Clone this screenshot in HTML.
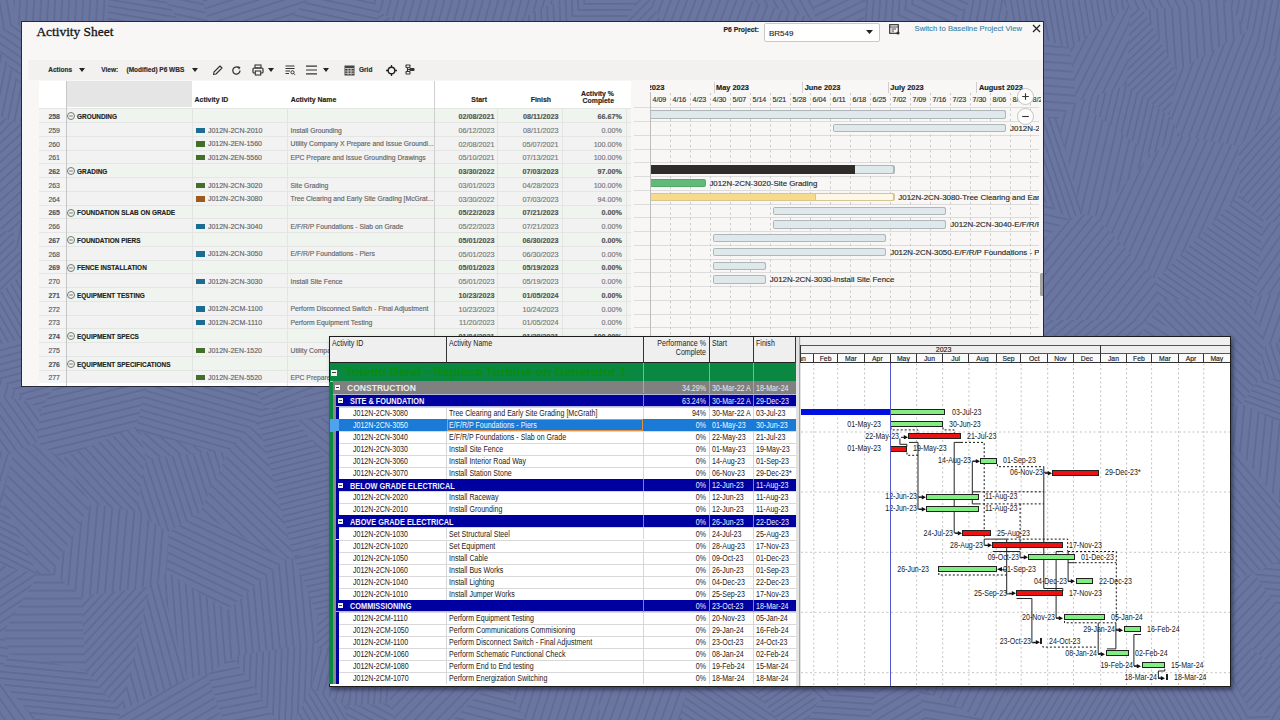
<!DOCTYPE html><html><head><meta charset="utf-8"><style>
html,body{margin:0;padding:0;}
body{width:1280px;height:720px;position:relative;overflow:hidden;background:#65719a;font-family:'Liberation Sans', sans-serif;}
body div, body svg{position:absolute;}
</style></head><body>
<svg style="left:0;top:0;width:1280px;height:720px" viewBox="0 0 1280 720"><rect width="1280" height="720" fill="#6a75a0"/><defs><pattern id="h0" patternUnits="userSpaceOnUse" width="7.93" height="7.93" patternTransform="rotate(117.5)"><rect width="7.93" height="1.6" fill="#5f6a94"/></pattern><pattern id="h1" patternUnits="userSpaceOnUse" width="6.50" height="6.50" patternTransform="rotate(121.5)"><rect width="6.50" height="1.6" fill="#5f6a94"/></pattern><pattern id="h2" patternUnits="userSpaceOnUse" width="7.70" height="7.70" patternTransform="rotate(116.8)"><rect width="7.70" height="1.6" fill="#5f6a94"/></pattern><pattern id="h3" patternUnits="userSpaceOnUse" width="6.23" height="6.23" patternTransform="rotate(60.2)"><rect width="6.23" height="1.6" fill="#5f6a94"/></pattern><pattern id="h4" patternUnits="userSpaceOnUse" width="6.90" height="6.90" patternTransform="rotate(49.4)"><rect width="6.90" height="1.6" fill="#5f6a94"/></pattern><pattern id="h5" patternUnits="userSpaceOnUse" width="7.45" height="7.45" patternTransform="rotate(86.2)"><rect width="7.45" height="1.6" fill="#5f6a94"/></pattern><pattern id="h6" patternUnits="userSpaceOnUse" width="7.15" height="7.15" patternTransform="rotate(148.1)"><rect width="7.15" height="1.6" fill="#5f6a94"/></pattern><pattern id="h7" patternUnits="userSpaceOnUse" width="6.21" height="6.21" patternTransform="rotate(-4.9)"><rect width="6.21" height="1.6" fill="#5f6a94"/></pattern><pattern id="h8" patternUnits="userSpaceOnUse" width="6.77" height="6.77" patternTransform="rotate(134.4)"><rect width="6.77" height="1.6" fill="#5f6a94"/></pattern><pattern id="h9" patternUnits="userSpaceOnUse" width="6.63" height="6.63" patternTransform="rotate(104.8)"><rect width="6.63" height="1.6" fill="#5f6a94"/></pattern><pattern id="h10" patternUnits="userSpaceOnUse" width="7.47" height="7.47" patternTransform="rotate(114.4)"><rect width="7.47" height="1.6" fill="#5f6a94"/></pattern><pattern id="h11" patternUnits="userSpaceOnUse" width="7.93" height="7.93" patternTransform="rotate(4.2)"><rect width="7.93" height="1.6" fill="#5f6a94"/></pattern><pattern id="h12" patternUnits="userSpaceOnUse" width="6.42" height="6.42" patternTransform="rotate(92.2)"><rect width="6.42" height="1.6" fill="#5f6a94"/></pattern><pattern id="h13" patternUnits="userSpaceOnUse" width="7.86" height="7.86" patternTransform="rotate(10.0)"><rect width="7.86" height="1.6" fill="#5f6a94"/></pattern><pattern id="h14" patternUnits="userSpaceOnUse" width="6.24" height="6.24" patternTransform="rotate(108.8)"><rect width="6.24" height="1.6" fill="#5f6a94"/></pattern><pattern id="h15" patternUnits="userSpaceOnUse" width="7.71" height="7.71" patternTransform="rotate(133.5)"><rect width="7.71" height="1.6" fill="#5f6a94"/></pattern><pattern id="h16" patternUnits="userSpaceOnUse" width="7.24" height="7.24" patternTransform="rotate(58.0)"><rect width="7.24" height="1.6" fill="#5f6a94"/></pattern><pattern id="h17" patternUnits="userSpaceOnUse" width="6.74" height="6.74" patternTransform="rotate(78.6)"><rect width="6.74" height="1.6" fill="#5f6a94"/></pattern><pattern id="h18" patternUnits="userSpaceOnUse" width="7.31" height="7.31" patternTransform="rotate(169.0)"><rect width="7.31" height="1.6" fill="#5f6a94"/></pattern><pattern id="h19" patternUnits="userSpaceOnUse" width="7.74" height="7.74" patternTransform="rotate(149.2)"><rect width="7.74" height="1.6" fill="#5f6a94"/></pattern><pattern id="h20" patternUnits="userSpaceOnUse" width="8.04" height="8.04" patternTransform="rotate(114.4)"><rect width="8.04" height="1.6" fill="#5f6a94"/></pattern><pattern id="h21" patternUnits="userSpaceOnUse" width="6.78" height="6.78" patternTransform="rotate(47.9)"><rect width="6.78" height="1.6" fill="#5f6a94"/></pattern><pattern id="h22" patternUnits="userSpaceOnUse" width="6.34" height="6.34" patternTransform="rotate(9.4)"><rect width="6.34" height="1.6" fill="#5f6a94"/></pattern><pattern id="h23" patternUnits="userSpaceOnUse" width="7.82" height="7.82" patternTransform="rotate(39.5)"><rect width="7.82" height="1.6" fill="#5f6a94"/></pattern><pattern id="h24" patternUnits="userSpaceOnUse" width="6.68" height="6.68" patternTransform="rotate(106.9)"><rect width="6.68" height="1.6" fill="#5f6a94"/></pattern><pattern id="h25" patternUnits="userSpaceOnUse" width="7.82" height="7.82" patternTransform="rotate(89.6)"><rect width="7.82" height="1.6" fill="#5f6a94"/></pattern><pattern id="h26" patternUnits="userSpaceOnUse" width="6.63" height="6.63" patternTransform="rotate(140.1)"><rect width="6.63" height="1.6" fill="#5f6a94"/></pattern><pattern id="h27" patternUnits="userSpaceOnUse" width="6.27" height="6.27" patternTransform="rotate(100.2)"><rect width="6.27" height="1.6" fill="#5f6a94"/></pattern><pattern id="h28" patternUnits="userSpaceOnUse" width="7.78" height="7.78" patternTransform="rotate(24.9)"><rect width="7.78" height="1.6" fill="#5f6a94"/></pattern><pattern id="h29" patternUnits="userSpaceOnUse" width="6.48" height="6.48" patternTransform="rotate(100.8)"><rect width="6.48" height="1.6" fill="#5f6a94"/></pattern><pattern id="h30" patternUnits="userSpaceOnUse" width="7.53" height="7.53" patternTransform="rotate(63.8)"><rect width="7.53" height="1.6" fill="#5f6a94"/></pattern><pattern id="h31" patternUnits="userSpaceOnUse" width="6.96" height="6.96" patternTransform="rotate(146.8)"><rect width="6.96" height="1.6" fill="#5f6a94"/></pattern><pattern id="h32" patternUnits="userSpaceOnUse" width="7.53" height="7.53" patternTransform="rotate(-1.9)"><rect width="7.53" height="1.6" fill="#5f6a94"/></pattern><pattern id="h33" patternUnits="userSpaceOnUse" width="7.39" height="7.39" patternTransform="rotate(80.3)"><rect width="7.39" height="1.6" fill="#5f6a94"/></pattern><pattern id="h34" patternUnits="userSpaceOnUse" width="7.73" height="7.73" patternTransform="rotate(149.5)"><rect width="7.73" height="1.6" fill="#5f6a94"/></pattern><pattern id="h35" patternUnits="userSpaceOnUse" width="7.35" height="7.35" patternTransform="rotate(25.4)"><rect width="7.35" height="1.6" fill="#5f6a94"/></pattern><pattern id="h36" patternUnits="userSpaceOnUse" width="6.45" height="6.45" patternTransform="rotate(59.4)"><rect width="6.45" height="1.6" fill="#5f6a94"/></pattern><pattern id="h37" patternUnits="userSpaceOnUse" width="7.45" height="7.45" patternTransform="rotate(24.4)"><rect width="7.45" height="1.6" fill="#5f6a94"/></pattern><pattern id="h38" patternUnits="userSpaceOnUse" width="6.11" height="6.11" patternTransform="rotate(131.8)"><rect width="6.11" height="1.6" fill="#5f6a94"/></pattern><pattern id="h39" patternUnits="userSpaceOnUse" width="7.43" height="7.43" patternTransform="rotate(94.9)"><rect width="7.43" height="1.6" fill="#5f6a94"/></pattern><pattern id="h40" patternUnits="userSpaceOnUse" width="6.93" height="6.93" patternTransform="rotate(147.7)"><rect width="6.93" height="1.6" fill="#5f6a94"/></pattern><pattern id="h41" patternUnits="userSpaceOnUse" width="8.04" height="8.04" patternTransform="rotate(54.8)"><rect width="8.04" height="1.6" fill="#5f6a94"/></pattern><pattern id="h42" patternUnits="userSpaceOnUse" width="6.46" height="6.46" patternTransform="rotate(101.0)"><rect width="6.46" height="1.6" fill="#5f6a94"/></pattern><pattern id="h43" patternUnits="userSpaceOnUse" width="6.04" height="6.04" patternTransform="rotate(146.5)"><rect width="6.04" height="1.6" fill="#5f6a94"/></pattern><pattern id="h44" patternUnits="userSpaceOnUse" width="8.00" height="8.00" patternTransform="rotate(134.2)"><rect width="8.00" height="1.6" fill="#5f6a94"/></pattern><pattern id="h45" patternUnits="userSpaceOnUse" width="6.90" height="6.90" patternTransform="rotate(-0.5)"><rect width="6.90" height="1.6" fill="#5f6a94"/></pattern><pattern id="h46" patternUnits="userSpaceOnUse" width="6.04" height="6.04" patternTransform="rotate(148.9)"><rect width="6.04" height="1.6" fill="#5f6a94"/></pattern><pattern id="h47" patternUnits="userSpaceOnUse" width="7.71" height="7.71" patternTransform="rotate(124.0)"><rect width="7.71" height="1.6" fill="#5f6a94"/></pattern><pattern id="h48" patternUnits="userSpaceOnUse" width="6.15" height="6.15" patternTransform="rotate(133.2)"><rect width="6.15" height="1.6" fill="#5f6a94"/></pattern><pattern id="h49" patternUnits="userSpaceOnUse" width="7.64" height="7.64" patternTransform="rotate(11.8)"><rect width="7.64" height="1.6" fill="#5f6a94"/></pattern><pattern id="h50" patternUnits="userSpaceOnUse" width="6.06" height="6.06" patternTransform="rotate(20.2)"><rect width="6.06" height="1.6" fill="#5f6a94"/></pattern><pattern id="h51" patternUnits="userSpaceOnUse" width="6.99" height="6.99" patternTransform="rotate(46.7)"><rect width="6.99" height="1.6" fill="#5f6a94"/></pattern><pattern id="h52" patternUnits="userSpaceOnUse" width="7.70" height="7.70" patternTransform="rotate(-5.4)"><rect width="7.70" height="1.6" fill="#5f6a94"/></pattern><pattern id="h53" patternUnits="userSpaceOnUse" width="6.06" height="6.06" patternTransform="rotate(102.7)"><rect width="6.06" height="1.6" fill="#5f6a94"/></pattern><pattern id="h54" patternUnits="userSpaceOnUse" width="6.36" height="6.36" patternTransform="rotate(5.4)"><rect width="6.36" height="1.6" fill="#5f6a94"/></pattern><pattern id="h55" patternUnits="userSpaceOnUse" width="6.79" height="6.79" patternTransform="rotate(165.1)"><rect width="6.79" height="1.6" fill="#5f6a94"/></pattern><pattern id="h56" patternUnits="userSpaceOnUse" width="7.90" height="7.90" patternTransform="rotate(116.8)"><rect width="7.90" height="1.6" fill="#5f6a94"/></pattern><pattern id="h57" patternUnits="userSpaceOnUse" width="8.02" height="8.02" patternTransform="rotate(10.0)"><rect width="8.02" height="1.6" fill="#5f6a94"/></pattern><pattern id="h58" patternUnits="userSpaceOnUse" width="7.75" height="7.75" patternTransform="rotate(31.2)"><rect width="7.75" height="1.6" fill="#5f6a94"/></pattern><pattern id="h59" patternUnits="userSpaceOnUse" width="6.88" height="6.88" patternTransform="rotate(46.5)"><rect width="6.88" height="1.6" fill="#5f6a94"/></pattern><pattern id="h60" patternUnits="userSpaceOnUse" width="7.15" height="7.15" patternTransform="rotate(74.8)"><rect width="7.15" height="1.6" fill="#5f6a94"/></pattern><pattern id="h61" patternUnits="userSpaceOnUse" width="6.23" height="6.23" patternTransform="rotate(90.3)"><rect width="6.23" height="1.6" fill="#5f6a94"/></pattern><pattern id="h62" patternUnits="userSpaceOnUse" width="6.60" height="6.60" patternTransform="rotate(5.0)"><rect width="6.60" height="1.6" fill="#5f6a94"/></pattern><pattern id="h63" patternUnits="userSpaceOnUse" width="8.05" height="8.05" patternTransform="rotate(109.7)"><rect width="8.05" height="1.6" fill="#5f6a94"/></pattern><pattern id="h64" patternUnits="userSpaceOnUse" width="6.60" height="6.60" patternTransform="rotate(115.4)"><rect width="6.60" height="1.6" fill="#5f6a94"/></pattern><pattern id="h65" patternUnits="userSpaceOnUse" width="6.50" height="6.50" patternTransform="rotate(18.4)"><rect width="6.50" height="1.6" fill="#5f6a94"/></pattern><pattern id="h66" patternUnits="userSpaceOnUse" width="6.22" height="6.22" patternTransform="rotate(87.8)"><rect width="6.22" height="1.6" fill="#5f6a94"/></pattern><pattern id="h67" patternUnits="userSpaceOnUse" width="7.41" height="7.41" patternTransform="rotate(14.7)"><rect width="7.41" height="1.6" fill="#5f6a94"/></pattern><pattern id="h68" patternUnits="userSpaceOnUse" width="7.35" height="7.35" patternTransform="rotate(95.6)"><rect width="7.35" height="1.6" fill="#5f6a94"/></pattern><pattern id="h69" patternUnits="userSpaceOnUse" width="7.42" height="7.42" patternTransform="rotate(54.7)"><rect width="7.42" height="1.6" fill="#5f6a94"/></pattern><pattern id="h70" patternUnits="userSpaceOnUse" width="7.62" height="7.62" patternTransform="rotate(2.4)"><rect width="7.62" height="1.6" fill="#5f6a94"/></pattern><pattern id="h71" patternUnits="userSpaceOnUse" width="6.10" height="6.10" patternTransform="rotate(79.6)"><rect width="6.10" height="1.6" fill="#5f6a94"/></pattern><pattern id="h72" patternUnits="userSpaceOnUse" width="7.57" height="7.57" patternTransform="rotate(73.6)"><rect width="7.57" height="1.6" fill="#5f6a94"/></pattern><pattern id="h73" patternUnits="userSpaceOnUse" width="7.32" height="7.32" patternTransform="rotate(4.8)"><rect width="7.32" height="1.6" fill="#5f6a94"/></pattern><pattern id="h74" patternUnits="userSpaceOnUse" width="6.88" height="6.88" patternTransform="rotate(30.9)"><rect width="6.88" height="1.6" fill="#5f6a94"/></pattern><pattern id="h75" patternUnits="userSpaceOnUse" width="7.96" height="7.96" patternTransform="rotate(166.9)"><rect width="7.96" height="1.6" fill="#5f6a94"/></pattern><pattern id="h76" patternUnits="userSpaceOnUse" width="6.85" height="6.85" patternTransform="rotate(159.6)"><rect width="6.85" height="1.6" fill="#5f6a94"/></pattern><pattern id="h77" patternUnits="userSpaceOnUse" width="6.75" height="6.75" patternTransform="rotate(18.7)"><rect width="6.75" height="1.6" fill="#5f6a94"/></pattern><pattern id="h78" patternUnits="userSpaceOnUse" width="6.59" height="6.59" patternTransform="rotate(27.9)"><rect width="6.59" height="1.6" fill="#5f6a94"/></pattern><pattern id="h79" patternUnits="userSpaceOnUse" width="7.37" height="7.37" patternTransform="rotate(27.2)"><rect width="7.37" height="1.6" fill="#5f6a94"/></pattern><pattern id="h80" patternUnits="userSpaceOnUse" width="7.09" height="7.09" patternTransform="rotate(54.4)"><rect width="7.09" height="1.6" fill="#5f6a94"/></pattern><pattern id="h81" patternUnits="userSpaceOnUse" width="6.01" height="6.01" patternTransform="rotate(165.7)"><rect width="6.01" height="1.6" fill="#5f6a94"/></pattern><pattern id="h82" patternUnits="userSpaceOnUse" width="7.69" height="7.69" patternTransform="rotate(5.6)"><rect width="7.69" height="1.6" fill="#5f6a94"/></pattern><pattern id="h83" patternUnits="userSpaceOnUse" width="7.94" height="7.94" patternTransform="rotate(94.3)"><rect width="7.94" height="1.6" fill="#5f6a94"/></pattern><pattern id="h84" patternUnits="userSpaceOnUse" width="7.06" height="7.06" patternTransform="rotate(129.2)"><rect width="7.06" height="1.6" fill="#5f6a94"/></pattern><pattern id="h85" patternUnits="userSpaceOnUse" width="6.64" height="6.64" patternTransform="rotate(28.3)"><rect width="6.64" height="1.6" fill="#5f6a94"/></pattern><pattern id="h86" patternUnits="userSpaceOnUse" width="7.25" height="7.25" patternTransform="rotate(-4.0)"><rect width="7.25" height="1.6" fill="#5f6a94"/></pattern><pattern id="h87" patternUnits="userSpaceOnUse" width="6.15" height="6.15" patternTransform="rotate(32.7)"><rect width="6.15" height="1.6" fill="#5f6a94"/></pattern><pattern id="h88" patternUnits="userSpaceOnUse" width="7.27" height="7.27" patternTransform="rotate(121.3)"><rect width="7.27" height="1.6" fill="#5f6a94"/></pattern><pattern id="h89" patternUnits="userSpaceOnUse" width="7.92" height="7.92" patternTransform="rotate(29.4)"><rect width="7.92" height="1.6" fill="#5f6a94"/></pattern><pattern id="h90" patternUnits="userSpaceOnUse" width="6.62" height="6.62" patternTransform="rotate(85.4)"><rect width="6.62" height="1.6" fill="#5f6a94"/></pattern><pattern id="h91" patternUnits="userSpaceOnUse" width="6.86" height="6.86" patternTransform="rotate(44.5)"><rect width="6.86" height="1.6" fill="#5f6a94"/></pattern><pattern id="h92" patternUnits="userSpaceOnUse" width="7.35" height="7.35" patternTransform="rotate(99.6)"><rect width="7.35" height="1.6" fill="#5f6a94"/></pattern><pattern id="h93" patternUnits="userSpaceOnUse" width="7.99" height="7.99" patternTransform="rotate(30.4)"><rect width="7.99" height="1.6" fill="#5f6a94"/></pattern><pattern id="h94" patternUnits="userSpaceOnUse" width="6.22" height="6.22" patternTransform="rotate(129.0)"><rect width="6.22" height="1.6" fill="#5f6a94"/></pattern><pattern id="h95" patternUnits="userSpaceOnUse" width="6.39" height="6.39" patternTransform="rotate(92.2)"><rect width="6.39" height="1.6" fill="#5f6a94"/></pattern><pattern id="h96" patternUnits="userSpaceOnUse" width="7.16" height="7.16" patternTransform="rotate(-5.6)"><rect width="7.16" height="1.6" fill="#5f6a94"/></pattern><pattern id="h97" patternUnits="userSpaceOnUse" width="6.69" height="6.69" patternTransform="rotate(107.5)"><rect width="6.69" height="1.6" fill="#5f6a94"/></pattern><pattern id="h98" patternUnits="userSpaceOnUse" width="6.53" height="6.53" patternTransform="rotate(101.6)"><rect width="6.53" height="1.6" fill="#5f6a94"/></pattern><pattern id="h99" patternUnits="userSpaceOnUse" width="7.03" height="7.03" patternTransform="rotate(42.6)"><rect width="7.03" height="1.6" fill="#5f6a94"/></pattern><pattern id="h100" patternUnits="userSpaceOnUse" width="7.65" height="7.65" patternTransform="rotate(43.4)"><rect width="7.65" height="1.6" fill="#5f6a94"/></pattern><pattern id="h101" patternUnits="userSpaceOnUse" width="7.73" height="7.73" patternTransform="rotate(154.1)"><rect width="7.73" height="1.6" fill="#5f6a94"/></pattern><pattern id="h102" patternUnits="userSpaceOnUse" width="6.68" height="6.68" patternTransform="rotate(134.9)"><rect width="6.68" height="1.6" fill="#5f6a94"/></pattern><pattern id="h103" patternUnits="userSpaceOnUse" width="6.98" height="6.98" patternTransform="rotate(34.0)"><rect width="6.98" height="1.6" fill="#5f6a94"/></pattern><pattern id="h104" patternUnits="userSpaceOnUse" width="6.78" height="6.78" patternTransform="rotate(-4.9)"><rect width="6.78" height="1.6" fill="#5f6a94"/></pattern><pattern id="h105" patternUnits="userSpaceOnUse" width="7.88" height="7.88" patternTransform="rotate(162.4)"><rect width="7.88" height="1.6" fill="#5f6a94"/></pattern><pattern id="h106" patternUnits="userSpaceOnUse" width="6.94" height="6.94" patternTransform="rotate(74.7)"><rect width="6.94" height="1.6" fill="#5f6a94"/></pattern><pattern id="h107" patternUnits="userSpaceOnUse" width="7.63" height="7.63" patternTransform="rotate(121.5)"><rect width="7.63" height="1.6" fill="#5f6a94"/></pattern><pattern id="h108" patternUnits="userSpaceOnUse" width="6.17" height="6.17" patternTransform="rotate(92.3)"><rect width="6.17" height="1.6" fill="#5f6a94"/></pattern><pattern id="h109" patternUnits="userSpaceOnUse" width="6.34" height="6.34" patternTransform="rotate(136.0)"><rect width="6.34" height="1.6" fill="#5f6a94"/></pattern><pattern id="h110" patternUnits="userSpaceOnUse" width="7.37" height="7.37" patternTransform="rotate(84.3)"><rect width="7.37" height="1.6" fill="#5f6a94"/></pattern><pattern id="h111" patternUnits="userSpaceOnUse" width="6.75" height="6.75" patternTransform="rotate(132.7)"><rect width="6.75" height="1.6" fill="#5f6a94"/></pattern><pattern id="h112" patternUnits="userSpaceOnUse" width="7.40" height="7.40" patternTransform="rotate(105.5)"><rect width="7.40" height="1.6" fill="#5f6a94"/></pattern><pattern id="h113" patternUnits="userSpaceOnUse" width="7.66" height="7.66" patternTransform="rotate(110.8)"><rect width="7.66" height="1.6" fill="#5f6a94"/></pattern><pattern id="h114" patternUnits="userSpaceOnUse" width="6.08" height="6.08" patternTransform="rotate(165.7)"><rect width="6.08" height="1.6" fill="#5f6a94"/></pattern><pattern id="h115" patternUnits="userSpaceOnUse" width="6.71" height="6.71" patternTransform="rotate(33.6)"><rect width="6.71" height="1.6" fill="#5f6a94"/></pattern><pattern id="h116" patternUnits="userSpaceOnUse" width="7.57" height="7.57" patternTransform="rotate(129.2)"><rect width="7.57" height="1.6" fill="#5f6a94"/></pattern><pattern id="h117" patternUnits="userSpaceOnUse" width="6.11" height="6.11" patternTransform="rotate(42.4)"><rect width="6.11" height="1.6" fill="#5f6a94"/></pattern><pattern id="h118" patternUnits="userSpaceOnUse" width="7.23" height="7.23" patternTransform="rotate(18.3)"><rect width="7.23" height="1.6" fill="#5f6a94"/></pattern><pattern id="h119" patternUnits="userSpaceOnUse" width="7.98" height="7.98" patternTransform="rotate(164.0)"><rect width="7.98" height="1.6" fill="#5f6a94"/></pattern><pattern id="h120" patternUnits="userSpaceOnUse" width="7.45" height="7.45" patternTransform="rotate(-2.7)"><rect width="7.45" height="1.6" fill="#5f6a94"/></pattern><pattern id="h121" patternUnits="userSpaceOnUse" width="6.14" height="6.14" patternTransform="rotate(9.5)"><rect width="6.14" height="1.6" fill="#5f6a94"/></pattern><pattern id="h122" patternUnits="userSpaceOnUse" width="7.39" height="7.39" patternTransform="rotate(64.8)"><rect width="7.39" height="1.6" fill="#5f6a94"/></pattern><pattern id="h123" patternUnits="userSpaceOnUse" width="7.13" height="7.13" patternTransform="rotate(166.3)"><rect width="7.13" height="1.6" fill="#5f6a94"/></pattern><pattern id="h124" patternUnits="userSpaceOnUse" width="7.83" height="7.83" patternTransform="rotate(105.2)"><rect width="7.83" height="1.6" fill="#5f6a94"/></pattern><pattern id="h125" patternUnits="userSpaceOnUse" width="7.60" height="7.60" patternTransform="rotate(43.1)"><rect width="7.60" height="1.6" fill="#5f6a94"/></pattern><pattern id="h126" patternUnits="userSpaceOnUse" width="5.96" height="5.96" patternTransform="rotate(88.7)"><rect width="5.96" height="1.6" fill="#5f6a94"/></pattern><pattern id="h127" patternUnits="userSpaceOnUse" width="7.53" height="7.53" patternTransform="rotate(88.5)"><rect width="7.53" height="1.6" fill="#5f6a94"/></pattern><pattern id="h128" patternUnits="userSpaceOnUse" width="7.86" height="7.86" patternTransform="rotate(124.8)"><rect width="7.86" height="1.6" fill="#5f6a94"/></pattern><pattern id="h129" patternUnits="userSpaceOnUse" width="6.63" height="6.63" patternTransform="rotate(132.9)"><rect width="6.63" height="1.6" fill="#5f6a94"/></pattern><pattern id="h130" patternUnits="userSpaceOnUse" width="7.40" height="7.40" patternTransform="rotate(169.7)"><rect width="7.40" height="1.6" fill="#5f6a94"/></pattern><pattern id="h131" patternUnits="userSpaceOnUse" width="6.16" height="6.16" patternTransform="rotate(72.0)"><rect width="6.16" height="1.6" fill="#5f6a94"/></pattern><pattern id="h132" patternUnits="userSpaceOnUse" width="6.51" height="6.51" patternTransform="rotate(57.7)"><rect width="6.51" height="1.6" fill="#5f6a94"/></pattern><pattern id="h133" patternUnits="userSpaceOnUse" width="7.95" height="7.95" patternTransform="rotate(129.9)"><rect width="7.95" height="1.6" fill="#5f6a94"/></pattern><pattern id="h134" patternUnits="userSpaceOnUse" width="7.56" height="7.56" patternTransform="rotate(16.6)"><rect width="7.56" height="1.6" fill="#5f6a94"/></pattern><pattern id="h135" patternUnits="userSpaceOnUse" width="7.15" height="7.15" patternTransform="rotate(46.9)"><rect width="7.15" height="1.6" fill="#5f6a94"/></pattern><pattern id="h136" patternUnits="userSpaceOnUse" width="7.80" height="7.80" patternTransform="rotate(154.0)"><rect width="7.80" height="1.6" fill="#5f6a94"/></pattern><pattern id="h137" patternUnits="userSpaceOnUse" width="6.43" height="6.43" patternTransform="rotate(163.9)"><rect width="6.43" height="1.6" fill="#5f6a94"/></pattern><pattern id="h138" patternUnits="userSpaceOnUse" width="7.85" height="7.85" patternTransform="rotate(105.3)"><rect width="7.85" height="1.6" fill="#5f6a94"/></pattern><pattern id="h139" patternUnits="userSpaceOnUse" width="6.13" height="6.13" patternTransform="rotate(59.0)"><rect width="6.13" height="1.6" fill="#5f6a94"/></pattern><pattern id="h140" patternUnits="userSpaceOnUse" width="6.01" height="6.01" patternTransform="rotate(71.2)"><rect width="6.01" height="1.6" fill="#5f6a94"/></pattern><pattern id="h141" patternUnits="userSpaceOnUse" width="7.12" height="7.12" patternTransform="rotate(12.5)"><rect width="7.12" height="1.6" fill="#5f6a94"/></pattern><pattern id="h142" patternUnits="userSpaceOnUse" width="6.35" height="6.35" patternTransform="rotate(131.2)"><rect width="6.35" height="1.6" fill="#5f6a94"/></pattern><pattern id="h143" patternUnits="userSpaceOnUse" width="7.60" height="7.60" patternTransform="rotate(130.2)"><rect width="7.60" height="1.6" fill="#5f6a94"/></pattern><pattern id="h144" patternUnits="userSpaceOnUse" width="6.08" height="6.08" patternTransform="rotate(77.7)"><rect width="6.08" height="1.6" fill="#5f6a94"/></pattern><pattern id="h145" patternUnits="userSpaceOnUse" width="7.04" height="7.04" patternTransform="rotate(100.7)"><rect width="7.04" height="1.6" fill="#5f6a94"/></pattern><pattern id="h146" patternUnits="userSpaceOnUse" width="7.74" height="7.74" patternTransform="rotate(12.8)"><rect width="7.74" height="1.6" fill="#5f6a94"/></pattern><pattern id="h147" patternUnits="userSpaceOnUse" width="7.84" height="7.84" patternTransform="rotate(148.6)"><rect width="7.84" height="1.6" fill="#5f6a94"/></pattern><pattern id="h148" patternUnits="userSpaceOnUse" width="7.63" height="7.63" patternTransform="rotate(166.4)"><rect width="7.63" height="1.6" fill="#5f6a94"/></pattern><pattern id="h149" patternUnits="userSpaceOnUse" width="7.36" height="7.36" patternTransform="rotate(9.0)"><rect width="7.36" height="1.6" fill="#5f6a94"/></pattern><pattern id="h150" patternUnits="userSpaceOnUse" width="6.27" height="6.27" patternTransform="rotate(10.1)"><rect width="6.27" height="1.6" fill="#5f6a94"/></pattern><pattern id="h151" patternUnits="userSpaceOnUse" width="7.16" height="7.16" patternTransform="rotate(138.1)"><rect width="7.16" height="1.6" fill="#5f6a94"/></pattern><pattern id="h152" patternUnits="userSpaceOnUse" width="7.66" height="7.66" patternTransform="rotate(107.8)"><rect width="7.66" height="1.6" fill="#5f6a94"/></pattern><pattern id="h153" patternUnits="userSpaceOnUse" width="7.89" height="7.89" patternTransform="rotate(32.6)"><rect width="7.89" height="1.6" fill="#5f6a94"/></pattern><pattern id="h154" patternUnits="userSpaceOnUse" width="7.98" height="7.98" patternTransform="rotate(136.5)"><rect width="7.98" height="1.6" fill="#5f6a94"/></pattern><pattern id="h155" patternUnits="userSpaceOnUse" width="7.66" height="7.66" patternTransform="rotate(13.4)"><rect width="7.66" height="1.6" fill="#5f6a94"/></pattern><pattern id="h156" patternUnits="userSpaceOnUse" width="6.74" height="6.74" patternTransform="rotate(41.5)"><rect width="6.74" height="1.6" fill="#5f6a94"/></pattern><pattern id="h157" patternUnits="userSpaceOnUse" width="8.02" height="8.02" patternTransform="rotate(109.7)"><rect width="8.02" height="1.6" fill="#5f6a94"/></pattern><pattern id="h158" patternUnits="userSpaceOnUse" width="7.93" height="7.93" patternTransform="rotate(12.0)"><rect width="7.93" height="1.6" fill="#5f6a94"/></pattern><pattern id="h159" patternUnits="userSpaceOnUse" width="6.20" height="6.20" patternTransform="rotate(103.5)"><rect width="6.20" height="1.6" fill="#5f6a94"/></pattern><pattern id="h160" patternUnits="userSpaceOnUse" width="6.23" height="6.23" patternTransform="rotate(140.5)"><rect width="6.23" height="1.6" fill="#5f6a94"/></pattern><pattern id="h161" patternUnits="userSpaceOnUse" width="7.97" height="7.97" patternTransform="rotate(-0.1)"><rect width="7.97" height="1.6" fill="#5f6a94"/></pattern><pattern id="h162" patternUnits="userSpaceOnUse" width="7.55" height="7.55" patternTransform="rotate(159.9)"><rect width="7.55" height="1.6" fill="#5f6a94"/></pattern><pattern id="h163" patternUnits="userSpaceOnUse" width="5.98" height="5.98" patternTransform="rotate(167.5)"><rect width="5.98" height="1.6" fill="#5f6a94"/></pattern><pattern id="h164" patternUnits="userSpaceOnUse" width="7.53" height="7.53" patternTransform="rotate(111.0)"><rect width="7.53" height="1.6" fill="#5f6a94"/></pattern><pattern id="h165" patternUnits="userSpaceOnUse" width="6.75" height="6.75" patternTransform="rotate(50.0)"><rect width="6.75" height="1.6" fill="#5f6a94"/></pattern><pattern id="h166" patternUnits="userSpaceOnUse" width="7.30" height="7.30" patternTransform="rotate(64.9)"><rect width="7.30" height="1.6" fill="#5f6a94"/></pattern><pattern id="h167" patternUnits="userSpaceOnUse" width="6.57" height="6.57" patternTransform="rotate(15.9)"><rect width="6.57" height="1.6" fill="#5f6a94"/></pattern><pattern id="h168" patternUnits="userSpaceOnUse" width="6.08" height="6.08" patternTransform="rotate(80.3)"><rect width="6.08" height="1.6" fill="#5f6a94"/></pattern><pattern id="h169" patternUnits="userSpaceOnUse" width="6.83" height="6.83" patternTransform="rotate(84.6)"><rect width="6.83" height="1.6" fill="#5f6a94"/></pattern><pattern id="h170" patternUnits="userSpaceOnUse" width="7.46" height="7.46" patternTransform="rotate(42.3)"><rect width="7.46" height="1.6" fill="#5f6a94"/></pattern><pattern id="h171" patternUnits="userSpaceOnUse" width="6.15" height="6.15" patternTransform="rotate(27.3)"><rect width="6.15" height="1.6" fill="#5f6a94"/></pattern><pattern id="h172" patternUnits="userSpaceOnUse" width="6.33" height="6.33" patternTransform="rotate(104.2)"><rect width="6.33" height="1.6" fill="#5f6a94"/></pattern><pattern id="h173" patternUnits="userSpaceOnUse" width="6.46" height="6.46" patternTransform="rotate(94.3)"><rect width="6.46" height="1.6" fill="#5f6a94"/></pattern><pattern id="h174" patternUnits="userSpaceOnUse" width="7.65" height="7.65" patternTransform="rotate(103.3)"><rect width="7.65" height="1.6" fill="#5f6a94"/></pattern><pattern id="h175" patternUnits="userSpaceOnUse" width="6.25" height="6.25" patternTransform="rotate(3.8)"><rect width="6.25" height="1.6" fill="#5f6a94"/></pattern><pattern id="h176" patternUnits="userSpaceOnUse" width="7.13" height="7.13" patternTransform="rotate(-5.7)"><rect width="7.13" height="1.6" fill="#5f6a94"/></pattern><pattern id="h177" patternUnits="userSpaceOnUse" width="6.11" height="6.11" patternTransform="rotate(94.4)"><rect width="6.11" height="1.6" fill="#5f6a94"/></pattern><pattern id="h178" patternUnits="userSpaceOnUse" width="7.64" height="7.64" patternTransform="rotate(41.3)"><rect width="7.64" height="1.6" fill="#5f6a94"/></pattern><pattern id="h179" patternUnits="userSpaceOnUse" width="6.13" height="6.13" patternTransform="rotate(-0.3)"><rect width="6.13" height="1.6" fill="#5f6a94"/></pattern><pattern id="h180" patternUnits="userSpaceOnUse" width="7.71" height="7.71" patternTransform="rotate(61.2)"><rect width="7.71" height="1.6" fill="#5f6a94"/></pattern><pattern id="h181" patternUnits="userSpaceOnUse" width="6.06" height="6.06" patternTransform="rotate(105.1)"><rect width="6.06" height="1.6" fill="#5f6a94"/></pattern><pattern id="h182" patternUnits="userSpaceOnUse" width="7.00" height="7.00" patternTransform="rotate(93.3)"><rect width="7.00" height="1.6" fill="#5f6a94"/></pattern><pattern id="h183" patternUnits="userSpaceOnUse" width="7.34" height="7.34" patternTransform="rotate(140.3)"><rect width="7.34" height="1.6" fill="#5f6a94"/></pattern><pattern id="h184" patternUnits="userSpaceOnUse" width="6.03" height="6.03" patternTransform="rotate(136.6)"><rect width="6.03" height="1.6" fill="#5f6a94"/></pattern><pattern id="h185" patternUnits="userSpaceOnUse" width="7.47" height="7.47" patternTransform="rotate(-0.9)"><rect width="7.47" height="1.6" fill="#5f6a94"/></pattern><pattern id="h186" patternUnits="userSpaceOnUse" width="6.74" height="6.74" patternTransform="rotate(95.0)"><rect width="6.74" height="1.6" fill="#5f6a94"/></pattern><pattern id="h187" patternUnits="userSpaceOnUse" width="6.26" height="6.26" patternTransform="rotate(34.7)"><rect width="6.26" height="1.6" fill="#5f6a94"/></pattern><pattern id="h188" patternUnits="userSpaceOnUse" width="7.99" height="7.99" patternTransform="rotate(44.1)"><rect width="7.99" height="1.6" fill="#5f6a94"/></pattern><pattern id="h189" patternUnits="userSpaceOnUse" width="6.83" height="6.83" patternTransform="rotate(71.6)"><rect width="6.83" height="1.6" fill="#5f6a94"/></pattern></defs><path d="M774.4 497.9L834.1 564.3L833.9 565.5L774.8 568.0Z" fill="url(#h0)"/><path d="M1133.0 770.0L1001.9 770.0L999.0 728.4L1006.9 691.6L1042.8 680.9L1132.8 684.6Z" fill="url(#h1)"/><path d="M917.6 686.9L904.7 662.5L945.6 660.9L991.0 670.8L1006.9 691.6L999.0 728.4Z" fill="url(#h2)"/><path d="M-50.0 343.7L-50.0 332.5L27.5 270.5L43.8 284.3L55.0 331.7L-31.4 351.2Z" fill="url(#h3)"/><path d="M1313.2 545.4L1253.8 573.2L1220.8 583.0L1181.8 459.2L1218.8 425.5Z" fill="url(#h4)"/><path d="M1225.7 0.5L1247.5 31.0L1176.6 71.0L1142.8 9.9Z" fill="url(#h5)"/><path d="M646.7 159.0L586.9 181.8L555.1 152.1L556.1 140.0Z" fill="url(#h6)"/><path d="M740.4 464.0L644.4 456.8L649.8 432.9L719.6 364.6L730.7 377.2L740.5 463.4Z" fill="url(#h7)"/><path d="M-50.0 196.2L-50.0 94.3L15.9 123.0Z" fill="url(#h8)"/><path d="M311.7 688.1L319.2 647.7L351.6 658.5L348.0 706.3L347.7 706.5Z" fill="url(#h9)"/><path d="M1010.8 48.7L1036.4 114.4L985.1 130.8L975.1 81.3Z" fill="url(#h10)"/><path d="M1069.9 48.5L1076.2 101.8L1057.5 119.5L1036.4 114.4L1010.8 48.7L1015.2 29.1Z" fill="url(#h11)"/><path d="M863.0 42.0L865.2 46.6L863.3 85.0L759.9 56.3L848.2 38.0Z" fill="url(#h12)"/><path d="M-50.0 715.6L-50.0 615.9L3.0 633.4L9.5 653.6L-2.2 677.5Z" fill="url(#h13)"/><path d="M173.8 193.9L152.4 116.6L155.8 105.2L207.4 68.0L217.8 62.9L253.4 57.5L306.4 143.9Z" fill="url(#h14)"/><path d="M1330.0 681.8L1330.0 696.4L1302.8 693.0L1200.8 603.8L1220.8 583.0L1253.8 573.2Z" fill="url(#h15)"/><path d="M407.7 770.0L291.9 770.0L344.6 717.0L400.9 744.3L408.9 762.9Z" fill="url(#h16)"/><path d="M699.6 545.4L667.1 537.3L629.5 473.9L630.4 468.1L644.4 456.8L740.4 464.0L758.5 489.5Z" fill="url(#h17)"/><path d="M288.3 770.0L240.3 770.0L206.9 674.4L233.9 657.4L286.7 735.9Z" fill="url(#h18)"/><path d="M878.8 674.0L891.6 656.2L893.0 655.6L904.7 662.5L917.6 686.9L932.4 748.1L865.9 742.6Z" fill="url(#h19)"/><path d="M1155.4 280.2L1095.6 216.6L1151.2 155.2L1179.9 135.3L1238.4 146.1L1240.1 194.7Z" fill="url(#h20)"/><path d="M484.0 99.2L488.1 114.4L450.4 154.5L432.0 149.4L420.9 96.8L415.1 58.7Z" fill="url(#h21)"/><path d="M111.6 -50.0L134.7 -50.0L207.4 68.0L155.8 105.2L106.3 37.5Z" fill="url(#h22)"/><path d="M408.6 408.8L414.3 434.2L372.2 515.3L371.5 515.2L296.2 420.6Z" fill="url(#h23)"/><path d="M-50.0 545.3L-50.0 447.8L12.3 454.5L2.1 501.3Z" fill="url(#h24)"/><path d="M472.1 214.1L370.3 239.1L342.6 211.2L346.4 172.7L432.0 149.4L450.4 154.5L473.7 191.5Z" fill="url(#h25)"/><path d="M1098.2 410.9L1086.7 410.2L984.7 344.1L990.2 319.9L1148.2 319.9Z" fill="url(#h26)"/><path d="M368.2 358.8L369.7 340.7L406.8 293.6L416.9 297.5L448.3 362.3L416.1 390.6Z" fill="url(#h27)"/><path d="M989.0 -50.0L995.0 -50.0L993.2 -22.2L941.4 33.6L865.2 46.6L863.0 42.0L863.3 40.2Z" fill="url(#h28)"/><path d="M1233.7 -50.0L1330.0 -50.0L1330.0 83.4L1307.1 85.4L1247.5 31.0L1225.7 0.5Z" fill="url(#h29)"/><path d="M991.0 670.8L945.6 660.9L992.9 603.2L1004.5 637.9Z" fill="url(#h30)"/><path d="M-50.0 615.9L-50.0 607.0L10.7 568.3L37.7 573.5L38.4 574.0L3.0 633.4Z" fill="url(#h31)"/><path d="M414.3 434.2L408.6 408.8L416.1 390.6L448.3 362.3L498.4 367.9L501.1 465.4L496.7 473.3Z" fill="url(#h32)"/><path d="M-50.0 -50.0L20.4 -50.0L12.9 23.3L-6.2 40.3L-50.0 52.4Z" fill="url(#h33)"/><path d="M240.3 770.0L109.6 770.0L120.3 711.6L121.2 710.8L187.5 678.5L206.9 674.4Z" fill="url(#h34)"/><path d="M227.5 610.2L166.6 571.4L168.6 532.1L199.4 513.0L284.3 559.6Z" fill="url(#h35)"/><path d="M1217.6 770.0L1133.0 770.0L1132.8 684.6L1155.2 623.6L1195.6 607.4L1250.3 711.0Z" fill="url(#h36)"/><path d="M416.9 297.5L406.8 293.6L390.2 279.4L370.3 239.1L472.1 214.1L474.9 223.5L446.7 276.7Z" fill="url(#h37)"/><path d="M720.8 600.4L694.5 661.7L647.0 636.3L628.6 589.2L667.1 537.3L699.6 545.4Z" fill="url(#h38)"/><path d="M168.6 532.1L166.6 571.4L159.5 579.4L149.9 586.4L81.4 596.3L51.8 572.3L91.4 503.4L135.8 511.6Z" fill="url(#h39)"/><path d="M1132.8 684.6L1042.8 680.9L1029.9 637.6L1098.4 582.7L1155.2 623.6Z" fill="url(#h40)"/><path d="M82.6 770.0L-50.0 770.0L-50.0 715.6L-2.2 677.5Z" fill="url(#h41)"/><path d="M43.8 284.3L27.5 270.5L12.1 233.8L37.0 207.5L157.4 201.4L49.4 282.7Z" fill="url(#h42)"/><path d="M795.1 741.8L738.7 670.4L780.9 657.2L818.3 701.4Z" fill="url(#h43)"/><path d="M408.9 762.9L400.9 744.3L389.6 702.8L392.8 661.7L395.3 659.7L493.1 680.3Z" fill="url(#h44)"/><path d="M660.6 179.6L665.2 155.4L691.8 116.8L749.6 211.4L746.3 220.5L695.1 220.8L664.0 194.8Z" fill="url(#h45)"/><path d="M415.1 58.7L420.9 96.8L352.1 112.6L379.7 11.1L402.5 26.8Z" fill="url(#h46)"/><path d="M106.3 37.5L155.8 105.2L152.4 116.6L53.9 131.5L36.6 119.6L35.6 111.4L61.4 42.7Z" fill="url(#h47)"/><path d="M946.6 770.0L849.4 770.0L865.9 742.6L932.4 748.1Z" fill="url(#h48)"/><path d="M134.7 -50.0L190.9 -50.0L217.8 62.9L207.4 68.0Z" fill="url(#h49)"/><path d="M1330.0 367.2L1330.0 446.9L1241.9 403.8L1255.9 382.9L1307.9 369.4Z" fill="url(#h50)"/><path d="M556.1 140.0L555.1 152.1L530.6 180.2L530.5 180.2L473.7 191.5L450.4 154.5L488.1 114.4L489.4 114.4L554.8 126.1Z" fill="url(#h51)"/><path d="M694.5 661.7L720.8 600.4L769.3 582.1L791.2 603.5L808.6 631.6L780.9 657.2L738.7 670.4L695.1 663.1Z" fill="url(#h52)"/><path d="M528.9 349.2L526.0 309.3L536.6 266.8L542.0 263.3L655.0 308.1L622.6 340.0L560.5 358.9Z" fill="url(#h53)"/><path d="M109.6 770.0L82.6 770.0L-2.2 677.5L9.5 653.6L85.7 670.4L120.3 711.6Z" fill="url(#h54)"/><path d="M-31.4 351.2L55.0 331.7L68.6 360.8L40.7 410.2L27.8 401.6Z" fill="url(#h55)"/><path d="M1126.4 84.9L1078.3 101.6L1076.2 101.8L1069.9 48.5L1128.4 5.9L1130.7 7.6Z" fill="url(#h56)"/><path d="M1001.9 770.0L946.6 770.0L932.4 748.1L917.6 686.9L999.0 728.4Z" fill="url(#h57)"/><path d="M834.2 566.9L836.5 571.5L816.5 631.7L808.6 631.6L791.2 603.5Z" fill="url(#h58)"/><path d="M55.0 331.7L43.8 284.3L49.4 282.7L214.8 290.8L222.2 301.3L224.0 322.3L153.6 359.4L68.6 360.8Z" fill="url(#h59)"/><path d="M149.9 586.4L159.5 579.4L187.5 678.5L121.2 710.8Z" fill="url(#h60)"/><path d="M390.2 279.4L406.8 293.6L369.7 340.7L330.9 317.4Z" fill="url(#h61)"/><path d="M1330.0 540.4L1330.0 681.8L1253.8 573.2L1313.2 545.4Z" fill="url(#h62)"/><path d="M1330.0 289.6L1330.0 324.5L1284.9 341.1L1265.6 344.9L1249.7 300.8L1256.2 295.7Z" fill="url(#h63)"/><path d="M629.5 473.9L667.1 537.3L628.6 589.2L552.3 551.7Z" fill="url(#h64)"/><path d="M586.9 181.8L646.7 159.0L665.2 155.4L660.6 179.6L606.7 222.7L588.1 216.0Z" fill="url(#h65)"/><path d="M489.4 114.4L488.1 114.4L484.0 99.2L489.0 32.9L603.6 -19.8Z" fill="url(#h66)"/><path d="M552.0 770.0L407.7 770.0L408.9 762.9L493.1 680.3L502.2 677.4Z" fill="url(#h67)"/><path d="M1330.0 446.9L1330.0 540.4L1313.2 545.4L1218.8 425.5L1231.5 406.4L1241.9 403.8Z" fill="url(#h68)"/><path d="M661.9 219.1L665.4 304.9L658.3 306.0L620.7 254.0L614.0 236.3Z" fill="url(#h69)"/><path d="M53.9 131.5L152.4 116.6L173.8 193.9L173.6 196.5L157.4 201.4L37.0 207.5Z" fill="url(#h70)"/><path d="M1042.8 680.9L1006.9 691.6L991.0 670.8L1004.5 637.9L1029.9 637.6Z" fill="url(#h71)"/><path d="M401.8 554.0L527.9 559.5L514.4 635.4L404.0 598.2L400.3 589.0Z" fill="url(#h72)"/><path d="M992.3 570.9L987.3 568.5L1017.9 496.4L1080.0 553.9L1080.4 563.1Z" fill="url(#h73)"/><path d="M836.5 571.5L834.2 566.9L833.9 565.5L834.1 564.3L863.2 530.1L915.5 591.1L900.3 618.9Z" fill="url(#h74)"/><path d="M529.7 556.8L527.9 559.5L401.8 554.0L385.0 525.1L496.5 476.3Z" fill="url(#h75)"/><path d="M279.4 411.3L263.9 407.1L225.6 324.3L321.8 319.3L360.8 361.3Z" fill="url(#h76)"/><path d="M1017.9 496.4L987.3 568.5L960.9 558.1L951.3 513.7L969.4 481.3L998.1 469.3Z" fill="url(#h77)"/><path d="M400.9 744.3L344.6 717.0L347.7 706.5L348.0 706.3L389.6 702.8Z" fill="url(#h78)"/><path d="M848.9 359.7L869.9 363.2L911.2 384.5L910.7 392.5L881.7 448.4L817.4 425.7L812.1 390.0L813.0 385.3L819.4 379.3Z" fill="url(#h79)"/><path d="M-50.0 447.8L-50.0 386.7L27.8 401.6L40.7 410.2L37.0 442.1L12.3 454.5Z" fill="url(#h80)"/><path d="M296.2 420.6L371.5 515.2L294.1 558.2L294.1 558.2L257.3 419.8L263.9 407.1L279.4 411.3Z" fill="url(#h81)"/><path d="M515.7 644.7L514.4 635.4L527.9 559.5L529.7 556.8L552.3 551.7L628.6 589.2L647.0 636.3L593.5 654.4Z" fill="url(#h82)"/><path d="M893.0 655.6L891.6 656.2L816.5 631.7L836.5 571.5L900.3 618.9Z" fill="url(#h83)"/><path d="M372.2 515.3L414.3 434.2L496.7 473.3L496.5 476.3L385.0 525.1Z" fill="url(#h84)"/><path d="M945.6 660.9L904.7 662.5L893.0 655.6L900.3 618.9L915.5 591.1L960.9 558.1L987.3 568.5L992.3 570.9L992.9 603.2Z" fill="url(#h85)"/><path d="M404.0 598.2L514.4 635.4L515.7 644.7L502.2 677.4L493.1 680.3L395.3 659.7Z" fill="url(#h86)"/><path d="M1181.8 459.2L1220.8 583.0L1200.8 603.8L1195.6 607.4L1155.2 623.6L1098.4 582.7L1080.4 563.1L1080.0 553.9L1083.3 536.6L1125.8 447.2Z" fill="url(#h87)"/><path d="M1330.0 696.4L1330.0 737.7L1279.4 743.0L1268.7 713.2L1302.8 693.0Z" fill="url(#h88)"/><path d="M719.6 364.6L649.8 432.9L622.6 340.0L655.0 308.1L658.3 306.0L665.4 304.9L681.0 307.0L704.9 312.8Z" fill="url(#h89)"/><path d="M159.5 579.4L166.6 571.4L227.5 610.2L234.7 656.0L233.9 657.4L206.9 674.4L187.5 678.5Z" fill="url(#h90)"/><path d="M1255.9 382.9L1241.9 403.8L1231.5 406.4L1155.6 313.0L1159.6 299.1L1249.7 300.8L1265.6 344.9Z" fill="url(#h91)"/><path d="M951.3 513.7L960.9 558.1L915.5 591.1L863.2 530.1L862.9 493.4L871.3 487.6Z" fill="url(#h92)"/><path d="M975.1 81.3L985.1 130.8L967.8 151.3L883.9 184.6L880.1 180.3L866.1 143.9L953.5 72.4Z" fill="url(#h93)"/><path d="M1003.1 463.8L983.5 345.3L984.7 344.1L1086.7 410.2L1035.8 456.2Z" fill="url(#h94)"/><path d="M869.9 363.2L848.9 359.7L810.8 290.5L884.5 188.0L905.6 216.4Z" fill="url(#h95)"/><path d="M774.8 568.0L833.9 565.5L834.2 566.9L791.2 603.5L769.3 582.1Z" fill="url(#h96)"/><path d="M834.1 564.3L774.4 497.9L773.9 495.7L802.7 486.3L862.9 493.4L863.2 530.1Z" fill="url(#h97)"/><path d="M15.9 123.0L-50.0 94.3L-50.0 52.4L-6.2 40.3L35.6 111.4L36.6 119.6Z" fill="url(#h98)"/><path d="M496.7 473.3L501.1 465.4L585.4 439.8L630.4 468.1L629.5 473.9L552.3 551.7L529.7 556.8L496.5 476.3Z" fill="url(#h99)"/><path d="M284.3 559.6L199.4 513.0L228.0 452.4L257.3 419.8L294.1 558.2Z" fill="url(#h100)"/><path d="M807.0 -50.0L868.6 -50.0L863.3 40.2L863.0 42.0L848.2 38.0L815.2 19.7Z" fill="url(#h101)"/><path d="M691.8 116.8L665.2 155.4L646.7 159.0L556.1 140.0L554.8 126.1L644.7 -9.3L682.9 60.9L695.1 95.8Z" fill="url(#h102)"/><path d="M61.4 42.7L35.6 111.4L-6.2 40.3L12.9 23.3Z" fill="url(#h103)"/><path d="M420.9 96.8L432.0 149.4L346.4 172.7L337.2 159.7L352.1 112.6Z" fill="url(#h104)"/><path d="M190.9 -50.0L345.8 -50.0L345.8 -40.5L253.4 57.5L217.8 62.9Z" fill="url(#h105)"/><path d="M655.0 308.1L542.0 263.3L543.8 260.8L620.7 254.0L658.3 306.0Z" fill="url(#h106)"/><path d="M758.5 489.5L740.4 464.0L740.5 463.4L812.1 390.0L817.4 425.7L802.7 486.3L773.9 495.7Z" fill="url(#h107)"/><path d="M319.2 647.7L311.7 688.1L286.7 735.9L233.9 657.4L234.7 656.0L315.8 643.1Z" fill="url(#h108)"/><path d="M27.5 270.5L-50.0 332.5L-50.0 209.1L12.1 233.8Z" fill="url(#h109)"/><path d="M224.0 322.3L222.2 301.3L342.6 211.2L370.3 239.1L390.2 279.4L330.9 317.4L321.8 319.3L225.6 324.3Z" fill="url(#h110)"/><path d="M81.4 596.3L149.9 586.4L121.2 710.8L120.3 711.6L85.7 670.4Z" fill="url(#h111)"/><path d="M345.8 -50.0L638.2 -50.0L638.0 -38.6L603.6 -19.8L489.0 32.9L402.5 26.8L379.7 11.1L345.8 -40.5Z" fill="url(#h112)"/><path d="M815.2 19.7L848.2 38.0L759.9 56.3L682.9 60.9L644.7 -9.3L640.3 -31.6Z" fill="url(#h113)"/><path d="M704.9 312.8L681.0 307.0L695.1 220.8L746.3 220.5L738.8 289.9L728.2 298.2Z" fill="url(#h114)"/><path d="M796.6 770.0L665.5 770.0L695.1 663.1L738.7 670.4L795.1 741.8Z" fill="url(#h115)"/><path d="M1095.6 216.6L1155.4 280.2L1159.6 299.1L1155.6 313.0L1148.2 319.9L990.2 319.9L988.0 286.0L1068.9 218.5L1081.8 213.9Z" fill="url(#h116)"/><path d="M1035.8 456.2L1086.7 410.2L1098.2 410.9L1125.8 447.2L1083.3 536.6Z" fill="url(#h117)"/><path d="M489.0 32.9L484.0 99.2L415.1 58.7L402.5 26.8Z" fill="url(#h118)"/><path d="M740.5 463.4L730.7 377.2L813.0 385.3L812.1 390.0Z" fill="url(#h119)"/><path d="M1256.9 770.0L1217.6 770.0L1250.3 711.0L1268.7 713.2L1279.4 743.0Z" fill="url(#h120)"/><path d="M738.8 289.9L746.3 220.5L749.6 211.4L880.1 180.3L883.9 184.6L884.5 188.0L810.8 290.5Z" fill="url(#h121)"/><path d="M1101.2 -50.0L1233.7 -50.0L1225.7 0.5L1142.8 9.9L1130.7 7.6L1128.4 5.9Z" fill="url(#h122)"/><path d="M37.0 442.1L40.7 410.2L68.6 360.8L153.6 359.4L136.3 426.5L61.2 458.4Z" fill="url(#h123)"/><path d="M695.1 95.8L682.9 60.9L759.9 56.3L863.3 85.0L865.4 142.9Z" fill="url(#h124)"/><path d="M891.6 656.2L878.8 674.0L818.3 701.4L780.9 657.2L808.6 631.6L816.5 631.7Z" fill="url(#h125)"/><path d="M498.4 367.9L448.3 362.3L416.9 297.5L446.7 276.7L526.0 309.3L528.9 349.2Z" fill="url(#h126)"/><path d="M173.8 193.9L306.4 143.9L337.2 159.7L346.4 172.7L342.6 211.2L222.2 301.3L214.8 290.8L173.6 196.5Z" fill="url(#h127)"/><path d="M1330.0 240.9L1330.0 289.6L1256.2 295.7L1263.5 219.5Z" fill="url(#h128)"/><path d="M1250.3 711.0L1195.6 607.4L1200.8 603.8L1302.8 693.0L1268.7 713.2Z" fill="url(#h129)"/><path d="M749.6 211.4L691.8 116.8L695.1 95.8L865.4 142.9L866.1 143.9L880.1 180.3Z" fill="url(#h130)"/><path d="M1307.9 369.4L1255.9 382.9L1265.6 344.9L1284.9 341.1Z" fill="url(#h131)"/><path d="M543.8 260.8L542.0 263.3L536.6 266.8L474.9 223.5L472.1 214.1L473.7 191.5L530.5 180.2L543.9 260.6Z" fill="url(#h132)"/><path d="M1330.0 324.5L1330.0 367.2L1307.9 369.4L1284.9 341.1Z" fill="url(#h133)"/><path d="M330.9 317.4L369.7 340.7L368.2 358.8L360.8 361.3L321.8 319.3Z" fill="url(#h134)"/><path d="M135.8 511.6L91.4 503.4L61.2 458.4L136.3 426.5L139.7 431.7L146.1 458.9Z" fill="url(#h135)"/><path d="M555.1 152.1L586.9 181.8L588.1 216.0L575.8 222.4L530.6 180.2Z" fill="url(#h136)"/><path d="M1004.5 637.9L992.9 603.2L992.3 570.9L1080.4 563.1L1098.4 582.7L1029.9 637.6Z" fill="url(#h137)"/><path d="M-50.0 386.7L-50.0 343.7L-31.4 351.2L27.8 401.6Z" fill="url(#h138)"/><path d="M291.9 770.0L288.3 770.0L286.7 735.9L311.7 688.1L347.7 706.5L344.6 717.0Z" fill="url(#h139)"/><path d="M985.1 130.8L1036.4 114.4L1057.5 119.5L1081.8 213.9L1068.9 218.5L967.8 151.3Z" fill="url(#h140)"/><path d="M379.7 11.1L352.1 112.6L337.2 159.7L306.4 143.9L253.4 57.5L345.8 -40.5Z" fill="url(#h141)"/><path d="M1330.0 83.4L1330.0 240.9L1263.5 219.5L1240.1 194.7L1238.4 146.1L1307.1 85.4Z" fill="url(#h142)"/><path d="M728.2 298.2L738.8 289.9L810.8 290.5L848.9 359.7L819.4 379.3Z" fill="url(#h143)"/><path d="M817.4 425.7L881.7 448.4L871.3 487.6L862.9 493.4L802.7 486.3Z" fill="url(#h144)"/><path d="M1015.2 29.1L1010.8 48.7L975.1 81.3L953.5 72.4L941.4 33.6L993.2 -22.2Z" fill="url(#h145)"/><path d="M883.9 184.6L967.8 151.3L1068.9 218.5L988.0 286.0L905.6 216.4L884.5 188.0Z" fill="url(#h146)"/><path d="M681.0 307.0L665.4 304.9L661.9 219.1L664.0 194.8L695.1 220.8Z" fill="url(#h147)"/><path d="M368.2 358.8L416.1 390.6L408.6 408.8L296.2 420.6L279.4 411.3L360.8 361.3Z" fill="url(#h148)"/><path d="M588.1 216.0L606.7 222.7L614.0 236.3L620.7 254.0L543.8 260.8L543.9 260.6L575.8 222.4Z" fill="url(#h149)"/><path d="M983.5 345.3L1003.1 463.8L998.1 469.3L969.4 481.3L910.7 392.5L911.2 384.5Z" fill="url(#h150)"/><path d="M-50.0 209.1L-50.0 196.2L15.9 123.0L36.6 119.6L53.9 131.5L37.0 207.5L12.1 233.8Z" fill="url(#h151)"/><path d="M606.1 770.0L552.0 770.0L502.2 677.4L515.7 644.7L593.5 654.4Z" fill="url(#h152)"/><path d="M1218.8 425.5L1181.8 459.2L1125.8 447.2L1098.2 410.9L1148.2 319.9L1155.6 313.0L1231.5 406.4Z" fill="url(#h153)"/><path d="M-50.0 607.0L-50.0 547.9L10.7 568.3Z" fill="url(#h154)"/><path d="M501.1 465.4L498.4 367.9L528.9 349.2L560.5 358.9L585.4 439.8Z" fill="url(#h155)"/><path d="M969.4 481.3L951.3 513.7L871.3 487.6L881.7 448.4L910.7 392.5Z" fill="url(#h156)"/><path d="M665.5 770.0L606.1 770.0L593.5 654.4L647.0 636.3L694.5 661.7L695.1 663.1Z" fill="url(#h157)"/><path d="M446.7 276.7L474.9 223.5L536.6 266.8L526.0 309.3Z" fill="url(#h158)"/><path d="M1169.7 116.3L1179.9 135.3L1151.2 155.2L1078.3 101.6L1126.4 84.9Z" fill="url(#h159)"/><path d="M351.6 658.5L319.2 647.7L315.8 643.1L318.2 617.6L400.3 589.0L404.0 598.2L395.3 659.7L392.8 661.7Z" fill="url(#h160)"/><path d="M9.5 653.6L3.0 633.4L38.4 574.0L51.8 572.3L81.4 596.3L85.7 670.4Z" fill="url(#h161)"/><path d="M988.0 286.0L990.2 319.9L984.7 344.1L983.5 345.3L911.2 384.5L869.9 363.2L905.6 216.4Z" fill="url(#h162)"/><path d="M294.1 558.2L371.5 515.2L372.2 515.3L385.0 525.1L401.8 554.0L400.3 589.0L318.2 617.6Z" fill="url(#h163)"/><path d="M1238.4 146.1L1179.9 135.3L1169.7 116.3L1176.6 71.0L1247.5 31.0L1307.1 85.4Z" fill="url(#h164)"/><path d="M649.8 432.9L644.4 456.8L630.4 468.1L585.4 439.8L560.5 358.9L622.6 340.0Z" fill="url(#h165)"/><path d="M606.7 222.7L660.6 179.6L664.0 194.8L661.9 219.1L614.0 236.3Z" fill="url(#h166)"/><path d="M136.3 426.5L153.6 359.4L224.0 322.3L225.6 324.3L263.9 407.1L257.3 419.8L228.0 452.4L214.4 451.1L139.7 431.7Z" fill="url(#h167)"/><path d="M995.0 -50.0L1101.2 -50.0L1128.4 5.9L1069.9 48.5L1015.2 29.1L993.2 -22.2Z" fill="url(#h168)"/><path d="M315.8 643.1L234.7 656.0L227.5 610.2L284.3 559.6L294.1 558.2L294.1 558.2L318.2 617.6Z" fill="url(#h169)"/><path d="M1080.0 553.9L1017.9 496.4L998.1 469.3L1003.1 463.8L1035.8 456.2L1083.3 536.6Z" fill="url(#h170)"/><path d="M-50.0 547.9L-50.0 545.3L2.1 501.3L37.7 573.5L10.7 568.3Z" fill="url(#h171)"/><path d="M1330.0 737.7L1330.0 770.0L1256.9 770.0L1279.4 743.0Z" fill="url(#h172)"/><path d="M868.6 -50.0L989.0 -50.0L863.3 40.2Z" fill="url(#h173)"/><path d="M1151.2 155.2L1095.6 216.6L1081.8 213.9L1057.5 119.5L1076.2 101.8L1078.3 101.6Z" fill="url(#h174)"/><path d="M849.4 770.0L796.6 770.0L795.1 741.8L818.3 701.4L878.8 674.0L865.9 742.6Z" fill="url(#h175)"/><path d="M953.5 72.4L866.1 143.9L865.4 142.9L863.3 85.0L865.2 46.6L941.4 33.6Z" fill="url(#h176)"/><path d="M348.0 706.3L351.6 658.5L392.8 661.7L389.6 702.8Z" fill="url(#h177)"/><path d="M146.1 458.9L139.7 431.7L214.4 451.1Z" fill="url(#h178)"/><path d="M644.7 -9.3L554.8 126.1L489.4 114.4L603.6 -19.8L638.0 -38.6L640.3 -31.6Z" fill="url(#h179)"/><path d="M638.2 -50.0L807.0 -50.0L815.2 19.7L640.3 -31.6L638.0 -38.6Z" fill="url(#h180)"/><path d="M49.4 282.7L157.4 201.4L173.6 196.5L214.8 290.8Z" fill="url(#h181)"/><path d="M20.4 -50.0L111.6 -50.0L106.3 37.5L61.4 42.7L12.9 23.3Z" fill="url(#h182)"/><path d="M774.4 497.9L774.8 568.0L769.3 582.1L720.8 600.4L699.6 545.4L758.5 489.5L773.9 495.7Z" fill="url(#h183)"/><path d="M1142.8 9.9L1176.6 71.0L1169.7 116.3L1126.4 84.9L1130.7 7.6Z" fill="url(#h184)"/><path d="M543.9 260.6L530.5 180.2L530.6 180.2L575.8 222.4Z" fill="url(#h185)"/><path d="M730.7 377.2L719.6 364.6L704.9 312.8L728.2 298.2L819.4 379.3L813.0 385.3Z" fill="url(#h186)"/><path d="M1256.2 295.7L1249.7 300.8L1159.6 299.1L1155.4 280.2L1240.1 194.7L1263.5 219.5Z" fill="url(#h187)"/><path d="M91.4 503.4L51.8 572.3L38.4 574.0L37.7 573.5L2.1 501.3L12.3 454.5L37.0 442.1L61.2 458.4Z" fill="url(#h188)"/><path d="M199.4 513.0L168.6 532.1L135.8 511.6L146.1 458.9L214.4 451.1L228.0 452.4Z" fill="url(#h189)"/></svg><div style="left:21.00px;top:21.00px;width:1023.00px;height:366.00px;background:#262a36;"></div><div style="left:22.00px;top:22.00px;width:1021.00px;height:364.00px;background:#f8f7f5;"></div><div style="left:36.40px;top:24.00px;height:15px;line-height:15px;font-size:13.4px;font-weight:normal;color:#141414;font-family:'Liberation Serif', serif;white-space:nowrap;-webkit-text-stroke:0.3px #141414;">Activity Sheet</div><div style="left:159.00px;width:600px;text-align:right;top:26.00px;height:7px;line-height:7px;font-size:6.8px;font-weight:bold;color:#222;font-family:'Liberation Sans', sans-serif;white-space:nowrap;-webkit-text-stroke:0.15px #222;">P6 Project:</div><div style="left:763.50px;top:22.50px;width:116.00px;height:19.50px;background:#fff;border:1px solid #c9c9c9;border-radius:2px;box-sizing:border-box;"></div><div style="left:769.00px;top:29.00px;height:9px;line-height:9px;font-size:8px;font-weight:normal;color:#222;font-family:'Liberation Sans', sans-serif;white-space:nowrap;-webkit-text-stroke:0.1px #222;">BR549</div><svg style="left:866.00px;top:30.00px;width:7px;height:4px" viewBox="0 0 7 4"><path d="M0 0H7L3.5 4Z" fill="#222"/></svg><svg style="left:889.00px;top:24.00px;width:11px;height:11px" viewBox="0 0 11 11"><rect x="0.7" y="0.7" width="8.6" height="8.6" fill="none" stroke="#333" stroke-width="1.2"/><path d="M0.7 3H9.3M2.5 5H7M2.5 7H5" stroke="#333" stroke-width="0.9"/><circle cx="9" cy="9" r="1.6" fill="#333"/></svg><div style="left:914.60px;top:24.00px;height:9px;line-height:9px;font-size:7.7px;font-weight:normal;color:#3b7ea2;font-family:'Liberation Sans', sans-serif;white-space:nowrap;-webkit-text-stroke:0.1px #3b7ea2;">Switch to Baseline Project View</div><svg style="left:1032.00px;top:23.50px;width:9px;height:9px" viewBox="0 0 9 9"><path d="M1 1L8 8M8 1L1 8" stroke="#222" stroke-width="1.3"/></svg><div style="left:27.50px;top:60.00px;width:1015.50px;height:20.30px;background:#f2f1ef;"></div><div style="left:48.30px;top:66.00px;height:7px;line-height:7px;font-size:6.5px;font-weight:bold;color:#2a2a2a;font-family:'Liberation Sans', sans-serif;white-space:nowrap;-webkit-text-stroke:0.15px #2a2a2a;">Actions</div><svg style="left:79.00px;top:67.50px;width:6px;height:4px" viewBox="0 0 6 4"><path d="M0 0H6L3 4Z" fill="#222"/></svg><div style="left:101.30px;top:66.00px;height:7px;line-height:7px;font-size:6.5px;font-weight:bold;color:#2a2a2a;font-family:'Liberation Sans', sans-serif;white-space:nowrap;-webkit-text-stroke:0.15px #2a2a2a;">View:</div><div style="left:126.50px;top:66.00px;height:7px;line-height:7px;font-size:6.5px;font-weight:bold;color:#2a2a2a;font-family:'Liberation Sans', sans-serif;white-space:nowrap;-webkit-text-stroke:0.15px #2a2a2a;">(Modified) P6 WBS</div><svg style="left:192.00px;top:67.50px;width:6px;height:4px" viewBox="0 0 6 4"><path d="M0 0H6L3 4Z" fill="#222"/></svg><svg style="left:212.00px;top:64.50px;width:11px;height:11px" viewBox="0 0 11 11"><path d="M1.5 9.5L2 7L8 1L10 3L4 9Z" fill="none" stroke="#333" stroke-width="1.1" stroke-linejoin="round"/></svg><svg style="left:230.50px;top:64.50px;width:11px;height:11px" viewBox="0 0 11 11"><path d="M9 5.5A3.6 3.6 0 1 1 7.5 2.6" fill="none" stroke="#333" stroke-width="1.3"/><path d="M6.5 1L9.5 2.2L8 4.8Z" fill="#333"/></svg><svg style="left:251.50px;top:64.00px;width:12px;height:12px" viewBox="0 0 12 12"><rect x="3" y="1" width="6" height="3" fill="none" stroke="#333" stroke-width="1.1"/><rect x="1" y="4" width="10" height="5" rx="1" fill="none" stroke="#333" stroke-width="1.2"/><rect x="3.3" y="7" width="5.4" height="4" fill="#f2f1ef" stroke="#333" stroke-width="1.1"/></svg><svg style="left:268.00px;top:67.50px;width:6px;height:4px" viewBox="0 0 6 4"><path d="M0 0H6L3 4Z" fill="#222"/></svg><svg style="left:284.50px;top:64.50px;width:11px;height:11px" viewBox="0 0 11 11"><path d="M0.5 1H9.5M0.5 3.5H9.5M0.5 6H5M0.5 8.5H4" stroke="#333" stroke-width="1"/><circle cx="7.5" cy="7.3" r="1.6" fill="none" stroke="#333" stroke-width="1"/><path d="M8.6 8.4L10 9.8" stroke="#333" stroke-width="1"/></svg><svg style="left:306.00px;top:65.00px;width:11px;height:10px" viewBox="0 0 11 10"><path d="M0 1.2H11M0 5H11M0 8.8H11" stroke="#333" stroke-width="1.2"/></svg><svg style="left:323.00px;top:67.50px;width:6px;height:4px" viewBox="0 0 6 4"><path d="M0 0H6L3 4Z" fill="#222"/></svg><svg style="left:343.50px;top:64.50px;width:11px;height:11px" viewBox="0 0 11 11"><rect x="0.5" y="0.5" width="10" height="10" fill="#444"/><path d="M1 3.5H10M1 6H10M1 8.3H10M4 3.5V10M7 3.5V10" stroke="#f2f1ef" stroke-width="0.7"/></svg><div style="left:359.00px;top:66.00px;height:7px;line-height:7px;font-size:6.5px;font-weight:bold;color:#2a2a2a;font-family:'Liberation Sans', sans-serif;white-space:nowrap;-webkit-text-stroke:0.15px #2a2a2a;">Grid</div><svg style="left:386.00px;top:64.50px;width:11px;height:11px" viewBox="0 0 11 11"><circle cx="5.5" cy="5.5" r="3.3" fill="none" stroke="#222" stroke-width="1.4"/><path d="M5.5 0V2.5M5.5 8.5V11M0 5.5H2.5M8.5 5.5H11" stroke="#222" stroke-width="1.3"/></svg><svg style="left:405.00px;top:64.00px;width:10px;height:11px" viewBox="0 0 10 11"><rect x="0.5" y="0.5" width="5" height="3.6" rx="0.8" fill="#333"/><rect x="4.5" y="4" width="5" height="3" rx="0.8" fill="#333"/><rect x="0.5" y="7" width="5" height="3.6" rx="0.8" fill="#333"/><path d="M2.5 3.5V8M2.5 5.5H5" stroke="#333" stroke-width="1.2"/><rect x="1.6" y="1.5" width="2.8" height="1.6" fill="#f2f1ef"/><rect x="1.6" y="8" width="2.8" height="1.6" fill="#f2f1ef"/></svg><div style="left:39.00px;top:81.00px;width:591.50px;height:305.00px;background:#fff;"></div><div style="left:67.00px;top:81.00px;width:125.00px;height:25.50px;background:#e5e5e5;"></div><div style="left:194.60px;top:96.00px;height:7px;line-height:7px;font-size:6.9px;font-weight:bold;color:#1e1e1e;font-family:'Liberation Sans', sans-serif;white-space:nowrap;-webkit-text-stroke:0.15px #1e1e1e;">Activity ID</div><div style="left:290.70px;top:96.00px;height:7px;line-height:7px;font-size:6.9px;font-weight:bold;color:#1e1e1e;font-family:'Liberation Sans', sans-serif;white-space:nowrap;-webkit-text-stroke:0.15px #1e1e1e;">Activity Name</div><div style="left:-113.00px;width:600px;text-align:right;top:96.00px;height:7px;line-height:7px;font-size:6.9px;font-weight:bold;color:#1e1e1e;font-family:'Liberation Sans', sans-serif;white-space:nowrap;-webkit-text-stroke:0.15px #1e1e1e;">Start</div><div style="left:-49.00px;width:600px;text-align:right;top:96.00px;height:7px;line-height:7px;font-size:6.9px;font-weight:bold;color:#1e1e1e;font-family:'Liberation Sans', sans-serif;white-space:nowrap;-webkit-text-stroke:0.15px #1e1e1e;">Finish</div><div style="left:14.00px;width:600px;text-align:right;top:90.00px;height:7px;line-height:7px;font-size:6.9px;font-weight:bold;color:#1e1e1e;font-family:'Liberation Sans', sans-serif;white-space:nowrap;-webkit-text-stroke:0.15px #1e1e1e;">Activity %</div><div style="left:14.00px;width:600px;text-align:right;top:97.00px;height:7px;line-height:7px;font-size:6.9px;font-weight:bold;color:#1e1e1e;font-family:'Liberation Sans', sans-serif;white-space:nowrap;-webkit-text-stroke:0.15px #1e1e1e;">Complete</div><div style="left:39.00px;top:108.40px;width:27.00px;height:13.75px;background:#f4f4f4;border-top:1px solid #e6e6e6;box-sizing:border-box;"></div><div style="left:67.00px;top:108.40px;width:563.50px;height:13.75px;background:#eff4ef;border-top:1px solid #e3e6e3;box-sizing:border-box;"></div><div style="left:-539.70px;width:600px;text-align:right;top:112.00px;height:9px;line-height:9px;font-size:7.4px;font-weight:bold;color:#4d5566;font-family:'Liberation Sans', sans-serif;white-space:nowrap;transform:scaleX(0.94);transform-origin:100% 50%;-webkit-text-stroke:0.15px #4d5566;">258</div><svg style="left:66.50px;top:112.43px;width:8px;height:8px" viewBox="0 0 8 8"><circle cx="4" cy="4" r="3.5" fill="none" stroke="#777" stroke-width="1"/><path d="M2.2 4H5.8" stroke="#777" stroke-width="1"/></svg><div style="left:77.00px;top:112.00px;height:9px;line-height:9px;font-size:7.4px;font-weight:bold;color:#222;font-family:'Liberation Sans', sans-serif;white-space:nowrap;transform:scaleX(0.87);transform-origin:0 50%;-webkit-text-stroke:0.15px #222;">GROUNDING</div><div style="left:-105.60px;width:600px;text-align:right;top:112.00px;height:9px;line-height:9px;font-size:7.2px;font-weight:bold;color:#555;font-family:'Liberation Sans', sans-serif;white-space:nowrap;-webkit-text-stroke:0.15px #555;">02/08/2021</div><div style="left:-41.50px;width:600px;text-align:right;top:112.00px;height:9px;line-height:9px;font-size:7.2px;font-weight:bold;color:#555;font-family:'Liberation Sans', sans-serif;white-space:nowrap;-webkit-text-stroke:0.15px #555;">08/11/2023</div><div style="left:22.00px;width:600px;text-align:right;top:112.00px;height:9px;line-height:9px;font-size:7.2px;font-weight:bold;color:#555;font-family:'Liberation Sans', sans-serif;white-space:nowrap;-webkit-text-stroke:0.15px #555;">66.67%</div><div style="left:39.00px;top:122.15px;width:27.00px;height:13.75px;background:#f4f4f4;border-top:1px solid #e6e6e6;box-sizing:border-box;"></div><div style="left:67.00px;top:122.15px;width:563.50px;height:13.75px;background:#f2f2f2;border-top:1px solid #e3e6e3;box-sizing:border-box;"></div><div style="left:-539.70px;width:600px;text-align:right;top:126.00px;height:9px;line-height:9px;font-size:7.4px;font-weight:normal;color:#4d5566;font-family:'Liberation Sans', sans-serif;white-space:nowrap;transform:scaleX(0.94);transform-origin:100% 50%;-webkit-text-stroke:0.15px #4d5566;">259</div><div style="left:195.80px;top:127.58px;width:9.20px;height:5.20px;background:#1b6b93;"></div><div style="left:207.90px;top:127.00px;height:7px;line-height:7px;font-size:7px;font-weight:normal;color:#666;font-family:'Liberation Sans', sans-serif;white-space:nowrap;-webkit-text-stroke:0.15px #666;">J012N-2CN-2010</div><div style="left:290.50px;top:127.00px;height:7px;line-height:7px;font-size:6.8px;font-weight:normal;color:#666;font-family:'Liberation Sans', sans-serif;white-space:nowrap;-webkit-text-stroke:0.15px #666;">Install Grounding</div><div style="left:-105.60px;width:600px;text-align:right;top:126.00px;height:9px;line-height:9px;font-size:7.2px;font-weight:normal;color:#777;font-family:'Liberation Sans', sans-serif;white-space:nowrap;-webkit-text-stroke:0.15px #777;">06/12/2023</div><div style="left:-41.50px;width:600px;text-align:right;top:126.00px;height:9px;line-height:9px;font-size:7.2px;font-weight:normal;color:#777;font-family:'Liberation Sans', sans-serif;white-space:nowrap;-webkit-text-stroke:0.15px #777;">08/11/2023</div><div style="left:22.00px;width:600px;text-align:right;top:126.00px;height:9px;line-height:9px;font-size:7.2px;font-weight:normal;color:#777;font-family:'Liberation Sans', sans-serif;white-space:nowrap;-webkit-text-stroke:0.15px #777;">0.00%</div><div style="left:39.00px;top:135.90px;width:27.00px;height:13.75px;background:#f4f4f4;border-top:1px solid #e6e6e6;box-sizing:border-box;"></div><div style="left:67.00px;top:135.90px;width:563.50px;height:13.75px;background:#f2f2f2;border-top:1px solid #e3e6e3;box-sizing:border-box;"></div><div style="left:-539.70px;width:600px;text-align:right;top:140.00px;height:9px;line-height:9px;font-size:7.4px;font-weight:normal;color:#4d5566;font-family:'Liberation Sans', sans-serif;white-space:nowrap;transform:scaleX(0.94);transform-origin:100% 50%;-webkit-text-stroke:0.15px #4d5566;">260</div><div style="left:195.80px;top:141.33px;width:9.20px;height:5.20px;background:#41702a;"></div><div style="left:207.90px;top:140.00px;height:7px;line-height:7px;font-size:7px;font-weight:normal;color:#666;font-family:'Liberation Sans', sans-serif;white-space:nowrap;-webkit-text-stroke:0.15px #666;">J012N-2EN-1560</div><div style="left:290.50px;top:140.00px;height:7px;line-height:7px;font-size:6.8px;font-weight:normal;color:#666;font-family:'Liberation Sans', sans-serif;white-space:nowrap;-webkit-text-stroke:0.15px #666;">Utility Company X Prepare and Issue Groundi...</div><div style="left:-105.60px;width:600px;text-align:right;top:140.00px;height:9px;line-height:9px;font-size:7.2px;font-weight:normal;color:#777;font-family:'Liberation Sans', sans-serif;white-space:nowrap;-webkit-text-stroke:0.15px #777;">02/08/2021</div><div style="left:-41.50px;width:600px;text-align:right;top:140.00px;height:9px;line-height:9px;font-size:7.2px;font-weight:normal;color:#777;font-family:'Liberation Sans', sans-serif;white-space:nowrap;-webkit-text-stroke:0.15px #777;">05/07/2021</div><div style="left:22.00px;width:600px;text-align:right;top:140.00px;height:9px;line-height:9px;font-size:7.2px;font-weight:normal;color:#777;font-family:'Liberation Sans', sans-serif;white-space:nowrap;-webkit-text-stroke:0.15px #777;">100.00%</div><div style="left:39.00px;top:149.65px;width:27.00px;height:13.75px;background:#f4f4f4;border-top:1px solid #e6e6e6;box-sizing:border-box;"></div><div style="left:67.00px;top:149.65px;width:563.50px;height:13.75px;background:#f2f2f2;border-top:1px solid #e3e6e3;box-sizing:border-box;"></div><div style="left:-539.70px;width:600px;text-align:right;top:153.00px;height:9px;line-height:9px;font-size:7.4px;font-weight:normal;color:#4d5566;font-family:'Liberation Sans', sans-serif;white-space:nowrap;transform:scaleX(0.94);transform-origin:100% 50%;-webkit-text-stroke:0.15px #4d5566;">261</div><div style="left:195.80px;top:155.08px;width:9.20px;height:5.20px;background:#41702a;"></div><div style="left:207.90px;top:154.00px;height:7px;line-height:7px;font-size:7px;font-weight:normal;color:#666;font-family:'Liberation Sans', sans-serif;white-space:nowrap;-webkit-text-stroke:0.15px #666;">J012N-2EN-5560</div><div style="left:290.50px;top:154.00px;height:7px;line-height:7px;font-size:6.8px;font-weight:normal;color:#666;font-family:'Liberation Sans', sans-serif;white-space:nowrap;-webkit-text-stroke:0.15px #666;">EPC Prepare and Issue Grounding Drawings</div><div style="left:-105.60px;width:600px;text-align:right;top:153.00px;height:9px;line-height:9px;font-size:7.2px;font-weight:normal;color:#777;font-family:'Liberation Sans', sans-serif;white-space:nowrap;-webkit-text-stroke:0.15px #777;">05/10/2021</div><div style="left:-41.50px;width:600px;text-align:right;top:153.00px;height:9px;line-height:9px;font-size:7.2px;font-weight:normal;color:#777;font-family:'Liberation Sans', sans-serif;white-space:nowrap;-webkit-text-stroke:0.15px #777;">07/13/2021</div><div style="left:22.00px;width:600px;text-align:right;top:153.00px;height:9px;line-height:9px;font-size:7.2px;font-weight:normal;color:#777;font-family:'Liberation Sans', sans-serif;white-space:nowrap;-webkit-text-stroke:0.15px #777;">100.00%</div><div style="left:39.00px;top:163.40px;width:27.00px;height:13.75px;background:#f4f4f4;border-top:1px solid #e6e6e6;box-sizing:border-box;"></div><div style="left:67.00px;top:163.40px;width:563.50px;height:13.75px;background:#eff4ef;border-top:1px solid #e3e6e3;box-sizing:border-box;"></div><div style="left:-539.70px;width:600px;text-align:right;top:167.00px;height:9px;line-height:9px;font-size:7.4px;font-weight:bold;color:#4d5566;font-family:'Liberation Sans', sans-serif;white-space:nowrap;transform:scaleX(0.94);transform-origin:100% 50%;-webkit-text-stroke:0.15px #4d5566;">262</div><svg style="left:66.50px;top:167.43px;width:8px;height:8px" viewBox="0 0 8 8"><circle cx="4" cy="4" r="3.5" fill="none" stroke="#777" stroke-width="1"/><path d="M2.2 4H5.8" stroke="#777" stroke-width="1"/></svg><div style="left:77.00px;top:167.00px;height:9px;line-height:9px;font-size:7.4px;font-weight:bold;color:#222;font-family:'Liberation Sans', sans-serif;white-space:nowrap;transform:scaleX(0.87);transform-origin:0 50%;-webkit-text-stroke:0.15px #222;">GRADING</div><div style="left:-105.60px;width:600px;text-align:right;top:167.00px;height:9px;line-height:9px;font-size:7.2px;font-weight:bold;color:#555;font-family:'Liberation Sans', sans-serif;white-space:nowrap;-webkit-text-stroke:0.15px #555;">03/30/2022</div><div style="left:-41.50px;width:600px;text-align:right;top:167.00px;height:9px;line-height:9px;font-size:7.2px;font-weight:bold;color:#555;font-family:'Liberation Sans', sans-serif;white-space:nowrap;-webkit-text-stroke:0.15px #555;">07/03/2023</div><div style="left:22.00px;width:600px;text-align:right;top:167.00px;height:9px;line-height:9px;font-size:7.2px;font-weight:bold;color:#555;font-family:'Liberation Sans', sans-serif;white-space:nowrap;-webkit-text-stroke:0.15px #555;">97.00%</div><div style="left:39.00px;top:177.15px;width:27.00px;height:13.75px;background:#f4f4f4;border-top:1px solid #e6e6e6;box-sizing:border-box;"></div><div style="left:67.00px;top:177.15px;width:563.50px;height:13.75px;background:#f2f2f2;border-top:1px solid #e3e6e3;box-sizing:border-box;"></div><div style="left:-539.70px;width:600px;text-align:right;top:181.00px;height:9px;line-height:9px;font-size:7.4px;font-weight:normal;color:#4d5566;font-family:'Liberation Sans', sans-serif;white-space:nowrap;transform:scaleX(0.94);transform-origin:100% 50%;-webkit-text-stroke:0.15px #4d5566;">263</div><div style="left:195.80px;top:182.58px;width:9.20px;height:5.20px;background:#41702a;"></div><div style="left:207.90px;top:182.00px;height:7px;line-height:7px;font-size:7px;font-weight:normal;color:#666;font-family:'Liberation Sans', sans-serif;white-space:nowrap;-webkit-text-stroke:0.15px #666;">J012N-2CN-3020</div><div style="left:290.50px;top:182.00px;height:7px;line-height:7px;font-size:6.8px;font-weight:normal;color:#666;font-family:'Liberation Sans', sans-serif;white-space:nowrap;-webkit-text-stroke:0.15px #666;">Site Grading</div><div style="left:-105.60px;width:600px;text-align:right;top:181.00px;height:9px;line-height:9px;font-size:7.2px;font-weight:normal;color:#777;font-family:'Liberation Sans', sans-serif;white-space:nowrap;-webkit-text-stroke:0.15px #777;">03/01/2023</div><div style="left:-41.50px;width:600px;text-align:right;top:181.00px;height:9px;line-height:9px;font-size:7.2px;font-weight:normal;color:#777;font-family:'Liberation Sans', sans-serif;white-space:nowrap;-webkit-text-stroke:0.15px #777;">04/28/2023</div><div style="left:22.00px;width:600px;text-align:right;top:181.00px;height:9px;line-height:9px;font-size:7.2px;font-weight:normal;color:#777;font-family:'Liberation Sans', sans-serif;white-space:nowrap;-webkit-text-stroke:0.15px #777;">100.00%</div><div style="left:39.00px;top:190.90px;width:27.00px;height:13.75px;background:#f4f4f4;border-top:1px solid #e6e6e6;box-sizing:border-box;"></div><div style="left:67.00px;top:190.90px;width:563.50px;height:13.75px;background:#f2f2f2;border-top:1px solid #e3e6e3;box-sizing:border-box;"></div><div style="left:-539.70px;width:600px;text-align:right;top:195.00px;height:9px;line-height:9px;font-size:7.4px;font-weight:normal;color:#4d5566;font-family:'Liberation Sans', sans-serif;white-space:nowrap;transform:scaleX(0.94);transform-origin:100% 50%;-webkit-text-stroke:0.15px #4d5566;">264</div><div style="left:195.80px;top:196.33px;width:9.20px;height:5.20px;background:#9c5b1c;"></div><div style="left:207.90px;top:195.00px;height:7px;line-height:7px;font-size:7px;font-weight:normal;color:#666;font-family:'Liberation Sans', sans-serif;white-space:nowrap;-webkit-text-stroke:0.15px #666;">J012N-2CN-3080</div><div style="left:290.50px;top:195.00px;height:7px;line-height:7px;font-size:6.8px;font-weight:normal;color:#666;font-family:'Liberation Sans', sans-serif;white-space:nowrap;-webkit-text-stroke:0.15px #666;">Tree Clearing and Early Site Grading [McGrat...</div><div style="left:-105.60px;width:600px;text-align:right;top:195.00px;height:9px;line-height:9px;font-size:7.2px;font-weight:normal;color:#777;font-family:'Liberation Sans', sans-serif;white-space:nowrap;-webkit-text-stroke:0.15px #777;">03/30/2022</div><div style="left:-41.50px;width:600px;text-align:right;top:195.00px;height:9px;line-height:9px;font-size:7.2px;font-weight:normal;color:#777;font-family:'Liberation Sans', sans-serif;white-space:nowrap;-webkit-text-stroke:0.15px #777;">07/03/2023</div><div style="left:22.00px;width:600px;text-align:right;top:195.00px;height:9px;line-height:9px;font-size:7.2px;font-weight:normal;color:#777;font-family:'Liberation Sans', sans-serif;white-space:nowrap;-webkit-text-stroke:0.15px #777;">94.00%</div><div style="left:39.00px;top:204.65px;width:27.00px;height:13.75px;background:#f4f4f4;border-top:1px solid #e6e6e6;box-sizing:border-box;"></div><div style="left:67.00px;top:204.65px;width:563.50px;height:13.75px;background:#eff4ef;border-top:1px solid #e3e6e3;box-sizing:border-box;"></div><div style="left:-539.70px;width:600px;text-align:right;top:208.00px;height:9px;line-height:9px;font-size:7.4px;font-weight:bold;color:#4d5566;font-family:'Liberation Sans', sans-serif;white-space:nowrap;transform:scaleX(0.94);transform-origin:100% 50%;-webkit-text-stroke:0.15px #4d5566;">265</div><svg style="left:66.50px;top:208.68px;width:8px;height:8px" viewBox="0 0 8 8"><circle cx="4" cy="4" r="3.5" fill="none" stroke="#777" stroke-width="1"/><path d="M2.2 4H5.8" stroke="#777" stroke-width="1"/></svg><div style="left:77.00px;top:208.00px;height:9px;line-height:9px;font-size:7.4px;font-weight:bold;color:#222;font-family:'Liberation Sans', sans-serif;white-space:nowrap;transform:scaleX(0.87);transform-origin:0 50%;-webkit-text-stroke:0.15px #222;">FOUNDATION SLAB ON GRADE</div><div style="left:-105.60px;width:600px;text-align:right;top:208.00px;height:9px;line-height:9px;font-size:7.2px;font-weight:bold;color:#555;font-family:'Liberation Sans', sans-serif;white-space:nowrap;-webkit-text-stroke:0.15px #555;">05/22/2023</div><div style="left:-41.50px;width:600px;text-align:right;top:208.00px;height:9px;line-height:9px;font-size:7.2px;font-weight:bold;color:#555;font-family:'Liberation Sans', sans-serif;white-space:nowrap;-webkit-text-stroke:0.15px #555;">07/21/2023</div><div style="left:22.00px;width:600px;text-align:right;top:208.00px;height:9px;line-height:9px;font-size:7.2px;font-weight:bold;color:#555;font-family:'Liberation Sans', sans-serif;white-space:nowrap;-webkit-text-stroke:0.15px #555;">0.00%</div><div style="left:39.00px;top:218.40px;width:27.00px;height:13.75px;background:#f4f4f4;border-top:1px solid #e6e6e6;box-sizing:border-box;"></div><div style="left:67.00px;top:218.40px;width:563.50px;height:13.75px;background:#f2f2f2;border-top:1px solid #e3e6e3;box-sizing:border-box;"></div><div style="left:-539.70px;width:600px;text-align:right;top:222.00px;height:9px;line-height:9px;font-size:7.4px;font-weight:normal;color:#4d5566;font-family:'Liberation Sans', sans-serif;white-space:nowrap;transform:scaleX(0.94);transform-origin:100% 50%;-webkit-text-stroke:0.15px #4d5566;">266</div><div style="left:195.80px;top:223.83px;width:9.20px;height:5.20px;background:#1b6b93;"></div><div style="left:207.90px;top:223.00px;height:7px;line-height:7px;font-size:7px;font-weight:normal;color:#666;font-family:'Liberation Sans', sans-serif;white-space:nowrap;-webkit-text-stroke:0.15px #666;">J012N-2CN-3040</div><div style="left:290.50px;top:223.00px;height:7px;line-height:7px;font-size:6.8px;font-weight:normal;color:#666;font-family:'Liberation Sans', sans-serif;white-space:nowrap;-webkit-text-stroke:0.15px #666;">E/F/R/P Foundations - Slab on Grade</div><div style="left:-105.60px;width:600px;text-align:right;top:222.00px;height:9px;line-height:9px;font-size:7.2px;font-weight:normal;color:#777;font-family:'Liberation Sans', sans-serif;white-space:nowrap;-webkit-text-stroke:0.15px #777;">05/22/2023</div><div style="left:-41.50px;width:600px;text-align:right;top:222.00px;height:9px;line-height:9px;font-size:7.2px;font-weight:normal;color:#777;font-family:'Liberation Sans', sans-serif;white-space:nowrap;-webkit-text-stroke:0.15px #777;">07/21/2023</div><div style="left:22.00px;width:600px;text-align:right;top:222.00px;height:9px;line-height:9px;font-size:7.2px;font-weight:normal;color:#777;font-family:'Liberation Sans', sans-serif;white-space:nowrap;-webkit-text-stroke:0.15px #777;">0.00%</div><div style="left:39.00px;top:232.15px;width:27.00px;height:13.75px;background:#f4f4f4;border-top:1px solid #e6e6e6;box-sizing:border-box;"></div><div style="left:67.00px;top:232.15px;width:563.50px;height:13.75px;background:#eff4ef;border-top:1px solid #e3e6e3;box-sizing:border-box;"></div><div style="left:-539.70px;width:600px;text-align:right;top:236.00px;height:9px;line-height:9px;font-size:7.4px;font-weight:bold;color:#4d5566;font-family:'Liberation Sans', sans-serif;white-space:nowrap;transform:scaleX(0.94);transform-origin:100% 50%;-webkit-text-stroke:0.15px #4d5566;">267</div><svg style="left:66.50px;top:236.18px;width:8px;height:8px" viewBox="0 0 8 8"><circle cx="4" cy="4" r="3.5" fill="none" stroke="#777" stroke-width="1"/><path d="M2.2 4H5.8" stroke="#777" stroke-width="1"/></svg><div style="left:77.00px;top:236.00px;height:9px;line-height:9px;font-size:7.4px;font-weight:bold;color:#222;font-family:'Liberation Sans', sans-serif;white-space:nowrap;transform:scaleX(0.87);transform-origin:0 50%;-webkit-text-stroke:0.15px #222;">FOUNDATION PIERS</div><div style="left:-105.60px;width:600px;text-align:right;top:236.00px;height:9px;line-height:9px;font-size:7.2px;font-weight:bold;color:#555;font-family:'Liberation Sans', sans-serif;white-space:nowrap;-webkit-text-stroke:0.15px #555;">05/01/2023</div><div style="left:-41.50px;width:600px;text-align:right;top:236.00px;height:9px;line-height:9px;font-size:7.2px;font-weight:bold;color:#555;font-family:'Liberation Sans', sans-serif;white-space:nowrap;-webkit-text-stroke:0.15px #555;">06/30/2023</div><div style="left:22.00px;width:600px;text-align:right;top:236.00px;height:9px;line-height:9px;font-size:7.2px;font-weight:bold;color:#555;font-family:'Liberation Sans', sans-serif;white-space:nowrap;-webkit-text-stroke:0.15px #555;">0.00%</div><div style="left:39.00px;top:245.90px;width:27.00px;height:13.75px;background:#f4f4f4;border-top:1px solid #e6e6e6;box-sizing:border-box;"></div><div style="left:67.00px;top:245.90px;width:563.50px;height:13.75px;background:#f2f2f2;border-top:1px solid #e3e6e3;box-sizing:border-box;"></div><div style="left:-539.70px;width:600px;text-align:right;top:250.00px;height:9px;line-height:9px;font-size:7.4px;font-weight:normal;color:#4d5566;font-family:'Liberation Sans', sans-serif;white-space:nowrap;transform:scaleX(0.94);transform-origin:100% 50%;-webkit-text-stroke:0.15px #4d5566;">268</div><div style="left:195.80px;top:251.33px;width:9.20px;height:5.20px;background:#1b6b93;"></div><div style="left:207.90px;top:250.00px;height:7px;line-height:7px;font-size:7px;font-weight:normal;color:#666;font-family:'Liberation Sans', sans-serif;white-space:nowrap;-webkit-text-stroke:0.15px #666;">J012N-2CN-3050</div><div style="left:290.50px;top:250.00px;height:7px;line-height:7px;font-size:6.8px;font-weight:normal;color:#666;font-family:'Liberation Sans', sans-serif;white-space:nowrap;-webkit-text-stroke:0.15px #666;">E/F/R/P Foundations - Piers</div><div style="left:-105.60px;width:600px;text-align:right;top:250.00px;height:9px;line-height:9px;font-size:7.2px;font-weight:normal;color:#777;font-family:'Liberation Sans', sans-serif;white-space:nowrap;-webkit-text-stroke:0.15px #777;">05/01/2023</div><div style="left:-41.50px;width:600px;text-align:right;top:250.00px;height:9px;line-height:9px;font-size:7.2px;font-weight:normal;color:#777;font-family:'Liberation Sans', sans-serif;white-space:nowrap;-webkit-text-stroke:0.15px #777;">06/30/2023</div><div style="left:22.00px;width:600px;text-align:right;top:250.00px;height:9px;line-height:9px;font-size:7.2px;font-weight:normal;color:#777;font-family:'Liberation Sans', sans-serif;white-space:nowrap;-webkit-text-stroke:0.15px #777;">0.00%</div><div style="left:39.00px;top:259.65px;width:27.00px;height:13.75px;background:#f4f4f4;border-top:1px solid #e6e6e6;box-sizing:border-box;"></div><div style="left:67.00px;top:259.65px;width:563.50px;height:13.75px;background:#eff4ef;border-top:1px solid #e3e6e3;box-sizing:border-box;"></div><div style="left:-539.70px;width:600px;text-align:right;top:263.00px;height:9px;line-height:9px;font-size:7.4px;font-weight:bold;color:#4d5566;font-family:'Liberation Sans', sans-serif;white-space:nowrap;transform:scaleX(0.94);transform-origin:100% 50%;-webkit-text-stroke:0.15px #4d5566;">269</div><svg style="left:66.50px;top:263.67px;width:8px;height:8px" viewBox="0 0 8 8"><circle cx="4" cy="4" r="3.5" fill="none" stroke="#777" stroke-width="1"/><path d="M2.2 4H5.8" stroke="#777" stroke-width="1"/></svg><div style="left:77.00px;top:263.00px;height:9px;line-height:9px;font-size:7.4px;font-weight:bold;color:#222;font-family:'Liberation Sans', sans-serif;white-space:nowrap;transform:scaleX(0.87);transform-origin:0 50%;-webkit-text-stroke:0.15px #222;">FENCE INSTALLATION</div><div style="left:-105.60px;width:600px;text-align:right;top:263.00px;height:9px;line-height:9px;font-size:7.2px;font-weight:bold;color:#555;font-family:'Liberation Sans', sans-serif;white-space:nowrap;-webkit-text-stroke:0.15px #555;">05/01/2023</div><div style="left:-41.50px;width:600px;text-align:right;top:263.00px;height:9px;line-height:9px;font-size:7.2px;font-weight:bold;color:#555;font-family:'Liberation Sans', sans-serif;white-space:nowrap;-webkit-text-stroke:0.15px #555;">05/19/2023</div><div style="left:22.00px;width:600px;text-align:right;top:263.00px;height:9px;line-height:9px;font-size:7.2px;font-weight:bold;color:#555;font-family:'Liberation Sans', sans-serif;white-space:nowrap;-webkit-text-stroke:0.15px #555;">0.00%</div><div style="left:39.00px;top:273.40px;width:27.00px;height:13.75px;background:#f4f4f4;border-top:1px solid #e6e6e6;box-sizing:border-box;"></div><div style="left:67.00px;top:273.40px;width:563.50px;height:13.75px;background:#f2f2f2;border-top:1px solid #e3e6e3;box-sizing:border-box;"></div><div style="left:-539.70px;width:600px;text-align:right;top:277.00px;height:9px;line-height:9px;font-size:7.4px;font-weight:normal;color:#4d5566;font-family:'Liberation Sans', sans-serif;white-space:nowrap;transform:scaleX(0.94);transform-origin:100% 50%;-webkit-text-stroke:0.15px #4d5566;">270</div><div style="left:195.80px;top:278.82px;width:9.20px;height:5.20px;background:#1b6b93;"></div><div style="left:207.90px;top:278.00px;height:7px;line-height:7px;font-size:7px;font-weight:normal;color:#666;font-family:'Liberation Sans', sans-serif;white-space:nowrap;-webkit-text-stroke:0.15px #666;">J012N-2CN-3030</div><div style="left:290.50px;top:278.00px;height:7px;line-height:7px;font-size:6.8px;font-weight:normal;color:#666;font-family:'Liberation Sans', sans-serif;white-space:nowrap;-webkit-text-stroke:0.15px #666;">Install Site Fence</div><div style="left:-105.60px;width:600px;text-align:right;top:277.00px;height:9px;line-height:9px;font-size:7.2px;font-weight:normal;color:#777;font-family:'Liberation Sans', sans-serif;white-space:nowrap;-webkit-text-stroke:0.15px #777;">05/01/2023</div><div style="left:-41.50px;width:600px;text-align:right;top:277.00px;height:9px;line-height:9px;font-size:7.2px;font-weight:normal;color:#777;font-family:'Liberation Sans', sans-serif;white-space:nowrap;-webkit-text-stroke:0.15px #777;">05/19/2023</div><div style="left:22.00px;width:600px;text-align:right;top:277.00px;height:9px;line-height:9px;font-size:7.2px;font-weight:normal;color:#777;font-family:'Liberation Sans', sans-serif;white-space:nowrap;-webkit-text-stroke:0.15px #777;">0.00%</div><div style="left:39.00px;top:287.15px;width:27.00px;height:13.75px;background:#f4f4f4;border-top:1px solid #e6e6e6;box-sizing:border-box;"></div><div style="left:67.00px;top:287.15px;width:563.50px;height:13.75px;background:#eff4ef;border-top:1px solid #e3e6e3;box-sizing:border-box;"></div><div style="left:-539.70px;width:600px;text-align:right;top:291.00px;height:9px;line-height:9px;font-size:7.4px;font-weight:bold;color:#4d5566;font-family:'Liberation Sans', sans-serif;white-space:nowrap;transform:scaleX(0.94);transform-origin:100% 50%;-webkit-text-stroke:0.15px #4d5566;">271</div><svg style="left:66.50px;top:291.17px;width:8px;height:8px" viewBox="0 0 8 8"><circle cx="4" cy="4" r="3.5" fill="none" stroke="#777" stroke-width="1"/><path d="M2.2 4H5.8" stroke="#777" stroke-width="1"/></svg><div style="left:77.00px;top:291.00px;height:9px;line-height:9px;font-size:7.4px;font-weight:bold;color:#222;font-family:'Liberation Sans', sans-serif;white-space:nowrap;transform:scaleX(0.87);transform-origin:0 50%;-webkit-text-stroke:0.15px #222;">EQUIPMENT TESTING</div><div style="left:-105.60px;width:600px;text-align:right;top:291.00px;height:9px;line-height:9px;font-size:7.2px;font-weight:bold;color:#555;font-family:'Liberation Sans', sans-serif;white-space:nowrap;-webkit-text-stroke:0.15px #555;">10/23/2023</div><div style="left:-41.50px;width:600px;text-align:right;top:291.00px;height:9px;line-height:9px;font-size:7.2px;font-weight:bold;color:#555;font-family:'Liberation Sans', sans-serif;white-space:nowrap;-webkit-text-stroke:0.15px #555;">01/05/2024</div><div style="left:22.00px;width:600px;text-align:right;top:291.00px;height:9px;line-height:9px;font-size:7.2px;font-weight:bold;color:#555;font-family:'Liberation Sans', sans-serif;white-space:nowrap;-webkit-text-stroke:0.15px #555;">0.00%</div><div style="left:39.00px;top:300.90px;width:27.00px;height:13.75px;background:#f4f4f4;border-top:1px solid #e6e6e6;box-sizing:border-box;"></div><div style="left:67.00px;top:300.90px;width:563.50px;height:13.75px;background:#f2f2f2;border-top:1px solid #e3e6e3;box-sizing:border-box;"></div><div style="left:-539.70px;width:600px;text-align:right;top:305.00px;height:9px;line-height:9px;font-size:7.4px;font-weight:normal;color:#4d5566;font-family:'Liberation Sans', sans-serif;white-space:nowrap;transform:scaleX(0.94);transform-origin:100% 50%;-webkit-text-stroke:0.15px #4d5566;">272</div><div style="left:195.80px;top:306.32px;width:9.20px;height:5.20px;background:#1b6b93;"></div><div style="left:207.90px;top:305.00px;height:7px;line-height:7px;font-size:7px;font-weight:normal;color:#666;font-family:'Liberation Sans', sans-serif;white-space:nowrap;-webkit-text-stroke:0.15px #666;">J012N-2CM-1100</div><div style="left:290.50px;top:305.00px;height:7px;line-height:7px;font-size:6.8px;font-weight:normal;color:#666;font-family:'Liberation Sans', sans-serif;white-space:nowrap;-webkit-text-stroke:0.15px #666;">Perform Disconnect Switch - Final Adjustment</div><div style="left:-105.60px;width:600px;text-align:right;top:305.00px;height:9px;line-height:9px;font-size:7.2px;font-weight:normal;color:#777;font-family:'Liberation Sans', sans-serif;white-space:nowrap;-webkit-text-stroke:0.15px #777;">10/23/2023</div><div style="left:-41.50px;width:600px;text-align:right;top:305.00px;height:9px;line-height:9px;font-size:7.2px;font-weight:normal;color:#777;font-family:'Liberation Sans', sans-serif;white-space:nowrap;-webkit-text-stroke:0.15px #777;">10/24/2023</div><div style="left:22.00px;width:600px;text-align:right;top:305.00px;height:9px;line-height:9px;font-size:7.2px;font-weight:normal;color:#777;font-family:'Liberation Sans', sans-serif;white-space:nowrap;-webkit-text-stroke:0.15px #777;">0.00%</div><div style="left:39.00px;top:314.65px;width:27.00px;height:13.75px;background:#f4f4f4;border-top:1px solid #e6e6e6;box-sizing:border-box;"></div><div style="left:67.00px;top:314.65px;width:563.50px;height:13.75px;background:#f2f2f2;border-top:1px solid #e3e6e3;box-sizing:border-box;"></div><div style="left:-539.70px;width:600px;text-align:right;top:318.00px;height:9px;line-height:9px;font-size:7.4px;font-weight:normal;color:#4d5566;font-family:'Liberation Sans', sans-serif;white-space:nowrap;transform:scaleX(0.94);transform-origin:100% 50%;-webkit-text-stroke:0.15px #4d5566;">273</div><div style="left:195.80px;top:320.07px;width:9.20px;height:5.20px;background:#1b6b93;"></div><div style="left:207.90px;top:319.00px;height:7px;line-height:7px;font-size:7px;font-weight:normal;color:#666;font-family:'Liberation Sans', sans-serif;white-space:nowrap;-webkit-text-stroke:0.15px #666;">J012N-2CM-1110</div><div style="left:290.50px;top:319.00px;height:7px;line-height:7px;font-size:6.8px;font-weight:normal;color:#666;font-family:'Liberation Sans', sans-serif;white-space:nowrap;-webkit-text-stroke:0.15px #666;">Perform Equipment Testing</div><div style="left:-105.60px;width:600px;text-align:right;top:318.00px;height:9px;line-height:9px;font-size:7.2px;font-weight:normal;color:#777;font-family:'Liberation Sans', sans-serif;white-space:nowrap;-webkit-text-stroke:0.15px #777;">11/20/2023</div><div style="left:-41.50px;width:600px;text-align:right;top:318.00px;height:9px;line-height:9px;font-size:7.2px;font-weight:normal;color:#777;font-family:'Liberation Sans', sans-serif;white-space:nowrap;-webkit-text-stroke:0.15px #777;">01/05/2024</div><div style="left:22.00px;width:600px;text-align:right;top:318.00px;height:9px;line-height:9px;font-size:7.2px;font-weight:normal;color:#777;font-family:'Liberation Sans', sans-serif;white-space:nowrap;-webkit-text-stroke:0.15px #777;">0.00%</div><div style="left:39.00px;top:328.40px;width:27.00px;height:13.75px;background:#f4f4f4;border-top:1px solid #e6e6e6;box-sizing:border-box;"></div><div style="left:67.00px;top:328.40px;width:563.50px;height:13.75px;background:#eff4ef;border-top:1px solid #e3e6e3;box-sizing:border-box;"></div><div style="left:-539.70px;width:600px;text-align:right;top:332.00px;height:9px;line-height:9px;font-size:7.4px;font-weight:bold;color:#4d5566;font-family:'Liberation Sans', sans-serif;white-space:nowrap;transform:scaleX(0.94);transform-origin:100% 50%;-webkit-text-stroke:0.15px #4d5566;">274</div><svg style="left:66.50px;top:332.42px;width:8px;height:8px" viewBox="0 0 8 8"><circle cx="4" cy="4" r="3.5" fill="none" stroke="#777" stroke-width="1"/><path d="M2.2 4H5.8" stroke="#777" stroke-width="1"/></svg><div style="left:77.00px;top:332.00px;height:9px;line-height:9px;font-size:7.4px;font-weight:bold;color:#222;font-family:'Liberation Sans', sans-serif;white-space:nowrap;transform:scaleX(0.87);transform-origin:0 50%;-webkit-text-stroke:0.15px #222;">EQUIPMENT SPECS</div><div style="left:-105.60px;width:600px;text-align:right;top:332.00px;height:9px;line-height:9px;font-size:7.2px;font-weight:bold;color:#555;font-family:'Liberation Sans', sans-serif;white-space:nowrap;-webkit-text-stroke:0.15px #555;">01/04/2021</div><div style="left:-41.50px;width:600px;text-align:right;top:332.00px;height:9px;line-height:9px;font-size:7.2px;font-weight:bold;color:#555;font-family:'Liberation Sans', sans-serif;white-space:nowrap;-webkit-text-stroke:0.15px #555;">01/28/2021</div><div style="left:22.00px;width:600px;text-align:right;top:332.00px;height:9px;line-height:9px;font-size:7.2px;font-weight:bold;color:#555;font-family:'Liberation Sans', sans-serif;white-space:nowrap;-webkit-text-stroke:0.15px #555;">100.00%</div><div style="left:39.00px;top:342.15px;width:27.00px;height:13.75px;background:#f4f4f4;border-top:1px solid #e6e6e6;box-sizing:border-box;"></div><div style="left:67.00px;top:342.15px;width:563.50px;height:13.75px;background:#f2f2f2;border-top:1px solid #e3e6e3;box-sizing:border-box;"></div><div style="left:-539.70px;width:600px;text-align:right;top:346.00px;height:9px;line-height:9px;font-size:7.4px;font-weight:normal;color:#4d5566;font-family:'Liberation Sans', sans-serif;white-space:nowrap;transform:scaleX(0.94);transform-origin:100% 50%;-webkit-text-stroke:0.15px #4d5566;">275</div><div style="left:195.80px;top:347.57px;width:9.20px;height:5.20px;background:#41702a;"></div><div style="left:207.90px;top:347.00px;height:7px;line-height:7px;font-size:7px;font-weight:normal;color:#666;font-family:'Liberation Sans', sans-serif;white-space:nowrap;-webkit-text-stroke:0.15px #666;">J012N-2EN-1520</div><div style="left:290.50px;top:347.00px;height:7px;line-height:7px;font-size:6.8px;font-weight:normal;color:#666;font-family:'Liberation Sans', sans-serif;white-space:nowrap;-webkit-text-stroke:0.15px #666;">Utility Company X Prepare and Issue Equipm...</div><div style="left:-105.60px;width:600px;text-align:right;top:346.00px;height:9px;line-height:9px;font-size:7.2px;font-weight:normal;color:#777;font-family:'Liberation Sans', sans-serif;white-space:nowrap;-webkit-text-stroke:0.15px #777;">01/04/2021</div><div style="left:-41.50px;width:600px;text-align:right;top:346.00px;height:9px;line-height:9px;font-size:7.2px;font-weight:normal;color:#777;font-family:'Liberation Sans', sans-serif;white-space:nowrap;-webkit-text-stroke:0.15px #777;">01/28/2021</div><div style="left:22.00px;width:600px;text-align:right;top:346.00px;height:9px;line-height:9px;font-size:7.2px;font-weight:normal;color:#777;font-family:'Liberation Sans', sans-serif;white-space:nowrap;-webkit-text-stroke:0.15px #777;">100.00%</div><div style="left:39.00px;top:355.90px;width:27.00px;height:13.75px;background:#f4f4f4;border-top:1px solid #e6e6e6;box-sizing:border-box;"></div><div style="left:67.00px;top:355.90px;width:563.50px;height:13.75px;background:#eff4ef;border-top:1px solid #e3e6e3;box-sizing:border-box;"></div><div style="left:-539.70px;width:600px;text-align:right;top:360.00px;height:9px;line-height:9px;font-size:7.4px;font-weight:bold;color:#4d5566;font-family:'Liberation Sans', sans-serif;white-space:nowrap;transform:scaleX(0.94);transform-origin:100% 50%;-webkit-text-stroke:0.15px #4d5566;">276</div><svg style="left:66.50px;top:359.92px;width:8px;height:8px" viewBox="0 0 8 8"><circle cx="4" cy="4" r="3.5" fill="none" stroke="#777" stroke-width="1"/><path d="M2.2 4H5.8" stroke="#777" stroke-width="1"/></svg><div style="left:77.00px;top:360.00px;height:9px;line-height:9px;font-size:7.4px;font-weight:bold;color:#222;font-family:'Liberation Sans', sans-serif;white-space:nowrap;transform:scaleX(0.87);transform-origin:0 50%;-webkit-text-stroke:0.15px #222;">EQUIPMENT SPECIFICATIONS</div><div style="left:-105.60px;width:600px;text-align:right;top:360.00px;height:9px;line-height:9px;font-size:7.2px;font-weight:bold;color:#555;font-family:'Liberation Sans', sans-serif;white-space:nowrap;-webkit-text-stroke:0.15px #555;">02/08/2021</div><div style="left:-41.50px;width:600px;text-align:right;top:360.00px;height:9px;line-height:9px;font-size:7.2px;font-weight:bold;color:#555;font-family:'Liberation Sans', sans-serif;white-space:nowrap;-webkit-text-stroke:0.15px #555;">05/07/2021</div><div style="left:22.00px;width:600px;text-align:right;top:360.00px;height:9px;line-height:9px;font-size:7.2px;font-weight:bold;color:#555;font-family:'Liberation Sans', sans-serif;white-space:nowrap;-webkit-text-stroke:0.15px #555;">100.00%</div><div style="left:39.00px;top:369.65px;width:27.00px;height:13.75px;background:#f4f4f4;border-top:1px solid #e6e6e6;box-sizing:border-box;"></div><div style="left:67.00px;top:369.65px;width:563.50px;height:13.75px;background:#f2f2f2;border-top:1px solid #e3e6e3;box-sizing:border-box;"></div><div style="left:-539.70px;width:600px;text-align:right;top:373.00px;height:9px;line-height:9px;font-size:7.4px;font-weight:normal;color:#4d5566;font-family:'Liberation Sans', sans-serif;white-space:nowrap;transform:scaleX(0.94);transform-origin:100% 50%;-webkit-text-stroke:0.15px #4d5566;">277</div><div style="left:195.80px;top:375.07px;width:9.20px;height:5.20px;background:#41702a;"></div><div style="left:207.90px;top:374.00px;height:7px;line-height:7px;font-size:7px;font-weight:normal;color:#666;font-family:'Liberation Sans', sans-serif;white-space:nowrap;-webkit-text-stroke:0.15px #666;">J012N-2EN-5520</div><div style="left:290.50px;top:374.00px;height:7px;line-height:7px;font-size:6.8px;font-weight:normal;color:#666;font-family:'Liberation Sans', sans-serif;white-space:nowrap;-webkit-text-stroke:0.15px #666;">EPC Prepare and Issue Equipment Specs</div><div style="left:-105.60px;width:600px;text-align:right;top:373.00px;height:9px;line-height:9px;font-size:7.2px;font-weight:normal;color:#777;font-family:'Liberation Sans', sans-serif;white-space:nowrap;-webkit-text-stroke:0.15px #777;">02/08/2021</div><div style="left:-41.50px;width:600px;text-align:right;top:373.00px;height:9px;line-height:9px;font-size:7.2px;font-weight:normal;color:#777;font-family:'Liberation Sans', sans-serif;white-space:nowrap;-webkit-text-stroke:0.15px #777;">05/07/2021</div><div style="left:22.00px;width:600px;text-align:right;top:373.00px;height:9px;line-height:9px;font-size:7.2px;font-weight:normal;color:#777;font-family:'Liberation Sans', sans-serif;white-space:nowrap;-webkit-text-stroke:0.15px #777;">100.00%</div><div style="left:66.00px;top:81.00px;width:1.00px;height:305.00px;background:#c6c6c6;"></div><div style="left:192.00px;top:109.00px;width:0.70px;height:277.00px;background:#e2e5e2;"></div><div style="left:287.30px;top:109.00px;width:0.70px;height:277.00px;background:#e2e5e2;"></div><div style="left:433.50px;top:81.00px;width:1.20px;height:305.00px;background:#cfcfcf;"></div><div style="left:497.00px;top:109.00px;width:0.70px;height:277.00px;background:#e2e5e2;"></div><div style="left:562.00px;top:109.00px;width:0.70px;height:277.00px;background:#e2e5e2;"></div><div style="left:626.00px;top:109.00px;width:0.70px;height:277.00px;background:#e2e5e2;"></div><div style="left:634.00px;top:107.25px;width:404.50px;height:1.00px;background:#dcdcdc;"></div><div style="left:634.00px;top:121.00px;width:404.50px;height:1.00px;background:#dcdcdc;"></div><div style="left:634.00px;top:134.75px;width:404.50px;height:1.00px;background:#dcdcdc;"></div><div style="left:634.00px;top:148.50px;width:404.50px;height:1.00px;background:#dcdcdc;"></div><div style="left:634.00px;top:162.25px;width:404.50px;height:1.00px;background:#dcdcdc;"></div><div style="left:634.00px;top:176.00px;width:404.50px;height:1.00px;background:#dcdcdc;"></div><div style="left:634.00px;top:189.75px;width:404.50px;height:1.00px;background:#dcdcdc;"></div><div style="left:634.00px;top:203.50px;width:404.50px;height:1.00px;background:#dcdcdc;"></div><div style="left:634.00px;top:217.25px;width:404.50px;height:1.00px;background:#dcdcdc;"></div><div style="left:634.00px;top:231.00px;width:404.50px;height:1.00px;background:#dcdcdc;"></div><div style="left:634.00px;top:244.75px;width:404.50px;height:1.00px;background:#dcdcdc;"></div><div style="left:634.00px;top:258.50px;width:404.50px;height:1.00px;background:#dcdcdc;"></div><div style="left:634.00px;top:272.25px;width:404.50px;height:1.00px;background:#dcdcdc;"></div><div style="left:634.00px;top:286.00px;width:404.50px;height:1.00px;background:#dcdcdc;"></div><div style="left:634.00px;top:299.75px;width:404.50px;height:1.00px;background:#dcdcdc;"></div><div style="left:634.00px;top:313.50px;width:404.50px;height:1.00px;background:#dcdcdc;"></div><div style="left:634.00px;top:327.25px;width:404.50px;height:1.00px;background:#dcdcdc;"></div><div style="left:634.00px;top:341.00px;width:404.50px;height:1.00px;background:#dcdcdc;"></div><div style="left:634.00px;top:354.75px;width:404.50px;height:1.00px;background:#dcdcdc;"></div><div style="left:634.00px;top:368.50px;width:404.50px;height:1.00px;background:#dcdcdc;"></div><div style="left:634.00px;top:382.25px;width:404.50px;height:1.00px;background:#dcdcdc;"></div><div style="left:650.00px;top:81.00px;width:391.00px;height:305.00px;overflow:hidden;"><div style="left:2.50px;top:15.00px;height:8px;line-height:8px;font-size:7.1px;font-weight:normal;color:#333;font-family:'Liberation Sans', sans-serif;white-space:nowrap;-webkit-text-stroke:0.15px #333;">4/09</div><div style="left:22.50px;top:15.00px;height:8px;line-height:8px;font-size:7.1px;font-weight:normal;color:#333;font-family:'Liberation Sans', sans-serif;white-space:nowrap;-webkit-text-stroke:0.15px #333;">4/16</div><div style="left:42.50px;top:15.00px;height:8px;line-height:8px;font-size:7.1px;font-weight:normal;color:#333;font-family:'Liberation Sans', sans-serif;white-space:nowrap;-webkit-text-stroke:0.15px #333;">4/23</div><div style="left:62.50px;top:15.00px;height:8px;line-height:8px;font-size:7.1px;font-weight:normal;color:#333;font-family:'Liberation Sans', sans-serif;white-space:nowrap;-webkit-text-stroke:0.15px #333;">4/30</div><div style="left:82.50px;top:15.00px;height:8px;line-height:8px;font-size:7.1px;font-weight:normal;color:#333;font-family:'Liberation Sans', sans-serif;white-space:nowrap;-webkit-text-stroke:0.15px #333;">5/07</div><div style="left:102.50px;top:15.00px;height:8px;line-height:8px;font-size:7.1px;font-weight:normal;color:#333;font-family:'Liberation Sans', sans-serif;white-space:nowrap;-webkit-text-stroke:0.15px #333;">5/14</div><div style="left:122.50px;top:15.00px;height:8px;line-height:8px;font-size:7.1px;font-weight:normal;color:#333;font-family:'Liberation Sans', sans-serif;white-space:nowrap;-webkit-text-stroke:0.15px #333;">5/21</div><div style="left:142.50px;top:15.00px;height:8px;line-height:8px;font-size:7.1px;font-weight:normal;color:#333;font-family:'Liberation Sans', sans-serif;white-space:nowrap;-webkit-text-stroke:0.15px #333;">5/28</div><div style="left:162.50px;top:15.00px;height:8px;line-height:8px;font-size:7.1px;font-weight:normal;color:#333;font-family:'Liberation Sans', sans-serif;white-space:nowrap;-webkit-text-stroke:0.15px #333;">6/04</div><div style="left:182.50px;top:15.00px;height:8px;line-height:8px;font-size:7.1px;font-weight:normal;color:#333;font-family:'Liberation Sans', sans-serif;white-space:nowrap;-webkit-text-stroke:0.15px #333;">6/11</div><div style="left:202.50px;top:15.00px;height:8px;line-height:8px;font-size:7.1px;font-weight:normal;color:#333;font-family:'Liberation Sans', sans-serif;white-space:nowrap;-webkit-text-stroke:0.15px #333;">6/18</div><div style="left:222.50px;top:15.00px;height:8px;line-height:8px;font-size:7.1px;font-weight:normal;color:#333;font-family:'Liberation Sans', sans-serif;white-space:nowrap;-webkit-text-stroke:0.15px #333;">6/25</div><div style="left:242.50px;top:15.00px;height:8px;line-height:8px;font-size:7.1px;font-weight:normal;color:#333;font-family:'Liberation Sans', sans-serif;white-space:nowrap;-webkit-text-stroke:0.15px #333;">7/02</div><div style="left:262.50px;top:15.00px;height:8px;line-height:8px;font-size:7.1px;font-weight:normal;color:#333;font-family:'Liberation Sans', sans-serif;white-space:nowrap;-webkit-text-stroke:0.15px #333;">7/09</div><div style="left:282.50px;top:15.00px;height:8px;line-height:8px;font-size:7.1px;font-weight:normal;color:#333;font-family:'Liberation Sans', sans-serif;white-space:nowrap;-webkit-text-stroke:0.15px #333;">7/16</div><div style="left:302.50px;top:15.00px;height:8px;line-height:8px;font-size:7.1px;font-weight:normal;color:#333;font-family:'Liberation Sans', sans-serif;white-space:nowrap;-webkit-text-stroke:0.15px #333;">7/23</div><div style="left:322.50px;top:15.00px;height:8px;line-height:8px;font-size:7.1px;font-weight:normal;color:#333;font-family:'Liberation Sans', sans-serif;white-space:nowrap;-webkit-text-stroke:0.15px #333;">7/30</div><div style="left:342.50px;top:15.00px;height:8px;line-height:8px;font-size:7.1px;font-weight:normal;color:#333;font-family:'Liberation Sans', sans-serif;white-space:nowrap;-webkit-text-stroke:0.15px #333;">8/06</div><div style="left:362.50px;top:15.00px;height:8px;line-height:8px;font-size:7.1px;font-weight:normal;color:#333;font-family:'Liberation Sans', sans-serif;white-space:nowrap;-webkit-text-stroke:0.15px #333;">8/13</div><div style="left:382.50px;top:15.00px;height:8px;line-height:8px;font-size:7.1px;font-weight:normal;color:#333;font-family:'Liberation Sans', sans-serif;white-space:nowrap;-webkit-text-stroke:0.15px #333;">8/20</div><svg style="left:0.00px;top:0.00px;width:391px;height:305px" viewBox="650 81 391 305"><path d="M670.50 93V386M690.50 93V386M710.50 93V386M730.50 93V386M750.50 93V386M770.50 93V386M790.50 93V386M810.50 93V386M830.50 93V386M850.50 93V386M870.50 93V386M890.50 93V386M910.50 93V386M930.50 93V386M950.50 93V386M970.50 93V386M990.50 93V386M1010.50 93V386M1030.50 93V386" stroke="#c9c9c9" stroke-width="1" stroke-dasharray="2.2 3" fill="none"/></svg><div style="left:63.56px;top:1.00px;width:0.80px;height:11.00px;background:#cfcfcf;"></div><div style="left:66.06px;top:2.00px;height:9px;line-height:9px;font-size:7.4px;font-weight:bold;color:#222;font-family:'Liberation Sans', sans-serif;white-space:nowrap;-webkit-text-stroke:0.15px #222;">May 2023</div><div style="left:152.13px;top:1.00px;width:0.80px;height:11.00px;background:#cfcfcf;"></div><div style="left:154.63px;top:2.00px;height:9px;line-height:9px;font-size:7.4px;font-weight:bold;color:#222;font-family:'Liberation Sans', sans-serif;white-space:nowrap;-webkit-text-stroke:0.15px #222;">June 2023</div><div style="left:237.84px;top:1.00px;width:0.80px;height:11.00px;background:#cfcfcf;"></div><div style="left:240.34px;top:2.00px;height:9px;line-height:9px;font-size:7.4px;font-weight:bold;color:#222;font-family:'Liberation Sans', sans-serif;white-space:nowrap;-webkit-text-stroke:0.15px #222;">July 2023</div><div style="left:326.41px;top:1.00px;width:0.80px;height:11.00px;background:#cfcfcf;"></div><div style="left:328.91px;top:2.00px;height:9px;line-height:9px;font-size:7.4px;font-weight:bold;color:#222;font-family:'Liberation Sans', sans-serif;white-space:nowrap;-webkit-text-stroke:0.15px #222;">August 2023</div><div style="left:-21.86px;top:2.00px;height:9px;line-height:9px;font-size:7.6px;font-weight:bold;color:#222;font-family:'Liberation Sans', sans-serif;white-space:nowrap;-webkit-text-stroke:0.15px #222;">April 2023</div></div><div style="left:650.50px;top:105.00px;width:388.00px;height:281.00px;overflow:hidden;"><div style="left:-50.50px;top:5.25px;width:406.30px;height:8.30px;background:#aeb6b9;border-radius:2px;"></div><div style="left:-49.50px;top:6.25px;width:404.30px;height:6.30px;background:#dfe8eb;border-top-right-radius:1.5px;border-bottom-right-radius:1.5px;"></div><div style="left:182.80px;top:19.00px;width:173.00px;height:8.30px;background:#aeb6b9;border-radius:2px;"></div><div style="left:183.80px;top:20.00px;width:171.00px;height:6.30px;background:#dfe8eb;border-top-right-radius:1.5px;border-bottom-right-radius:1.5px;"></div><div style="left:359.60px;top:19.00px;height:9px;line-height:9px;font-size:7.9px;font-weight:normal;color:#2a2a2a;font-family:'Liberation Sans', sans-serif;white-space:nowrap;-webkit-text-stroke:0.15px #2a2a2a;">J012N-2CN-2010-Install Grounding</div><div style="left:-50.50px;top:60.25px;width:294.50px;height:8.30px;background:#aeb6b9;border-radius:2px;"></div><div style="left:-49.50px;top:61.25px;width:253.30px;height:6.30px;background:#2e2b29;"></div><div style="left:204.80px;top:61.25px;width:38.20px;height:6.30px;background:#dfe8eb;border-top-right-radius:1.5px;border-bottom-right-radius:1.5px;"></div><div style="left:-50.50px;top:60.25px;width:255.30px;height:8.30px;background:#2e2b29;"></div><div style="left:-50.50px;top:74.00px;width:105.60px;height:8.30px;background:#58a86e;border-radius:2px;"></div><div style="left:-49.50px;top:75.00px;width:103.60px;height:6.30px;background:#62b97a;border-top-right-radius:1.5px;border-bottom-right-radius:1.5px;"></div><div style="left:58.90px;top:74.00px;height:9px;line-height:9px;font-size:7.9px;font-weight:normal;color:#2a2a2a;font-family:'Liberation Sans', sans-serif;white-space:nowrap;-webkit-text-stroke:0.15px #2a2a2a;">J012N-2CN-3020-Site Grading</div><div style="left:-50.50px;top:87.75px;width:294.50px;height:8.30px;background:#d8c690;border-radius:2px;"></div><div style="left:-49.50px;top:88.75px;width:213.60px;height:6.30px;background:#f7da8c;"></div><div style="left:165.10px;top:88.75px;width:77.90px;height:6.30px;background:#fdf8e7;border-top-right-radius:1.5px;border-bottom-right-radius:1.5px;"></div><div style="left:247.80px;top:88.00px;height:9px;line-height:9px;font-size:7.9px;font-weight:normal;color:#2a2a2a;font-family:'Liberation Sans', sans-serif;white-space:nowrap;-webkit-text-stroke:0.15px #2a2a2a;">J012N-2CN-3080-Tree Clearing and Early Site Grading [McGrath]</div><div style="left:122.30px;top:101.50px;width:173.70px;height:8.30px;background:#aeb6b9;border-radius:2px;"></div><div style="left:123.30px;top:102.50px;width:171.70px;height:6.30px;background:#dfe8eb;border-top-right-radius:1.5px;border-bottom-right-radius:1.5px;"></div><div style="left:122.30px;top:115.25px;width:173.70px;height:8.30px;background:#aeb6b9;border-radius:2px;"></div><div style="left:123.30px;top:116.25px;width:171.70px;height:6.30px;background:#dfe8eb;border-top-right-radius:1.5px;border-bottom-right-radius:1.5px;"></div><div style="left:299.80px;top:115.00px;height:9px;line-height:9px;font-size:7.9px;font-weight:normal;color:#2a2a2a;font-family:'Liberation Sans', sans-serif;white-space:nowrap;-webkit-text-stroke:0.15px #2a2a2a;">J012N-2CN-3040-E/F/R/P Foundations - Slab on Grade</div><div style="left:62.50px;top:129.00px;width:173.40px;height:8.30px;background:#aeb6b9;border-radius:2px;"></div><div style="left:63.50px;top:130.00px;width:171.40px;height:6.30px;background:#dfe8eb;border-top-right-radius:1.5px;border-bottom-right-radius:1.5px;"></div><div style="left:62.50px;top:142.75px;width:173.40px;height:8.30px;background:#aeb6b9;border-radius:2px;"></div><div style="left:63.50px;top:143.75px;width:171.40px;height:6.30px;background:#dfe8eb;border-top-right-radius:1.5px;border-bottom-right-radius:1.5px;"></div><div style="left:239.70px;top:143.00px;height:9px;line-height:9px;font-size:7.9px;font-weight:normal;color:#2a2a2a;font-family:'Liberation Sans', sans-serif;white-space:nowrap;-webkit-text-stroke:0.15px #2a2a2a;">J012N-2CN-3050-E/F/R/P Foundations - Piers</div><div style="left:62.50px;top:156.50px;width:53.00px;height:8.30px;background:#aeb6b9;border-radius:2px;"></div><div style="left:63.50px;top:157.50px;width:51.00px;height:6.30px;background:#dfe8eb;border-top-right-radius:1.5px;border-bottom-right-radius:1.5px;"></div><div style="left:62.50px;top:170.25px;width:53.00px;height:8.30px;background:#aeb6b9;border-radius:2px;"></div><div style="left:63.50px;top:171.25px;width:51.00px;height:6.30px;background:#dfe8eb;border-top-right-radius:1.5px;border-bottom-right-radius:1.5px;"></div><div style="left:119.30px;top:170.00px;height:9px;line-height:9px;font-size:7.9px;font-weight:normal;color:#2a2a2a;font-family:'Liberation Sans', sans-serif;white-space:nowrap;-webkit-text-stroke:0.15px #2a2a2a;">J012N-2CN-3030-Install Site Fence</div></div><svg style="left:1016.50px;top:87.80px;width:17px;height:17px" viewBox="0 0 17 17"><circle cx="8.5" cy="8.5" r="8" fill="#fdfdfd" stroke="#bdbdbd" stroke-width="0.9"/><path d="M5.2 8.5H11.8M8.5 5.2V11.8" stroke="#333" stroke-width="1.1"/></svg><svg style="left:1016.50px;top:108.20px;width:17px;height:17px" viewBox="0 0 17 17"><circle cx="8.5" cy="8.5" r="8" fill="#fdfdfd" stroke="#bdbdbd" stroke-width="0.9"/><path d="M5.2 8.5H11.8" stroke="#333" stroke-width="1.1"/></svg><div style="left:1040.00px;top:272.50px;width:3.00px;height:23.00px;background:#a3a3a3;border-radius:1.5px 0 0 1.5px;"></div><div style="left:650.00px;top:92.00px;width:1.00px;height:294.00px;background:#bdbdbd;"></div><div style="left:328.50px;top:335.50px;width:902.80px;height:351.50px;background:#1c1c1c;box-shadow:2px 3px 4px rgba(20,25,45,0.55);"></div><div style="left:329.50px;top:336.50px;width:900.30px;height:349.00px;background:#fff;"></div><div style="left:329.50px;top:336.50px;width:466.50px;height:26.00px;background:#efefef;"></div><div style="left:329.50px;top:362.00px;width:466.50px;height:1.20px;background:#222;"></div><div style="left:446.00px;top:336.50px;width:1.10px;height:26.00px;background:#333;"></div><div style="left:642.50px;top:336.50px;width:1.10px;height:26.00px;background:#333;"></div><div style="left:708.80px;top:336.50px;width:1.10px;height:26.00px;background:#333;"></div><div style="left:753.30px;top:336.50px;width:1.10px;height:26.00px;background:#333;"></div><div style="left:332.00px;top:338.00px;height:10px;line-height:10px;font-size:8.5px;font-weight:normal;color:#222;font-family:'Liberation Sans', sans-serif;white-space:nowrap;transform:scaleX(0.83);transform-origin:0 50%;">Activity ID</div><div style="left:449.00px;top:338.00px;height:10px;line-height:10px;font-size:8.5px;font-weight:normal;color:#222;font-family:'Liberation Sans', sans-serif;white-space:nowrap;transform:scaleX(0.83);transform-origin:0 50%;">Activity Name</div><div style="left:106.00px;width:600px;text-align:right;top:338.00px;height:10px;line-height:10px;font-size:8.5px;font-weight:normal;color:#222;font-family:'Liberation Sans', sans-serif;white-space:nowrap;transform:scaleX(0.83);transform-origin:100% 50%;">Performance %</div><div style="left:106.00px;width:600px;text-align:right;top:347.00px;height:10px;line-height:10px;font-size:8.5px;font-weight:normal;color:#222;font-family:'Liberation Sans', sans-serif;white-space:nowrap;transform:scaleX(0.83);transform-origin:100% 50%;">Complete</div><div style="left:711.50px;top:338.00px;height:10px;line-height:10px;font-size:8.5px;font-weight:normal;color:#222;font-family:'Liberation Sans', sans-serif;white-space:nowrap;transform:scaleX(0.83);transform-origin:0 50%;">Start</div><div style="left:756.00px;top:338.00px;height:10px;line-height:10px;font-size:8.5px;font-weight:normal;color:#222;font-family:'Liberation Sans', sans-serif;white-space:nowrap;transform:scaleX(0.83);transform-origin:0 50%;">Finish</div><div style="left:329.50px;top:363.00px;width:466.50px;height:18.00px;background:#0a8842;"></div><div style="left:642.50px;top:363.00px;width:1.00px;height:18.00px;background:#6fbf88;"></div><div style="left:708.80px;top:363.00px;width:1.00px;height:18.00px;background:#6fbf88;"></div><div style="left:753.30px;top:363.00px;width:1.00px;height:18.00px;background:#6fbf88;"></div><div style="left:329.50px;top:380.50px;width:466.50px;height:1.00px;background:#9fd0a8;"></div><div style="left:345.30px;top:364.00px;height:15px;line-height:15px;font-size:13.7px;font-weight:bold;color:#088c14;font-family:'Liberation Sans', sans-serif;white-space:nowrap;transform:scaleX(0.937);transform-origin:0 50%;-webkit-text-stroke:0.2px #088c14;">Toledo Bend - Replace Turbine on Generator 1</div><div style="left:331.00px;top:370.00px;width:5.50px;height:5.50px;background:#f4f4f4;"></div><div style="left:332.00px;top:372.15px;width:3.50px;height:1.20px;background:#444;"></div><div style="left:329.00px;top:381.50px;width:3.60px;height:302.50px;background:#0a8842;"></div><div style="left:333.00px;top:381.50px;width:2.60px;height:302.50px;background:#8a8a8a;"></div><div style="left:333.00px;top:381.00px;width:463.00px;height:13.90px;background:#808080;"></div><div style="left:333.00px;top:394.10px;width:463.00px;height:0.80px;background:#b8b8d8;"></div><div style="left:334.60px;top:385.35px;width:5.00px;height:5.00px;background:#f4f4f4;"></div><div style="left:335.60px;top:387.25px;width:3.00px;height:1.20px;background:#444;"></div><div style="left:346.50px;top:383.00px;height:10px;line-height:10px;font-size:9px;font-weight:bold;color:#ececec;font-family:'Liberation Sans', sans-serif;white-space:nowrap;transform:scaleX(0.95);transform-origin:0 50%;">CONSTRUCTION</div><div style="left:106.00px;width:600px;text-align:right;top:383.00px;height:10px;line-height:10px;font-size:8.5px;font-weight:normal;color:#ececec;font-family:'Liberation Sans', sans-serif;white-space:nowrap;transform:scaleX(0.83);transform-origin:100% 50%;">34.29%</div><div style="left:711.50px;top:383.00px;height:10px;line-height:10px;font-size:8.5px;font-weight:normal;color:#ececec;font-family:'Liberation Sans', sans-serif;white-space:nowrap;transform:scaleX(0.83);transform-origin:0 50%;">30-Mar-22 A</div><div style="left:756.00px;top:383.00px;height:10px;line-height:10px;font-size:8.5px;font-weight:normal;color:#ececec;font-family:'Liberation Sans', sans-serif;white-space:nowrap;transform:scaleX(0.83);transform-origin:0 50%;">18-Mar-24</div><div style="left:642.50px;top:381.00px;width:1.00px;height:12.05px;background:#a8a8a8;"></div><div style="left:708.80px;top:381.00px;width:1.00px;height:12.05px;background:#a8a8a8;"></div><div style="left:753.30px;top:381.00px;width:1.00px;height:12.05px;background:#a8a8a8;"></div><div style="left:335.60px;top:394.90px;width:460.40px;height:12.05px;background:#0000a0;"></div><div style="left:335.60px;top:406.15px;width:460.40px;height:0.80px;background:#b8b8e0;"></div><div style="left:337.80px;top:398.32px;width:5.00px;height:5.00px;background:#f4f4f4;"></div><div style="left:338.80px;top:400.22px;width:3.00px;height:1.20px;background:#444;"></div><div style="left:350.00px;top:396.00px;height:10px;line-height:10px;font-size:8.9px;font-weight:bold;color:#f0f0ff;font-family:'Liberation Sans', sans-serif;white-space:nowrap;transform:scaleX(0.83);transform-origin:0 50%;">SITE &amp; FOUNDATION</div><div style="left:106.00px;width:600px;text-align:right;top:396.00px;height:10px;line-height:10px;font-size:8.5px;font-weight:normal;color:#f0f0ff;font-family:'Liberation Sans', sans-serif;white-space:nowrap;transform:scaleX(0.83);transform-origin:100% 50%;">63.24%</div><div style="left:711.50px;top:396.00px;height:10px;line-height:10px;font-size:8.5px;font-weight:normal;color:#f0f0ff;font-family:'Liberation Sans', sans-serif;white-space:nowrap;transform:scaleX(0.83);transform-origin:0 50%;">30-Mar-22 A</div><div style="left:756.00px;top:396.00px;height:10px;line-height:10px;font-size:8.5px;font-weight:normal;color:#f0f0ff;font-family:'Liberation Sans', sans-serif;white-space:nowrap;transform:scaleX(0.83);transform-origin:0 50%;">29-Dec-23</div><div style="left:642.50px;top:394.90px;width:1.00px;height:12.05px;background:#8080d0;"></div><div style="left:708.80px;top:394.90px;width:1.00px;height:12.05px;background:#8080d0;"></div><div style="left:753.30px;top:394.90px;width:1.00px;height:12.05px;background:#8080d0;"></div><div style="left:335.60px;top:406.95px;width:3.10px;height:12.05px;background:#0000a0;"></div><div style="left:339.00px;top:406.95px;width:457.00px;height:12.05px;background:#fff;border-top:1px solid #d8d8d8;box-sizing:border-box;"></div><div style="left:446.20px;top:406.95px;width:1.00px;height:12.05px;background:#d6d6d6;"></div><div style="left:642.50px;top:406.95px;width:1.00px;height:12.05px;background:#d6d6d6;"></div><div style="left:708.80px;top:406.95px;width:1.00px;height:12.05px;background:#d6d6d6;"></div><div style="left:753.30px;top:406.95px;width:1.00px;height:12.05px;background:#d6d6d6;"></div><div style="left:352.80px;top:408.00px;height:10px;line-height:10px;font-size:8.5px;font-weight:normal;color:#1a1a1a;font-family:'Liberation Sans', sans-serif;white-space:nowrap;transform:scaleX(0.83);transform-origin:0 50%;">J012N-2CN-3080</div><div style="left:449.00px;top:408.00px;height:10px;line-height:10px;font-size:8.5px;font-weight:normal;color:#1a1a1a;font-family:'Liberation Sans', sans-serif;white-space:nowrap;transform:scaleX(0.83);transform-origin:0 50%;">Tree Clearing and Early Site Grading [McGrath]</div><div style="left:106.00px;width:600px;text-align:right;top:408.00px;height:10px;line-height:10px;font-size:8.5px;font-weight:normal;color:#1a1a1a;font-family:'Liberation Sans', sans-serif;white-space:nowrap;transform:scaleX(0.83);transform-origin:100% 50%;">94%</div><div style="left:711.50px;top:408.00px;height:10px;line-height:10px;font-size:8.5px;font-weight:normal;color:#1a1a1a;font-family:'Liberation Sans', sans-serif;white-space:nowrap;transform:scaleX(0.83);transform-origin:0 50%;">30-Mar-22 A</div><div style="left:756.00px;top:408.00px;height:10px;line-height:10px;font-size:8.5px;font-weight:normal;color:#1a1a1a;font-family:'Liberation Sans', sans-serif;white-space:nowrap;transform:scaleX(0.83);transform-origin:0 50%;">03-Jul-23</div><div style="left:335.60px;top:419.00px;width:3.10px;height:12.05px;background:#0000a0;"></div><div style="left:330.00px;top:419.00px;width:466.00px;height:12.65px;background:#1a7ad6;"></div><div style="left:330.00px;top:419.00px;width:9.00px;height:12.65px;background:#4fa3ea;"></div><div style="left:446.50px;top:419.30px;width:196.00px;height:12.05px;border:1px solid #e09040;box-sizing:border-box;"></div><div style="left:352.80px;top:420.00px;height:10px;line-height:10px;font-size:8.5px;font-weight:normal;color:#f4f8ff;font-family:'Liberation Sans', sans-serif;white-space:nowrap;transform:scaleX(0.83);transform-origin:0 50%;">J012N-2CN-3050</div><div style="left:449.00px;top:420.00px;height:10px;line-height:10px;font-size:8.5px;font-weight:normal;color:#f4f8ff;font-family:'Liberation Sans', sans-serif;white-space:nowrap;transform:scaleX(0.83);transform-origin:0 50%;">E/F/R/P Foundations  - Piers</div><div style="left:106.00px;width:600px;text-align:right;top:420.00px;height:10px;line-height:10px;font-size:8.5px;font-weight:normal;color:#f4f8ff;font-family:'Liberation Sans', sans-serif;white-space:nowrap;transform:scaleX(0.83);transform-origin:100% 50%;">0%</div><div style="left:711.50px;top:420.00px;height:10px;line-height:10px;font-size:8.5px;font-weight:normal;color:#f4f8ff;font-family:'Liberation Sans', sans-serif;white-space:nowrap;transform:scaleX(0.83);transform-origin:0 50%;">01-May-23</div><div style="left:756.00px;top:420.00px;height:10px;line-height:10px;font-size:8.5px;font-weight:normal;color:#f4f8ff;font-family:'Liberation Sans', sans-serif;white-space:nowrap;transform:scaleX(0.83);transform-origin:0 50%;">30-Jun-23</div><div style="left:335.60px;top:431.05px;width:3.10px;height:12.05px;background:#0000a0;"></div><div style="left:339.00px;top:431.05px;width:457.00px;height:12.05px;background:#fff;border-top:1px solid #d8d8d8;box-sizing:border-box;"></div><div style="left:446.20px;top:431.05px;width:1.00px;height:12.05px;background:#d6d6d6;"></div><div style="left:642.50px;top:431.05px;width:1.00px;height:12.05px;background:#d6d6d6;"></div><div style="left:708.80px;top:431.05px;width:1.00px;height:12.05px;background:#d6d6d6;"></div><div style="left:753.30px;top:431.05px;width:1.00px;height:12.05px;background:#d6d6d6;"></div><div style="left:352.80px;top:432.00px;height:10px;line-height:10px;font-size:8.5px;font-weight:normal;color:#1a1a1a;font-family:'Liberation Sans', sans-serif;white-space:nowrap;transform:scaleX(0.83);transform-origin:0 50%;">J012N-2CN-3040</div><div style="left:449.00px;top:432.00px;height:10px;line-height:10px;font-size:8.5px;font-weight:normal;color:#1a1a1a;font-family:'Liberation Sans', sans-serif;white-space:nowrap;transform:scaleX(0.83);transform-origin:0 50%;">E/F/R/P Foundations - Slab on Grade</div><div style="left:106.00px;width:600px;text-align:right;top:432.00px;height:10px;line-height:10px;font-size:8.5px;font-weight:normal;color:#1a1a1a;font-family:'Liberation Sans', sans-serif;white-space:nowrap;transform:scaleX(0.83);transform-origin:100% 50%;">0%</div><div style="left:711.50px;top:432.00px;height:10px;line-height:10px;font-size:8.5px;font-weight:normal;color:#1a1a1a;font-family:'Liberation Sans', sans-serif;white-space:nowrap;transform:scaleX(0.83);transform-origin:0 50%;">22-May-23</div><div style="left:756.00px;top:432.00px;height:10px;line-height:10px;font-size:8.5px;font-weight:normal;color:#1a1a1a;font-family:'Liberation Sans', sans-serif;white-space:nowrap;transform:scaleX(0.83);transform-origin:0 50%;">21-Jul-23</div><div style="left:335.60px;top:443.10px;width:3.10px;height:12.05px;background:#0000a0;"></div><div style="left:339.00px;top:443.10px;width:457.00px;height:12.05px;background:#fff;border-top:1px solid #d8d8d8;box-sizing:border-box;"></div><div style="left:446.20px;top:443.10px;width:1.00px;height:12.05px;background:#d6d6d6;"></div><div style="left:642.50px;top:443.10px;width:1.00px;height:12.05px;background:#d6d6d6;"></div><div style="left:708.80px;top:443.10px;width:1.00px;height:12.05px;background:#d6d6d6;"></div><div style="left:753.30px;top:443.10px;width:1.00px;height:12.05px;background:#d6d6d6;"></div><div style="left:352.80px;top:444.00px;height:10px;line-height:10px;font-size:8.5px;font-weight:normal;color:#1a1a1a;font-family:'Liberation Sans', sans-serif;white-space:nowrap;transform:scaleX(0.83);transform-origin:0 50%;">J012N-2CN-3030</div><div style="left:449.00px;top:444.00px;height:10px;line-height:10px;font-size:8.5px;font-weight:normal;color:#1a1a1a;font-family:'Liberation Sans', sans-serif;white-space:nowrap;transform:scaleX(0.83);transform-origin:0 50%;">Install Site Fence</div><div style="left:106.00px;width:600px;text-align:right;top:444.00px;height:10px;line-height:10px;font-size:8.5px;font-weight:normal;color:#1a1a1a;font-family:'Liberation Sans', sans-serif;white-space:nowrap;transform:scaleX(0.83);transform-origin:100% 50%;">0%</div><div style="left:711.50px;top:444.00px;height:10px;line-height:10px;font-size:8.5px;font-weight:normal;color:#1a1a1a;font-family:'Liberation Sans', sans-serif;white-space:nowrap;transform:scaleX(0.83);transform-origin:0 50%;">01-May-23</div><div style="left:756.00px;top:444.00px;height:10px;line-height:10px;font-size:8.5px;font-weight:normal;color:#1a1a1a;font-family:'Liberation Sans', sans-serif;white-space:nowrap;transform:scaleX(0.83);transform-origin:0 50%;">19-May-23</div><div style="left:335.60px;top:455.15px;width:3.10px;height:12.05px;background:#0000a0;"></div><div style="left:339.00px;top:455.15px;width:457.00px;height:12.05px;background:#fff;border-top:1px solid #d8d8d8;box-sizing:border-box;"></div><div style="left:446.20px;top:455.15px;width:1.00px;height:12.05px;background:#d6d6d6;"></div><div style="left:642.50px;top:455.15px;width:1.00px;height:12.05px;background:#d6d6d6;"></div><div style="left:708.80px;top:455.15px;width:1.00px;height:12.05px;background:#d6d6d6;"></div><div style="left:753.30px;top:455.15px;width:1.00px;height:12.05px;background:#d6d6d6;"></div><div style="left:352.80px;top:456.00px;height:10px;line-height:10px;font-size:8.5px;font-weight:normal;color:#1a1a1a;font-family:'Liberation Sans', sans-serif;white-space:nowrap;transform:scaleX(0.83);transform-origin:0 50%;">J012N-2CN-3060</div><div style="left:449.00px;top:456.00px;height:10px;line-height:10px;font-size:8.5px;font-weight:normal;color:#1a1a1a;font-family:'Liberation Sans', sans-serif;white-space:nowrap;transform:scaleX(0.83);transform-origin:0 50%;">Install Interior Road Way</div><div style="left:106.00px;width:600px;text-align:right;top:456.00px;height:10px;line-height:10px;font-size:8.5px;font-weight:normal;color:#1a1a1a;font-family:'Liberation Sans', sans-serif;white-space:nowrap;transform:scaleX(0.83);transform-origin:100% 50%;">0%</div><div style="left:711.50px;top:456.00px;height:10px;line-height:10px;font-size:8.5px;font-weight:normal;color:#1a1a1a;font-family:'Liberation Sans', sans-serif;white-space:nowrap;transform:scaleX(0.83);transform-origin:0 50%;">14-Aug-23</div><div style="left:756.00px;top:456.00px;height:10px;line-height:10px;font-size:8.5px;font-weight:normal;color:#1a1a1a;font-family:'Liberation Sans', sans-serif;white-space:nowrap;transform:scaleX(0.83);transform-origin:0 50%;">01-Sep-23</div><div style="left:335.60px;top:467.20px;width:3.10px;height:12.05px;background:#0000a0;"></div><div style="left:339.00px;top:467.20px;width:457.00px;height:12.05px;background:#fff;border-top:1px solid #d8d8d8;box-sizing:border-box;"></div><div style="left:446.20px;top:467.20px;width:1.00px;height:12.05px;background:#d6d6d6;"></div><div style="left:642.50px;top:467.20px;width:1.00px;height:12.05px;background:#d6d6d6;"></div><div style="left:708.80px;top:467.20px;width:1.00px;height:12.05px;background:#d6d6d6;"></div><div style="left:753.30px;top:467.20px;width:1.00px;height:12.05px;background:#d6d6d6;"></div><div style="left:352.80px;top:468.00px;height:10px;line-height:10px;font-size:8.5px;font-weight:normal;color:#1a1a1a;font-family:'Liberation Sans', sans-serif;white-space:nowrap;transform:scaleX(0.83);transform-origin:0 50%;">J012N-2CN-3070</div><div style="left:449.00px;top:468.00px;height:10px;line-height:10px;font-size:8.5px;font-weight:normal;color:#1a1a1a;font-family:'Liberation Sans', sans-serif;white-space:nowrap;transform:scaleX(0.83);transform-origin:0 50%;">Install Station Stone</div><div style="left:106.00px;width:600px;text-align:right;top:468.00px;height:10px;line-height:10px;font-size:8.5px;font-weight:normal;color:#1a1a1a;font-family:'Liberation Sans', sans-serif;white-space:nowrap;transform:scaleX(0.83);transform-origin:100% 50%;">0%</div><div style="left:711.50px;top:468.00px;height:10px;line-height:10px;font-size:8.5px;font-weight:normal;color:#1a1a1a;font-family:'Liberation Sans', sans-serif;white-space:nowrap;transform:scaleX(0.83);transform-origin:0 50%;">06-Nov-23</div><div style="left:756.00px;top:468.00px;height:10px;line-height:10px;font-size:8.5px;font-weight:normal;color:#1a1a1a;font-family:'Liberation Sans', sans-serif;white-space:nowrap;transform:scaleX(0.83);transform-origin:0 50%;">29-Dec-23*</div><div style="left:335.60px;top:479.25px;width:460.40px;height:12.05px;background:#0000a0;"></div><div style="left:335.60px;top:490.50px;width:460.40px;height:0.80px;background:#b8b8e0;"></div><div style="left:337.80px;top:482.67px;width:5.00px;height:5.00px;background:#f4f4f4;"></div><div style="left:338.80px;top:484.57px;width:3.00px;height:1.20px;background:#444;"></div><div style="left:350.00px;top:481.00px;height:10px;line-height:10px;font-size:8.9px;font-weight:bold;color:#f0f0ff;font-family:'Liberation Sans', sans-serif;white-space:nowrap;transform:scaleX(0.83);transform-origin:0 50%;">BELOW GRADE ELECTRICAL</div><div style="left:106.00px;width:600px;text-align:right;top:480.00px;height:10px;line-height:10px;font-size:8.5px;font-weight:normal;color:#f0f0ff;font-family:'Liberation Sans', sans-serif;white-space:nowrap;transform:scaleX(0.83);transform-origin:100% 50%;">0%</div><div style="left:711.50px;top:480.00px;height:10px;line-height:10px;font-size:8.5px;font-weight:normal;color:#f0f0ff;font-family:'Liberation Sans', sans-serif;white-space:nowrap;transform:scaleX(0.83);transform-origin:0 50%;">12-Jun-23</div><div style="left:756.00px;top:480.00px;height:10px;line-height:10px;font-size:8.5px;font-weight:normal;color:#f0f0ff;font-family:'Liberation Sans', sans-serif;white-space:nowrap;transform:scaleX(0.83);transform-origin:0 50%;">11-Aug-23</div><div style="left:642.50px;top:479.25px;width:1.00px;height:12.05px;background:#8080d0;"></div><div style="left:708.80px;top:479.25px;width:1.00px;height:12.05px;background:#8080d0;"></div><div style="left:753.30px;top:479.25px;width:1.00px;height:12.05px;background:#8080d0;"></div><div style="left:335.60px;top:491.30px;width:3.10px;height:12.05px;background:#0000a0;"></div><div style="left:339.00px;top:491.30px;width:457.00px;height:12.05px;background:#fff;border-top:1px solid #d8d8d8;box-sizing:border-box;"></div><div style="left:446.20px;top:491.30px;width:1.00px;height:12.05px;background:#d6d6d6;"></div><div style="left:642.50px;top:491.30px;width:1.00px;height:12.05px;background:#d6d6d6;"></div><div style="left:708.80px;top:491.30px;width:1.00px;height:12.05px;background:#d6d6d6;"></div><div style="left:753.30px;top:491.30px;width:1.00px;height:12.05px;background:#d6d6d6;"></div><div style="left:352.80px;top:492.00px;height:10px;line-height:10px;font-size:8.5px;font-weight:normal;color:#1a1a1a;font-family:'Liberation Sans', sans-serif;white-space:nowrap;transform:scaleX(0.83);transform-origin:0 50%;">J012N-2CN-2020</div><div style="left:449.00px;top:492.00px;height:10px;line-height:10px;font-size:8.5px;font-weight:normal;color:#1a1a1a;font-family:'Liberation Sans', sans-serif;white-space:nowrap;transform:scaleX(0.83);transform-origin:0 50%;">Install Raceway</div><div style="left:106.00px;width:600px;text-align:right;top:492.00px;height:10px;line-height:10px;font-size:8.5px;font-weight:normal;color:#1a1a1a;font-family:'Liberation Sans', sans-serif;white-space:nowrap;transform:scaleX(0.83);transform-origin:100% 50%;">0%</div><div style="left:711.50px;top:492.00px;height:10px;line-height:10px;font-size:8.5px;font-weight:normal;color:#1a1a1a;font-family:'Liberation Sans', sans-serif;white-space:nowrap;transform:scaleX(0.83);transform-origin:0 50%;">12-Jun-23</div><div style="left:756.00px;top:492.00px;height:10px;line-height:10px;font-size:8.5px;font-weight:normal;color:#1a1a1a;font-family:'Liberation Sans', sans-serif;white-space:nowrap;transform:scaleX(0.83);transform-origin:0 50%;">11-Aug-23</div><div style="left:335.60px;top:503.35px;width:3.10px;height:12.05px;background:#0000a0;"></div><div style="left:339.00px;top:503.35px;width:457.00px;height:12.05px;background:#fff;border-top:1px solid #d8d8d8;box-sizing:border-box;"></div><div style="left:446.20px;top:503.35px;width:1.00px;height:12.05px;background:#d6d6d6;"></div><div style="left:642.50px;top:503.35px;width:1.00px;height:12.05px;background:#d6d6d6;"></div><div style="left:708.80px;top:503.35px;width:1.00px;height:12.05px;background:#d6d6d6;"></div><div style="left:753.30px;top:503.35px;width:1.00px;height:12.05px;background:#d6d6d6;"></div><div style="left:352.80px;top:504.00px;height:10px;line-height:10px;font-size:8.5px;font-weight:normal;color:#1a1a1a;font-family:'Liberation Sans', sans-serif;white-space:nowrap;transform:scaleX(0.83);transform-origin:0 50%;">J012N-2CN-2010</div><div style="left:449.00px;top:504.00px;height:10px;line-height:10px;font-size:8.5px;font-weight:normal;color:#1a1a1a;font-family:'Liberation Sans', sans-serif;white-space:nowrap;transform:scaleX(0.83);transform-origin:0 50%;">Install Grounding</div><div style="left:106.00px;width:600px;text-align:right;top:504.00px;height:10px;line-height:10px;font-size:8.5px;font-weight:normal;color:#1a1a1a;font-family:'Liberation Sans', sans-serif;white-space:nowrap;transform:scaleX(0.83);transform-origin:100% 50%;">0%</div><div style="left:711.50px;top:504.00px;height:10px;line-height:10px;font-size:8.5px;font-weight:normal;color:#1a1a1a;font-family:'Liberation Sans', sans-serif;white-space:nowrap;transform:scaleX(0.83);transform-origin:0 50%;">12-Jun-23</div><div style="left:756.00px;top:504.00px;height:10px;line-height:10px;font-size:8.5px;font-weight:normal;color:#1a1a1a;font-family:'Liberation Sans', sans-serif;white-space:nowrap;transform:scaleX(0.83);transform-origin:0 50%;">11-Aug-23</div><div style="left:335.60px;top:515.40px;width:460.40px;height:12.05px;background:#0000a0;"></div><div style="left:335.60px;top:526.65px;width:460.40px;height:0.80px;background:#b8b8e0;"></div><div style="left:337.80px;top:518.82px;width:5.00px;height:5.00px;background:#f4f4f4;"></div><div style="left:338.80px;top:520.72px;width:3.00px;height:1.20px;background:#444;"></div><div style="left:350.00px;top:517.00px;height:10px;line-height:10px;font-size:8.9px;font-weight:bold;color:#f0f0ff;font-family:'Liberation Sans', sans-serif;white-space:nowrap;transform:scaleX(0.83);transform-origin:0 50%;">ABOVE GRADE ELECTRICAL</div><div style="left:106.00px;width:600px;text-align:right;top:517.00px;height:10px;line-height:10px;font-size:8.5px;font-weight:normal;color:#f0f0ff;font-family:'Liberation Sans', sans-serif;white-space:nowrap;transform:scaleX(0.83);transform-origin:100% 50%;">0%</div><div style="left:711.50px;top:517.00px;height:10px;line-height:10px;font-size:8.5px;font-weight:normal;color:#f0f0ff;font-family:'Liberation Sans', sans-serif;white-space:nowrap;transform:scaleX(0.83);transform-origin:0 50%;">26-Jun-23</div><div style="left:756.00px;top:517.00px;height:10px;line-height:10px;font-size:8.5px;font-weight:normal;color:#f0f0ff;font-family:'Liberation Sans', sans-serif;white-space:nowrap;transform:scaleX(0.83);transform-origin:0 50%;">22-Dec-23</div><div style="left:642.50px;top:515.40px;width:1.00px;height:12.05px;background:#8080d0;"></div><div style="left:708.80px;top:515.40px;width:1.00px;height:12.05px;background:#8080d0;"></div><div style="left:753.30px;top:515.40px;width:1.00px;height:12.05px;background:#8080d0;"></div><div style="left:335.60px;top:527.45px;width:3.10px;height:12.05px;background:#0000a0;"></div><div style="left:339.00px;top:527.45px;width:457.00px;height:12.05px;background:#fff;border-top:1px solid #d8d8d8;box-sizing:border-box;"></div><div style="left:446.20px;top:527.45px;width:1.00px;height:12.05px;background:#d6d6d6;"></div><div style="left:642.50px;top:527.45px;width:1.00px;height:12.05px;background:#d6d6d6;"></div><div style="left:708.80px;top:527.45px;width:1.00px;height:12.05px;background:#d6d6d6;"></div><div style="left:753.30px;top:527.45px;width:1.00px;height:12.05px;background:#d6d6d6;"></div><div style="left:352.80px;top:529.00px;height:10px;line-height:10px;font-size:8.5px;font-weight:normal;color:#1a1a1a;font-family:'Liberation Sans', sans-serif;white-space:nowrap;transform:scaleX(0.83);transform-origin:0 50%;">J012N-2CN-1030</div><div style="left:449.00px;top:529.00px;height:10px;line-height:10px;font-size:8.5px;font-weight:normal;color:#1a1a1a;font-family:'Liberation Sans', sans-serif;white-space:nowrap;transform:scaleX(0.83);transform-origin:0 50%;">Set Structural Steel</div><div style="left:106.00px;width:600px;text-align:right;top:529.00px;height:10px;line-height:10px;font-size:8.5px;font-weight:normal;color:#1a1a1a;font-family:'Liberation Sans', sans-serif;white-space:nowrap;transform:scaleX(0.83);transform-origin:100% 50%;">0%</div><div style="left:711.50px;top:529.00px;height:10px;line-height:10px;font-size:8.5px;font-weight:normal;color:#1a1a1a;font-family:'Liberation Sans', sans-serif;white-space:nowrap;transform:scaleX(0.83);transform-origin:0 50%;">24-Jul-23</div><div style="left:756.00px;top:529.00px;height:10px;line-height:10px;font-size:8.5px;font-weight:normal;color:#1a1a1a;font-family:'Liberation Sans', sans-serif;white-space:nowrap;transform:scaleX(0.83);transform-origin:0 50%;">25-Aug-23</div><div style="left:335.60px;top:539.50px;width:3.10px;height:12.05px;background:#0000a0;"></div><div style="left:339.00px;top:539.50px;width:457.00px;height:12.05px;background:#fff;border-top:1px solid #d8d8d8;box-sizing:border-box;"></div><div style="left:446.20px;top:539.50px;width:1.00px;height:12.05px;background:#d6d6d6;"></div><div style="left:642.50px;top:539.50px;width:1.00px;height:12.05px;background:#d6d6d6;"></div><div style="left:708.80px;top:539.50px;width:1.00px;height:12.05px;background:#d6d6d6;"></div><div style="left:753.30px;top:539.50px;width:1.00px;height:12.05px;background:#d6d6d6;"></div><div style="left:352.80px;top:541.00px;height:10px;line-height:10px;font-size:8.5px;font-weight:normal;color:#1a1a1a;font-family:'Liberation Sans', sans-serif;white-space:nowrap;transform:scaleX(0.83);transform-origin:0 50%;">J012N-2CN-1020</div><div style="left:449.00px;top:541.00px;height:10px;line-height:10px;font-size:8.5px;font-weight:normal;color:#1a1a1a;font-family:'Liberation Sans', sans-serif;white-space:nowrap;transform:scaleX(0.83);transform-origin:0 50%;">Set Equipment</div><div style="left:106.00px;width:600px;text-align:right;top:541.00px;height:10px;line-height:10px;font-size:8.5px;font-weight:normal;color:#1a1a1a;font-family:'Liberation Sans', sans-serif;white-space:nowrap;transform:scaleX(0.83);transform-origin:100% 50%;">0%</div><div style="left:711.50px;top:541.00px;height:10px;line-height:10px;font-size:8.5px;font-weight:normal;color:#1a1a1a;font-family:'Liberation Sans', sans-serif;white-space:nowrap;transform:scaleX(0.83);transform-origin:0 50%;">28-Aug-23</div><div style="left:756.00px;top:541.00px;height:10px;line-height:10px;font-size:8.5px;font-weight:normal;color:#1a1a1a;font-family:'Liberation Sans', sans-serif;white-space:nowrap;transform:scaleX(0.83);transform-origin:0 50%;">17-Nov-23</div><div style="left:335.60px;top:551.55px;width:3.10px;height:12.05px;background:#0000a0;"></div><div style="left:339.00px;top:551.55px;width:457.00px;height:12.05px;background:#fff;border-top:1px solid #d8d8d8;box-sizing:border-box;"></div><div style="left:446.20px;top:551.55px;width:1.00px;height:12.05px;background:#d6d6d6;"></div><div style="left:642.50px;top:551.55px;width:1.00px;height:12.05px;background:#d6d6d6;"></div><div style="left:708.80px;top:551.55px;width:1.00px;height:12.05px;background:#d6d6d6;"></div><div style="left:753.30px;top:551.55px;width:1.00px;height:12.05px;background:#d6d6d6;"></div><div style="left:352.80px;top:553.00px;height:10px;line-height:10px;font-size:8.5px;font-weight:normal;color:#1a1a1a;font-family:'Liberation Sans', sans-serif;white-space:nowrap;transform:scaleX(0.83);transform-origin:0 50%;">J012N-2CN-1050</div><div style="left:449.00px;top:553.00px;height:10px;line-height:10px;font-size:8.5px;font-weight:normal;color:#1a1a1a;font-family:'Liberation Sans', sans-serif;white-space:nowrap;transform:scaleX(0.83);transform-origin:0 50%;">Install Cable</div><div style="left:106.00px;width:600px;text-align:right;top:553.00px;height:10px;line-height:10px;font-size:8.5px;font-weight:normal;color:#1a1a1a;font-family:'Liberation Sans', sans-serif;white-space:nowrap;transform:scaleX(0.83);transform-origin:100% 50%;">0%</div><div style="left:711.50px;top:553.00px;height:10px;line-height:10px;font-size:8.5px;font-weight:normal;color:#1a1a1a;font-family:'Liberation Sans', sans-serif;white-space:nowrap;transform:scaleX(0.83);transform-origin:0 50%;">09-Oct-23</div><div style="left:756.00px;top:553.00px;height:10px;line-height:10px;font-size:8.5px;font-weight:normal;color:#1a1a1a;font-family:'Liberation Sans', sans-serif;white-space:nowrap;transform:scaleX(0.83);transform-origin:0 50%;">01-Dec-23</div><div style="left:335.60px;top:563.60px;width:3.10px;height:12.05px;background:#0000a0;"></div><div style="left:339.00px;top:563.60px;width:457.00px;height:12.05px;background:#fff;border-top:1px solid #d8d8d8;box-sizing:border-box;"></div><div style="left:446.20px;top:563.60px;width:1.00px;height:12.05px;background:#d6d6d6;"></div><div style="left:642.50px;top:563.60px;width:1.00px;height:12.05px;background:#d6d6d6;"></div><div style="left:708.80px;top:563.60px;width:1.00px;height:12.05px;background:#d6d6d6;"></div><div style="left:753.30px;top:563.60px;width:1.00px;height:12.05px;background:#d6d6d6;"></div><div style="left:352.80px;top:565.00px;height:10px;line-height:10px;font-size:8.5px;font-weight:normal;color:#1a1a1a;font-family:'Liberation Sans', sans-serif;white-space:nowrap;transform:scaleX(0.83);transform-origin:0 50%;">J012N-2CN-1060</div><div style="left:449.00px;top:565.00px;height:10px;line-height:10px;font-size:8.5px;font-weight:normal;color:#1a1a1a;font-family:'Liberation Sans', sans-serif;white-space:nowrap;transform:scaleX(0.83);transform-origin:0 50%;">Install Bus Works</div><div style="left:106.00px;width:600px;text-align:right;top:565.00px;height:10px;line-height:10px;font-size:8.5px;font-weight:normal;color:#1a1a1a;font-family:'Liberation Sans', sans-serif;white-space:nowrap;transform:scaleX(0.83);transform-origin:100% 50%;">0%</div><div style="left:711.50px;top:565.00px;height:10px;line-height:10px;font-size:8.5px;font-weight:normal;color:#1a1a1a;font-family:'Liberation Sans', sans-serif;white-space:nowrap;transform:scaleX(0.83);transform-origin:0 50%;">26-Jun-23</div><div style="left:756.00px;top:565.00px;height:10px;line-height:10px;font-size:8.5px;font-weight:normal;color:#1a1a1a;font-family:'Liberation Sans', sans-serif;white-space:nowrap;transform:scaleX(0.83);transform-origin:0 50%;">01-Sep-23</div><div style="left:335.60px;top:575.65px;width:3.10px;height:12.05px;background:#0000a0;"></div><div style="left:339.00px;top:575.65px;width:457.00px;height:12.05px;background:#fff;border-top:1px solid #d8d8d8;box-sizing:border-box;"></div><div style="left:446.20px;top:575.65px;width:1.00px;height:12.05px;background:#d6d6d6;"></div><div style="left:642.50px;top:575.65px;width:1.00px;height:12.05px;background:#d6d6d6;"></div><div style="left:708.80px;top:575.65px;width:1.00px;height:12.05px;background:#d6d6d6;"></div><div style="left:753.30px;top:575.65px;width:1.00px;height:12.05px;background:#d6d6d6;"></div><div style="left:352.80px;top:577.00px;height:10px;line-height:10px;font-size:8.5px;font-weight:normal;color:#1a1a1a;font-family:'Liberation Sans', sans-serif;white-space:nowrap;transform:scaleX(0.83);transform-origin:0 50%;">J012N-2CN-1040</div><div style="left:449.00px;top:577.00px;height:10px;line-height:10px;font-size:8.5px;font-weight:normal;color:#1a1a1a;font-family:'Liberation Sans', sans-serif;white-space:nowrap;transform:scaleX(0.83);transform-origin:0 50%;">Install Lighting</div><div style="left:106.00px;width:600px;text-align:right;top:577.00px;height:10px;line-height:10px;font-size:8.5px;font-weight:normal;color:#1a1a1a;font-family:'Liberation Sans', sans-serif;white-space:nowrap;transform:scaleX(0.83);transform-origin:100% 50%;">0%</div><div style="left:711.50px;top:577.00px;height:10px;line-height:10px;font-size:8.5px;font-weight:normal;color:#1a1a1a;font-family:'Liberation Sans', sans-serif;white-space:nowrap;transform:scaleX(0.83);transform-origin:0 50%;">04-Dec-23</div><div style="left:756.00px;top:577.00px;height:10px;line-height:10px;font-size:8.5px;font-weight:normal;color:#1a1a1a;font-family:'Liberation Sans', sans-serif;white-space:nowrap;transform:scaleX(0.83);transform-origin:0 50%;">22-Dec-23</div><div style="left:335.60px;top:587.70px;width:3.10px;height:12.05px;background:#0000a0;"></div><div style="left:339.00px;top:587.70px;width:457.00px;height:12.05px;background:#fff;border-top:1px solid #d8d8d8;box-sizing:border-box;"></div><div style="left:446.20px;top:587.70px;width:1.00px;height:12.05px;background:#d6d6d6;"></div><div style="left:642.50px;top:587.70px;width:1.00px;height:12.05px;background:#d6d6d6;"></div><div style="left:708.80px;top:587.70px;width:1.00px;height:12.05px;background:#d6d6d6;"></div><div style="left:753.30px;top:587.70px;width:1.00px;height:12.05px;background:#d6d6d6;"></div><div style="left:352.80px;top:589.00px;height:10px;line-height:10px;font-size:8.5px;font-weight:normal;color:#1a1a1a;font-family:'Liberation Sans', sans-serif;white-space:nowrap;transform:scaleX(0.83);transform-origin:0 50%;">J012N-2CN-1010</div><div style="left:449.00px;top:589.00px;height:10px;line-height:10px;font-size:8.5px;font-weight:normal;color:#1a1a1a;font-family:'Liberation Sans', sans-serif;white-space:nowrap;transform:scaleX(0.83);transform-origin:0 50%;">Install Jumper Works</div><div style="left:106.00px;width:600px;text-align:right;top:589.00px;height:10px;line-height:10px;font-size:8.5px;font-weight:normal;color:#1a1a1a;font-family:'Liberation Sans', sans-serif;white-space:nowrap;transform:scaleX(0.83);transform-origin:100% 50%;">0%</div><div style="left:711.50px;top:589.00px;height:10px;line-height:10px;font-size:8.5px;font-weight:normal;color:#1a1a1a;font-family:'Liberation Sans', sans-serif;white-space:nowrap;transform:scaleX(0.83);transform-origin:0 50%;">25-Sep-23</div><div style="left:756.00px;top:589.00px;height:10px;line-height:10px;font-size:8.5px;font-weight:normal;color:#1a1a1a;font-family:'Liberation Sans', sans-serif;white-space:nowrap;transform:scaleX(0.83);transform-origin:0 50%;">17-Nov-23</div><div style="left:335.60px;top:599.75px;width:460.40px;height:12.05px;background:#0000a0;"></div><div style="left:335.60px;top:611.00px;width:460.40px;height:0.80px;background:#b8b8e0;"></div><div style="left:337.80px;top:603.17px;width:5.00px;height:5.00px;background:#f4f4f4;"></div><div style="left:338.80px;top:605.07px;width:3.00px;height:1.20px;background:#444;"></div><div style="left:350.00px;top:601.00px;height:10px;line-height:10px;font-size:8.9px;font-weight:bold;color:#f0f0ff;font-family:'Liberation Sans', sans-serif;white-space:nowrap;transform:scaleX(0.83);transform-origin:0 50%;">COMMISSIONING</div><div style="left:106.00px;width:600px;text-align:right;top:601.00px;height:10px;line-height:10px;font-size:8.5px;font-weight:normal;color:#f0f0ff;font-family:'Liberation Sans', sans-serif;white-space:nowrap;transform:scaleX(0.83);transform-origin:100% 50%;">0%</div><div style="left:711.50px;top:601.00px;height:10px;line-height:10px;font-size:8.5px;font-weight:normal;color:#f0f0ff;font-family:'Liberation Sans', sans-serif;white-space:nowrap;transform:scaleX(0.83);transform-origin:0 50%;">23-Oct-23</div><div style="left:756.00px;top:601.00px;height:10px;line-height:10px;font-size:8.5px;font-weight:normal;color:#f0f0ff;font-family:'Liberation Sans', sans-serif;white-space:nowrap;transform:scaleX(0.83);transform-origin:0 50%;">18-Mar-24</div><div style="left:642.50px;top:599.75px;width:1.00px;height:12.05px;background:#8080d0;"></div><div style="left:708.80px;top:599.75px;width:1.00px;height:12.05px;background:#8080d0;"></div><div style="left:753.30px;top:599.75px;width:1.00px;height:12.05px;background:#8080d0;"></div><div style="left:335.60px;top:611.80px;width:3.10px;height:12.05px;background:#0000a0;"></div><div style="left:339.00px;top:611.80px;width:457.00px;height:12.05px;background:#fff;border-top:1px solid #d8d8d8;box-sizing:border-box;"></div><div style="left:446.20px;top:611.80px;width:1.00px;height:12.05px;background:#d6d6d6;"></div><div style="left:642.50px;top:611.80px;width:1.00px;height:12.05px;background:#d6d6d6;"></div><div style="left:708.80px;top:611.80px;width:1.00px;height:12.05px;background:#d6d6d6;"></div><div style="left:753.30px;top:611.80px;width:1.00px;height:12.05px;background:#d6d6d6;"></div><div style="left:352.80px;top:613.00px;height:10px;line-height:10px;font-size:8.5px;font-weight:normal;color:#1a1a1a;font-family:'Liberation Sans', sans-serif;white-space:nowrap;transform:scaleX(0.83);transform-origin:0 50%;">J012N-2CM-1110</div><div style="left:449.00px;top:613.00px;height:10px;line-height:10px;font-size:8.5px;font-weight:normal;color:#1a1a1a;font-family:'Liberation Sans', sans-serif;white-space:nowrap;transform:scaleX(0.83);transform-origin:0 50%;">Perform Equipment Testing</div><div style="left:106.00px;width:600px;text-align:right;top:613.00px;height:10px;line-height:10px;font-size:8.5px;font-weight:normal;color:#1a1a1a;font-family:'Liberation Sans', sans-serif;white-space:nowrap;transform:scaleX(0.83);transform-origin:100% 50%;">0%</div><div style="left:711.50px;top:613.00px;height:10px;line-height:10px;font-size:8.5px;font-weight:normal;color:#1a1a1a;font-family:'Liberation Sans', sans-serif;white-space:nowrap;transform:scaleX(0.83);transform-origin:0 50%;">20-Nov-23</div><div style="left:756.00px;top:613.00px;height:10px;line-height:10px;font-size:8.5px;font-weight:normal;color:#1a1a1a;font-family:'Liberation Sans', sans-serif;white-space:nowrap;transform:scaleX(0.83);transform-origin:0 50%;">05-Jan-24</div><div style="left:335.60px;top:623.85px;width:3.10px;height:12.05px;background:#0000a0;"></div><div style="left:339.00px;top:623.85px;width:457.00px;height:12.05px;background:#fff;border-top:1px solid #d8d8d8;box-sizing:border-box;"></div><div style="left:446.20px;top:623.85px;width:1.00px;height:12.05px;background:#d6d6d6;"></div><div style="left:642.50px;top:623.85px;width:1.00px;height:12.05px;background:#d6d6d6;"></div><div style="left:708.80px;top:623.85px;width:1.00px;height:12.05px;background:#d6d6d6;"></div><div style="left:753.30px;top:623.85px;width:1.00px;height:12.05px;background:#d6d6d6;"></div><div style="left:352.80px;top:625.00px;height:10px;line-height:10px;font-size:8.5px;font-weight:normal;color:#1a1a1a;font-family:'Liberation Sans', sans-serif;white-space:nowrap;transform:scaleX(0.83);transform-origin:0 50%;">J012N-2CM-1050</div><div style="left:449.00px;top:625.00px;height:10px;line-height:10px;font-size:8.5px;font-weight:normal;color:#1a1a1a;font-family:'Liberation Sans', sans-serif;white-space:nowrap;transform:scaleX(0.83);transform-origin:0 50%;">Perform Communications Commisioning</div><div style="left:106.00px;width:600px;text-align:right;top:625.00px;height:10px;line-height:10px;font-size:8.5px;font-weight:normal;color:#1a1a1a;font-family:'Liberation Sans', sans-serif;white-space:nowrap;transform:scaleX(0.83);transform-origin:100% 50%;">0%</div><div style="left:711.50px;top:625.00px;height:10px;line-height:10px;font-size:8.5px;font-weight:normal;color:#1a1a1a;font-family:'Liberation Sans', sans-serif;white-space:nowrap;transform:scaleX(0.83);transform-origin:0 50%;">29-Jan-24</div><div style="left:756.00px;top:625.00px;height:10px;line-height:10px;font-size:8.5px;font-weight:normal;color:#1a1a1a;font-family:'Liberation Sans', sans-serif;white-space:nowrap;transform:scaleX(0.83);transform-origin:0 50%;">16-Feb-24</div><div style="left:335.60px;top:635.90px;width:3.10px;height:12.05px;background:#0000a0;"></div><div style="left:339.00px;top:635.90px;width:457.00px;height:12.05px;background:#fff;border-top:1px solid #d8d8d8;box-sizing:border-box;"></div><div style="left:446.20px;top:635.90px;width:1.00px;height:12.05px;background:#d6d6d6;"></div><div style="left:642.50px;top:635.90px;width:1.00px;height:12.05px;background:#d6d6d6;"></div><div style="left:708.80px;top:635.90px;width:1.00px;height:12.05px;background:#d6d6d6;"></div><div style="left:753.30px;top:635.90px;width:1.00px;height:12.05px;background:#d6d6d6;"></div><div style="left:352.80px;top:637.00px;height:10px;line-height:10px;font-size:8.5px;font-weight:normal;color:#1a1a1a;font-family:'Liberation Sans', sans-serif;white-space:nowrap;transform:scaleX(0.83);transform-origin:0 50%;">J012N-2CM-1100</div><div style="left:449.00px;top:637.00px;height:10px;line-height:10px;font-size:8.5px;font-weight:normal;color:#1a1a1a;font-family:'Liberation Sans', sans-serif;white-space:nowrap;transform:scaleX(0.83);transform-origin:0 50%;">Perform Disconnect Switch - Final Adjustment</div><div style="left:106.00px;width:600px;text-align:right;top:637.00px;height:10px;line-height:10px;font-size:8.5px;font-weight:normal;color:#1a1a1a;font-family:'Liberation Sans', sans-serif;white-space:nowrap;transform:scaleX(0.83);transform-origin:100% 50%;">0%</div><div style="left:711.50px;top:637.00px;height:10px;line-height:10px;font-size:8.5px;font-weight:normal;color:#1a1a1a;font-family:'Liberation Sans', sans-serif;white-space:nowrap;transform:scaleX(0.83);transform-origin:0 50%;">23-Oct-23</div><div style="left:756.00px;top:637.00px;height:10px;line-height:10px;font-size:8.5px;font-weight:normal;color:#1a1a1a;font-family:'Liberation Sans', sans-serif;white-space:nowrap;transform:scaleX(0.83);transform-origin:0 50%;">24-Oct-23</div><div style="left:335.60px;top:647.95px;width:3.10px;height:12.05px;background:#0000a0;"></div><div style="left:339.00px;top:647.95px;width:457.00px;height:12.05px;background:#fff;border-top:1px solid #d8d8d8;box-sizing:border-box;"></div><div style="left:446.20px;top:647.95px;width:1.00px;height:12.05px;background:#d6d6d6;"></div><div style="left:642.50px;top:647.95px;width:1.00px;height:12.05px;background:#d6d6d6;"></div><div style="left:708.80px;top:647.95px;width:1.00px;height:12.05px;background:#d6d6d6;"></div><div style="left:753.30px;top:647.95px;width:1.00px;height:12.05px;background:#d6d6d6;"></div><div style="left:352.80px;top:649.00px;height:10px;line-height:10px;font-size:8.5px;font-weight:normal;color:#1a1a1a;font-family:'Liberation Sans', sans-serif;white-space:nowrap;transform:scaleX(0.83);transform-origin:0 50%;">J012N-2CM-1060</div><div style="left:449.00px;top:649.00px;height:10px;line-height:10px;font-size:8.5px;font-weight:normal;color:#1a1a1a;font-family:'Liberation Sans', sans-serif;white-space:nowrap;transform:scaleX(0.83);transform-origin:0 50%;">Perform Schematic Functional Check</div><div style="left:106.00px;width:600px;text-align:right;top:649.00px;height:10px;line-height:10px;font-size:8.5px;font-weight:normal;color:#1a1a1a;font-family:'Liberation Sans', sans-serif;white-space:nowrap;transform:scaleX(0.83);transform-origin:100% 50%;">0%</div><div style="left:711.50px;top:649.00px;height:10px;line-height:10px;font-size:8.5px;font-weight:normal;color:#1a1a1a;font-family:'Liberation Sans', sans-serif;white-space:nowrap;transform:scaleX(0.83);transform-origin:0 50%;">08-Jan-24</div><div style="left:756.00px;top:649.00px;height:10px;line-height:10px;font-size:8.5px;font-weight:normal;color:#1a1a1a;font-family:'Liberation Sans', sans-serif;white-space:nowrap;transform:scaleX(0.83);transform-origin:0 50%;">02-Feb-24</div><div style="left:335.60px;top:660.00px;width:3.10px;height:12.05px;background:#0000a0;"></div><div style="left:339.00px;top:660.00px;width:457.00px;height:12.05px;background:#fff;border-top:1px solid #d8d8d8;box-sizing:border-box;"></div><div style="left:446.20px;top:660.00px;width:1.00px;height:12.05px;background:#d6d6d6;"></div><div style="left:642.50px;top:660.00px;width:1.00px;height:12.05px;background:#d6d6d6;"></div><div style="left:708.80px;top:660.00px;width:1.00px;height:12.05px;background:#d6d6d6;"></div><div style="left:753.30px;top:660.00px;width:1.00px;height:12.05px;background:#d6d6d6;"></div><div style="left:352.80px;top:661.00px;height:10px;line-height:10px;font-size:8.5px;font-weight:normal;color:#1a1a1a;font-family:'Liberation Sans', sans-serif;white-space:nowrap;transform:scaleX(0.83);transform-origin:0 50%;">J012N-2CM-1080</div><div style="left:449.00px;top:661.00px;height:10px;line-height:10px;font-size:8.5px;font-weight:normal;color:#1a1a1a;font-family:'Liberation Sans', sans-serif;white-space:nowrap;transform:scaleX(0.83);transform-origin:0 50%;">Perform End to End testing</div><div style="left:106.00px;width:600px;text-align:right;top:661.00px;height:10px;line-height:10px;font-size:8.5px;font-weight:normal;color:#1a1a1a;font-family:'Liberation Sans', sans-serif;white-space:nowrap;transform:scaleX(0.83);transform-origin:100% 50%;">0%</div><div style="left:711.50px;top:661.00px;height:10px;line-height:10px;font-size:8.5px;font-weight:normal;color:#1a1a1a;font-family:'Liberation Sans', sans-serif;white-space:nowrap;transform:scaleX(0.83);transform-origin:0 50%;">19-Feb-24</div><div style="left:756.00px;top:661.00px;height:10px;line-height:10px;font-size:8.5px;font-weight:normal;color:#1a1a1a;font-family:'Liberation Sans', sans-serif;white-space:nowrap;transform:scaleX(0.83);transform-origin:0 50%;">15-Mar-24</div><div style="left:335.60px;top:672.05px;width:3.10px;height:12.05px;background:#0000a0;"></div><div style="left:339.00px;top:672.05px;width:457.00px;height:12.05px;background:#fff;border-top:1px solid #d8d8d8;box-sizing:border-box;"></div><div style="left:446.20px;top:672.05px;width:1.00px;height:12.05px;background:#d6d6d6;"></div><div style="left:642.50px;top:672.05px;width:1.00px;height:12.05px;background:#d6d6d6;"></div><div style="left:708.80px;top:672.05px;width:1.00px;height:12.05px;background:#d6d6d6;"></div><div style="left:753.30px;top:672.05px;width:1.00px;height:12.05px;background:#d6d6d6;"></div><div style="left:352.80px;top:673.00px;height:10px;line-height:10px;font-size:8.5px;font-weight:normal;color:#1a1a1a;font-family:'Liberation Sans', sans-serif;white-space:nowrap;transform:scaleX(0.83);transform-origin:0 50%;">J012N-2CM-1070</div><div style="left:449.00px;top:673.00px;height:10px;line-height:10px;font-size:8.5px;font-weight:normal;color:#1a1a1a;font-family:'Liberation Sans', sans-serif;white-space:nowrap;transform:scaleX(0.83);transform-origin:0 50%;">Perform Energization Switching</div><div style="left:106.00px;width:600px;text-align:right;top:673.00px;height:10px;line-height:10px;font-size:8.5px;font-weight:normal;color:#1a1a1a;font-family:'Liberation Sans', sans-serif;white-space:nowrap;transform:scaleX(0.83);transform-origin:100% 50%;">0%</div><div style="left:711.50px;top:673.00px;height:10px;line-height:10px;font-size:8.5px;font-weight:normal;color:#1a1a1a;font-family:'Liberation Sans', sans-serif;white-space:nowrap;transform:scaleX(0.83);transform-origin:0 50%;">18-Mar-24</div><div style="left:756.00px;top:673.00px;height:10px;line-height:10px;font-size:8.5px;font-weight:normal;color:#1a1a1a;font-family:'Liberation Sans', sans-serif;white-space:nowrap;transform:scaleX(0.83);transform-origin:0 50%;">18-Mar-24</div><div style="left:796.00px;top:336.50px;width:4.50px;height:349.00px;background:#e2e2e2;"></div><div style="left:795.00px;top:336.50px;width:1.00px;height:26.00px;background:#333;"></div><div style="left:799.00px;top:336.50px;width:1.00px;height:349.00px;background:#a6a6a6;"></div><div style="left:800.00px;top:345.00px;width:1.00px;height:17.50px;background:#333;"></div><div style="left:800.50px;top:336.50px;width:429.30px;height:349.00px;overflow:hidden;"><div style="left:0.00px;top:0.00px;width:429.30px;height:9.00px;background:#efefef;"></div><div style="left:0.00px;top:8.50px;width:429.30px;height:1.00px;background:#555;"></div><div style="left:0.00px;top:9.50px;width:429.30px;height:7.50px;background:#efefef;"></div><div style="left:0.00px;top:16.80px;width:429.30px;height:1.00px;background:#555;"></div><div style="left:0.00px;top:17.80px;width:429.30px;height:8.00px;background:#fafafa;"></div><div style="left:0.00px;top:25.50px;width:429.30px;height:1.00px;background:#333;"></div><div style="left:-56.91px;width:400px;text-align:center;top:9.50px;height:7px;line-height:7px;font-size:7px;font-weight:normal;color:#222;font-family:'Liberation Sans', sans-serif;white-space:nowrap;-webkit-text-stroke:0.15px #222;">2023</div><div style="left:299.50px;top:8.50px;width:1.00px;height:9.00px;background:#333;"></div><div style="left:-13.50px;top:17.50px;width:1.00px;height:8.50px;background:#333;"></div><div style="left:-200.11px;width:400px;text-align:center;top:18.50px;height:7px;line-height:7px;font-size:6.8px;font-weight:normal;color:#222;font-family:'Liberation Sans', sans-serif;white-space:nowrap;-webkit-text-stroke:0.15px #222;">Jan</div><div style="left:12.50px;top:17.50px;width:1.00px;height:8.50px;background:#333;"></div><div style="left:-174.95px;width:400px;text-align:center;top:18.50px;height:7px;line-height:7px;font-size:6.8px;font-weight:normal;color:#222;font-family:'Liberation Sans', sans-serif;white-space:nowrap;-webkit-text-stroke:0.15px #222;">Feb</div><div style="left:36.50px;top:17.50px;width:1.00px;height:8.50px;background:#333;"></div><div style="left:-149.55px;width:400px;text-align:center;top:18.50px;height:7px;line-height:7px;font-size:6.8px;font-weight:normal;color:#222;font-family:'Liberation Sans', sans-serif;white-space:nowrap;-webkit-text-stroke:0.15px #222;">Mar</div><div style="left:63.50px;top:17.50px;width:1.00px;height:8.50px;background:#333;"></div><div style="left:-123.15px;width:400px;text-align:center;top:18.50px;height:7px;line-height:7px;font-size:6.8px;font-weight:normal;color:#222;font-family:'Liberation Sans', sans-serif;white-space:nowrap;-webkit-text-stroke:0.15px #222;">Apr</div><div style="left:89.50px;top:17.50px;width:1.00px;height:8.50px;background:#333;"></div><div style="left:-97.15px;width:400px;text-align:center;top:18.50px;height:7px;line-height:7px;font-size:6.8px;font-weight:normal;color:#222;font-family:'Liberation Sans', sans-serif;white-space:nowrap;-webkit-text-stroke:0.15px #222;">May</div><div style="left:115.50px;top:17.50px;width:1.00px;height:8.50px;background:#333;"></div><div style="left:-71.05px;width:400px;text-align:center;top:18.50px;height:7px;line-height:7px;font-size:6.8px;font-weight:normal;color:#222;font-family:'Liberation Sans', sans-serif;white-space:nowrap;-webkit-text-stroke:0.15px #222;">Jun</div><div style="left:141.50px;top:17.50px;width:1.00px;height:8.50px;background:#333;"></div><div style="left:-44.88px;width:400px;text-align:center;top:18.50px;height:7px;line-height:7px;font-size:6.8px;font-weight:normal;color:#222;font-family:'Liberation Sans', sans-serif;white-space:nowrap;-webkit-text-stroke:0.15px #222;">Jul</div><div style="left:167.50px;top:17.50px;width:1.00px;height:8.50px;background:#333;"></div><div style="left:-18.12px;width:400px;text-align:center;top:18.50px;height:7px;line-height:7px;font-size:6.8px;font-weight:normal;color:#222;font-family:'Liberation Sans', sans-serif;white-space:nowrap;-webkit-text-stroke:0.15px #222;">Aug</div><div style="left:195.50px;top:17.50px;width:1.00px;height:8.50px;background:#333;"></div><div style="left:8.00px;width:400px;text-align:center;top:18.50px;height:7px;line-height:7px;font-size:6.8px;font-weight:normal;color:#222;font-family:'Liberation Sans', sans-serif;white-space:nowrap;-webkit-text-stroke:0.15px #222;">Sep</div><div style="left:219.50px;top:17.50px;width:1.00px;height:8.50px;background:#333;"></div><div style="left:33.75px;width:400px;text-align:center;top:18.50px;height:7px;line-height:7px;font-size:6.8px;font-weight:normal;color:#222;font-family:'Liberation Sans', sans-serif;white-space:nowrap;-webkit-text-stroke:0.15px #222;">Oct</div><div style="left:246.50px;top:17.50px;width:1.00px;height:8.50px;background:#333;"></div><div style="left:59.90px;width:400px;text-align:center;top:18.50px;height:7px;line-height:7px;font-size:6.8px;font-weight:normal;color:#222;font-family:'Liberation Sans', sans-serif;white-space:nowrap;-webkit-text-stroke:0.15px #222;">Nov</div><div style="left:272.50px;top:17.50px;width:1.00px;height:8.50px;background:#333;"></div><div style="left:86.40px;width:400px;text-align:center;top:18.50px;height:7px;line-height:7px;font-size:6.8px;font-weight:normal;color:#222;font-family:'Liberation Sans', sans-serif;white-space:nowrap;-webkit-text-stroke:0.15px #222;">Dec</div><div style="left:299.50px;top:17.50px;width:1.00px;height:8.50px;background:#333;"></div><div style="left:112.95px;width:400px;text-align:center;top:18.50px;height:7px;line-height:7px;font-size:6.8px;font-weight:normal;color:#222;font-family:'Liberation Sans', sans-serif;white-space:nowrap;-webkit-text-stroke:0.15px #222;">Jan</div><div style="left:325.50px;top:17.50px;width:1.00px;height:8.50px;background:#333;"></div><div style="left:138.40px;width:400px;text-align:center;top:18.50px;height:7px;line-height:7px;font-size:6.8px;font-weight:normal;color:#222;font-family:'Liberation Sans', sans-serif;white-space:nowrap;-webkit-text-stroke:0.15px #222;">Feb</div><div style="left:350.50px;top:17.50px;width:1.00px;height:8.50px;background:#333;"></div><div style="left:164.35px;width:400px;text-align:center;top:18.50px;height:7px;line-height:7px;font-size:6.8px;font-weight:normal;color:#222;font-family:'Liberation Sans', sans-serif;white-space:nowrap;-webkit-text-stroke:0.15px #222;">Mar</div><div style="left:377.50px;top:17.50px;width:1.00px;height:8.50px;background:#333;"></div><div style="left:190.45px;width:400px;text-align:center;top:18.50px;height:7px;line-height:7px;font-size:6.8px;font-weight:normal;color:#222;font-family:'Liberation Sans', sans-serif;white-space:nowrap;-webkit-text-stroke:0.15px #222;">Apr</div><div style="left:402.50px;top:17.50px;width:1.00px;height:8.50px;background:#333;"></div><div style="left:216.30px;width:400px;text-align:center;top:18.50px;height:7px;line-height:7px;font-size:6.8px;font-weight:normal;color:#222;font-family:'Liberation Sans', sans-serif;white-space:nowrap;-webkit-text-stroke:0.15px #222;">May</div><svg style="left:0.00px;top:0.00px;width:429.29999999999995px;height:349.0px" viewBox="800.5 336.5 429.29999999999995 349.0"><path d="M813.30 363V685.5M837.20 363V685.5M864.10 363V685.5M890.00 363V685.5M916.10 363V685.5M942.20 363V685.5M968.45 363V685.5M995.70 363V685.5M1020.70 363V685.5M1047.20 363V685.5M1073.00 363V685.5M1100.20 363V685.5M1126.10 363V685.5M1151.10 363V685.5M1178.00 363V685.5M1203.30 363V685.5M800.5 431.5H1229.8M800.5 491.5H1229.8M800.5 551.8H1229.8M800.5 611.8H1229.8M800.5 672.2H1229.8" stroke="#c4c4c4" stroke-width="1" stroke-dasharray="2 2.5" fill="none"/></svg><svg style="left:196.00px;top:230.50px;width:5px;height:4.6px" viewBox="0 0 5 4.6"><path d="M5 0L0 2.3L5 4.6Z" fill="#111"/></svg><svg style="left:0.00px;top:0.00px;width:429.29999999999995px;height:349.0px" viewBox="800.5 336.5 429.29999999999995 349.0"><path d="M890.6 427V429.4H917.5V434M942.5 427V429.4H953.7V434M906.5 452V454.8H917.5M960.5 441.9H983.7V538.6M996.9 463.8V466.2H1043.3M978.2 491.3H1043.3M978.2 503.4H1043.3M1019.6 503.4V551M1006.2 538.6H1067.2V551M1067.6 551H1115.8V622.3M1074.2 562.2H1115.8M938.3 572.5V574.5H1007.8M1064 620.5V622.3H1115.4M1042.3 645.7V646.6H1097.5" stroke="#111" stroke-width="1" stroke-dasharray="2 2" fill="none"/><path d="M917.5 441.9V508.9M908.5 441.9H917.5M917.5 496.5H922M917.5 508.6H922M953.7 441.9V532.5M953.7 441.9H960.5M953.7 532.5H958M899.4 438.1V443.8H906.3V446.3M971.8 460.6V503.4M971.8 491.3H978.2M971.8 503.4H978.2M971.8 460.6H976M1043.3 466.2V588H1062.3V590.7M1043.3 471.8H1048M983.7 538.6V544.8H988M983.7 538.6H990.3M990.3 538.6H1006.2V593.4H1012M992.3 551H1019.6V557.2H1024M1055.6 551V617.4H1060M1055.6 551H1062.5M1067.6 551V580.8H1072M1067.6 562.2H1074.2M1016.1 598H1031.4V642.3H1036M1097.7 622.3V653H1102M1115.4 622.3V648.4H1106.4M1115.4 628.8H1120M1133.4 634V665.3H1138M1133.4 634H1140.6M1164.3 668.3V670.5H1157.9V677.5H1162M1006.2 569.3H1000" stroke="#222" stroke-width="1" fill="none"/></svg><div style="left:0.00px;top:72.85px;width:89.80px;height:6.00px;background:#0010e0;"></div><div style="left:89.80px;top:72.85px;width:55.17px;height:6.00px;background:#80ef80;border:1px solid #202020;box-sizing:border-box;"></div><div style="left:151.27px;top:70.50px;height:10px;line-height:10px;font-size:8.5px;font-weight:normal;color:#1a1a1a;font-family:'Liberation Sans', sans-serif;white-space:nowrap;transform:scaleX(0.83);transform-origin:0 50%;">03-Jul-23</div><div style="left:89.52px;top:84.90px;width:52.88px;height:6.00px;background:#80ef80;border:1px solid #202020;box-sizing:border-box;"></div><div style="left:-519.08px;width:600px;text-align:right;top:82.50px;height:10px;line-height:10px;font-size:8.5px;font-weight:normal;color:#1a1a1a;font-family:'Liberation Sans', sans-serif;white-space:nowrap;transform:scaleX(0.83);transform-origin:100% 50%;">01-May-23</div><div style="left:148.70px;top:82.50px;height:10px;line-height:10px;font-size:8.5px;font-weight:normal;color:#1a1a1a;font-family:'Liberation Sans', sans-serif;white-space:nowrap;transform:scaleX(0.83);transform-origin:0 50%;">30-Jun-23</div><div style="left:107.52px;top:96.95px;width:52.88px;height:6.00px;background:#ee1111;border:1px solid #202020;box-sizing:border-box;"></div><div style="left:-501.08px;width:600px;text-align:right;top:94.50px;height:10px;line-height:10px;font-size:8.5px;font-weight:normal;color:#1a1a1a;font-family:'Liberation Sans', sans-serif;white-space:nowrap;transform:scaleX(0.83);transform-origin:100% 50%;">22-May-23</div><svg style="left:100.02px;top:98.27px;width:7px;height:4.6px" viewBox="0 0 7 4.6"><path d="M0 2.3H3.5" stroke="#111" stroke-width="1"/><path d="M2.8 0L7 2.3L2.8 4.6Z" fill="#111"/></svg><div style="left:166.70px;top:94.50px;height:10px;line-height:10px;font-size:8.5px;font-weight:normal;color:#1a1a1a;font-family:'Liberation Sans', sans-serif;white-space:nowrap;transform:scaleX(0.83);transform-origin:0 50%;">21-Jul-23</div><div style="left:89.52px;top:109.00px;width:16.88px;height:6.00px;background:#ee1111;border:1px solid #202020;box-sizing:border-box;"></div><div style="left:-519.08px;width:600px;text-align:right;top:106.50px;height:10px;line-height:10px;font-size:8.5px;font-weight:normal;color:#1a1a1a;font-family:'Liberation Sans', sans-serif;white-space:nowrap;transform:scaleX(0.83);transform-origin:100% 50%;">01-May-23</div><div style="left:112.71px;top:106.50px;height:10px;line-height:10px;font-size:8.5px;font-weight:normal;color:#1a1a1a;font-family:'Liberation Sans', sans-serif;white-space:nowrap;transform:scaleX(0.83);transform-origin:0 50%;">19-May-23</div><div style="left:179.51px;top:121.05px;width:16.88px;height:6.00px;background:#80ef80;border:1px solid #202020;box-sizing:border-box;"></div><div style="left:-429.09px;width:600px;text-align:right;top:118.50px;height:10px;line-height:10px;font-size:8.5px;font-weight:normal;color:#1a1a1a;font-family:'Liberation Sans', sans-serif;white-space:nowrap;transform:scaleX(0.83);transform-origin:100% 50%;">14-Aug-23</div><svg style="left:172.01px;top:122.37px;width:7px;height:4.6px" viewBox="0 0 7 4.6"><path d="M0 2.3H3.5" stroke="#111" stroke-width="1"/><path d="M2.8 0L7 2.3L2.8 4.6Z" fill="#111"/></svg><div style="left:202.69px;top:118.50px;height:10px;line-height:10px;font-size:8.5px;font-weight:normal;color:#1a1a1a;font-family:'Liberation Sans', sans-serif;white-space:nowrap;transform:scaleX(0.83);transform-origin:0 50%;">01-Sep-23</div><div style="left:251.50px;top:133.10px;width:46.88px;height:6.00px;background:#ee1111;border:1px solid #202020;box-sizing:border-box;"></div><div style="left:-357.10px;width:600px;text-align:right;top:130.50px;height:10px;line-height:10px;font-size:8.5px;font-weight:normal;color:#1a1a1a;font-family:'Liberation Sans', sans-serif;white-space:nowrap;transform:scaleX(0.83);transform-origin:100% 50%;">06-Nov-23</div><svg style="left:244.00px;top:134.42px;width:7px;height:4.6px" viewBox="0 0 7 4.6"><path d="M0 2.3H3.5" stroke="#111" stroke-width="1"/><path d="M2.8 0L7 2.3L2.8 4.6Z" fill="#111"/></svg><div style="left:304.67px;top:130.50px;height:10px;line-height:10px;font-size:8.5px;font-weight:normal;color:#1a1a1a;font-family:'Liberation Sans', sans-serif;white-space:nowrap;transform:scaleX(0.83);transform-origin:0 50%;">29-Dec-23*</div><div style="left:125.52px;top:157.20px;width:52.88px;height:6.00px;background:#80ef80;border:1px solid #202020;box-sizing:border-box;"></div><div style="left:-483.08px;width:600px;text-align:right;top:154.50px;height:10px;line-height:10px;font-size:8.5px;font-weight:normal;color:#1a1a1a;font-family:'Liberation Sans', sans-serif;white-space:nowrap;transform:scaleX(0.83);transform-origin:100% 50%;">12-Jun-23</div><svg style="left:118.02px;top:158.52px;width:7px;height:4.6px" viewBox="0 0 7 4.6"><path d="M0 2.3H3.5" stroke="#111" stroke-width="1"/><path d="M2.8 0L7 2.3L2.8 4.6Z" fill="#111"/></svg><div style="left:184.69px;top:154.50px;height:10px;line-height:10px;font-size:8.5px;font-weight:normal;color:#1a1a1a;font-family:'Liberation Sans', sans-serif;white-space:nowrap;transform:scaleX(0.83);transform-origin:0 50%;">11-Aug-23</div><div style="left:125.52px;top:169.25px;width:52.88px;height:6.00px;background:#80ef80;border:1px solid #202020;box-sizing:border-box;"></div><div style="left:-483.08px;width:600px;text-align:right;top:166.50px;height:10px;line-height:10px;font-size:8.5px;font-weight:normal;color:#1a1a1a;font-family:'Liberation Sans', sans-serif;white-space:nowrap;transform:scaleX(0.83);transform-origin:100% 50%;">12-Jun-23</div><svg style="left:118.02px;top:170.57px;width:7px;height:4.6px" viewBox="0 0 7 4.6"><path d="M0 2.3H3.5" stroke="#111" stroke-width="1"/><path d="M2.8 0L7 2.3L2.8 4.6Z" fill="#111"/></svg><div style="left:184.69px;top:166.50px;height:10px;line-height:10px;font-size:8.5px;font-weight:normal;color:#1a1a1a;font-family:'Liberation Sans', sans-serif;white-space:nowrap;transform:scaleX(0.83);transform-origin:0 50%;">11-Aug-23</div><div style="left:161.51px;top:193.35px;width:28.88px;height:6.00px;background:#ee1111;border:1px solid #202020;box-sizing:border-box;"></div><div style="left:-447.09px;width:600px;text-align:right;top:191.50px;height:10px;line-height:10px;font-size:8.5px;font-weight:normal;color:#1a1a1a;font-family:'Liberation Sans', sans-serif;white-space:nowrap;transform:scaleX(0.83);transform-origin:100% 50%;">24-Jul-23</div><svg style="left:154.01px;top:194.68px;width:7px;height:4.6px" viewBox="0 0 7 4.6"><path d="M0 2.3H3.5" stroke="#111" stroke-width="1"/><path d="M2.8 0L7 2.3L2.8 4.6Z" fill="#111"/></svg><div style="left:196.69px;top:191.50px;height:10px;line-height:10px;font-size:8.5px;font-weight:normal;color:#1a1a1a;font-family:'Liberation Sans', sans-serif;white-space:nowrap;transform:scaleX(0.83);transform-origin:0 50%;">25-Aug-23</div><div style="left:191.51px;top:205.40px;width:70.87px;height:6.00px;background:#ee1111;border:1px solid #202020;box-sizing:border-box;"></div><div style="left:-417.09px;width:600px;text-align:right;top:203.50px;height:10px;line-height:10px;font-size:8.5px;font-weight:normal;color:#1a1a1a;font-family:'Liberation Sans', sans-serif;white-space:nowrap;transform:scaleX(0.83);transform-origin:100% 50%;">28-Aug-23</div><svg style="left:184.01px;top:206.73px;width:7px;height:4.6px" viewBox="0 0 7 4.6"><path d="M0 2.3H3.5" stroke="#111" stroke-width="1"/><path d="M2.8 0L7 2.3L2.8 4.6Z" fill="#111"/></svg><div style="left:268.68px;top:203.50px;height:10px;line-height:10px;font-size:8.5px;font-weight:normal;color:#1a1a1a;font-family:'Liberation Sans', sans-serif;white-space:nowrap;transform:scaleX(0.83);transform-origin:0 50%;">17-Nov-23</div><div style="left:227.50px;top:217.45px;width:46.88px;height:6.00px;background:#80ef80;border:1px solid #202020;box-sizing:border-box;"></div><div style="left:-381.10px;width:600px;text-align:right;top:215.50px;height:10px;line-height:10px;font-size:8.5px;font-weight:normal;color:#1a1a1a;font-family:'Liberation Sans', sans-serif;white-space:nowrap;transform:scaleX(0.83);transform-origin:100% 50%;">09-Oct-23</div><svg style="left:220.00px;top:218.77px;width:7px;height:4.6px" viewBox="0 0 7 4.6"><path d="M0 2.3H3.5" stroke="#111" stroke-width="1"/><path d="M2.8 0L7 2.3L2.8 4.6Z" fill="#111"/></svg><div style="left:280.68px;top:215.50px;height:10px;line-height:10px;font-size:8.5px;font-weight:normal;color:#1a1a1a;font-family:'Liberation Sans', sans-serif;white-space:nowrap;transform:scaleX(0.83);transform-origin:0 50%;">01-Dec-23</div><div style="left:137.51px;top:229.50px;width:58.88px;height:6.00px;background:#80ef80;border:1px solid #202020;box-sizing:border-box;"></div><div style="left:-471.09px;width:600px;text-align:right;top:227.50px;height:10px;line-height:10px;font-size:8.5px;font-weight:normal;color:#1a1a1a;font-family:'Liberation Sans', sans-serif;white-space:nowrap;transform:scaleX(0.83);transform-origin:100% 50%;">26-Jun-23</div><div style="left:202.69px;top:227.50px;height:10px;line-height:10px;font-size:8.5px;font-weight:normal;color:#1a1a1a;font-family:'Liberation Sans', sans-serif;white-space:nowrap;transform:scaleX(0.83);transform-origin:0 50%;">01-Sep-23</div><div style="left:275.49px;top:241.55px;width:16.88px;height:6.00px;background:#80ef80;border:1px solid #202020;box-sizing:border-box;"></div><div style="left:-333.11px;width:600px;text-align:right;top:239.50px;height:10px;line-height:10px;font-size:8.5px;font-weight:normal;color:#1a1a1a;font-family:'Liberation Sans', sans-serif;white-space:nowrap;transform:scaleX(0.83);transform-origin:100% 50%;">04-Dec-23</div><svg style="left:267.99px;top:242.88px;width:7px;height:4.6px" viewBox="0 0 7 4.6"><path d="M0 2.3H3.5" stroke="#111" stroke-width="1"/><path d="M2.8 0L7 2.3L2.8 4.6Z" fill="#111"/></svg><div style="left:298.67px;top:239.50px;height:10px;line-height:10px;font-size:8.5px;font-weight:normal;color:#1a1a1a;font-family:'Liberation Sans', sans-serif;white-space:nowrap;transform:scaleX(0.83);transform-origin:0 50%;">22-Dec-23</div><div style="left:215.50px;top:253.60px;width:46.88px;height:6.00px;background:#ee1111;border:1px solid #202020;box-sizing:border-box;"></div><div style="left:-393.10px;width:600px;text-align:right;top:251.50px;height:10px;line-height:10px;font-size:8.5px;font-weight:normal;color:#1a1a1a;font-family:'Liberation Sans', sans-serif;white-space:nowrap;transform:scaleX(0.83);transform-origin:100% 50%;">25-Sep-23</div><svg style="left:208.00px;top:254.93px;width:7px;height:4.6px" viewBox="0 0 7 4.6"><path d="M0 2.3H3.5" stroke="#111" stroke-width="1"/><path d="M2.8 0L7 2.3L2.8 4.6Z" fill="#111"/></svg><div style="left:268.68px;top:251.50px;height:10px;line-height:10px;font-size:8.5px;font-weight:normal;color:#1a1a1a;font-family:'Liberation Sans', sans-serif;white-space:nowrap;transform:scaleX(0.83);transform-origin:0 50%;">17-Nov-23</div><div style="left:263.49px;top:277.70px;width:40.88px;height:6.00px;background:#80ef80;border:1px solid #202020;box-sizing:border-box;"></div><div style="left:-345.11px;width:600px;text-align:right;top:275.50px;height:10px;line-height:10px;font-size:8.5px;font-weight:normal;color:#1a1a1a;font-family:'Liberation Sans', sans-serif;white-space:nowrap;transform:scaleX(0.83);transform-origin:100% 50%;">20-Nov-23</div><svg style="left:255.99px;top:279.02px;width:7px;height:4.6px" viewBox="0 0 7 4.6"><path d="M0 2.3H3.5" stroke="#111" stroke-width="1"/><path d="M2.8 0L7 2.3L2.8 4.6Z" fill="#111"/></svg><div style="left:310.67px;top:275.50px;height:10px;line-height:10px;font-size:8.5px;font-weight:normal;color:#1a1a1a;font-family:'Liberation Sans', sans-serif;white-space:nowrap;transform:scaleX(0.83);transform-origin:0 50%;">05-Jan-24</div><div style="left:323.48px;top:289.75px;width:16.88px;height:6.00px;background:#80ef80;border:1px solid #202020;box-sizing:border-box;"></div><div style="left:-285.12px;width:600px;text-align:right;top:287.50px;height:10px;line-height:10px;font-size:8.5px;font-weight:normal;color:#1a1a1a;font-family:'Liberation Sans', sans-serif;white-space:nowrap;transform:scaleX(0.83);transform-origin:100% 50%;">29-Jan-24</div><svg style="left:315.98px;top:291.08px;width:7px;height:4.6px" viewBox="0 0 7 4.6"><path d="M0 2.3H3.5" stroke="#111" stroke-width="1"/><path d="M2.8 0L7 2.3L2.8 4.6Z" fill="#111"/></svg><div style="left:346.67px;top:287.50px;height:10px;line-height:10px;font-size:8.5px;font-weight:normal;color:#1a1a1a;font-family:'Liberation Sans', sans-serif;white-space:nowrap;transform:scaleX(0.83);transform-origin:0 50%;">16-Feb-24</div><div style="left:239.50px;top:301.80px;width:2.31px;height:6.00px;background:#80ef80;border:1px solid #202020;box-sizing:border-box;"></div><div style="left:-369.10px;width:600px;text-align:right;top:299.50px;height:10px;line-height:10px;font-size:8.5px;font-weight:normal;color:#1a1a1a;font-family:'Liberation Sans', sans-serif;white-space:nowrap;transform:scaleX(0.83);transform-origin:100% 50%;">23-Oct-23</div><svg style="left:232.00px;top:303.12px;width:7px;height:4.6px" viewBox="0 0 7 4.6"><path d="M0 2.3H3.5" stroke="#111" stroke-width="1"/><path d="M2.8 0L7 2.3L2.8 4.6Z" fill="#111"/></svg><div style="left:248.11px;top:299.50px;height:10px;line-height:10px;font-size:8.5px;font-weight:normal;color:#1a1a1a;font-family:'Liberation Sans', sans-serif;white-space:nowrap;transform:scaleX(0.83);transform-origin:0 50%;">24-Oct-23</div><div style="left:305.49px;top:313.85px;width:22.88px;height:6.00px;background:#80ef80;border:1px solid #202020;box-sizing:border-box;"></div><div style="left:-303.11px;width:600px;text-align:right;top:311.50px;height:10px;line-height:10px;font-size:8.5px;font-weight:normal;color:#1a1a1a;font-family:'Liberation Sans', sans-serif;white-space:nowrap;transform:scaleX(0.83);transform-origin:100% 50%;">08-Jan-24</div><svg style="left:297.99px;top:315.18px;width:7px;height:4.6px" viewBox="0 0 7 4.6"><path d="M0 2.3H3.5" stroke="#111" stroke-width="1"/><path d="M2.8 0L7 2.3L2.8 4.6Z" fill="#111"/></svg><div style="left:334.67px;top:311.50px;height:10px;line-height:10px;font-size:8.5px;font-weight:normal;color:#1a1a1a;font-family:'Liberation Sans', sans-serif;white-space:nowrap;transform:scaleX(0.83);transform-origin:0 50%;">02-Feb-24</div><div style="left:341.48px;top:325.90px;width:22.88px;height:6.00px;background:#80ef80;border:1px solid #202020;box-sizing:border-box;"></div><div style="left:-267.12px;width:600px;text-align:right;top:323.50px;height:10px;line-height:10px;font-size:8.5px;font-weight:normal;color:#1a1a1a;font-family:'Liberation Sans', sans-serif;white-space:nowrap;transform:scaleX(0.83);transform-origin:100% 50%;">19-Feb-24</div><svg style="left:333.98px;top:327.23px;width:7px;height:4.6px" viewBox="0 0 7 4.6"><path d="M0 2.3H3.5" stroke="#111" stroke-width="1"/><path d="M2.8 0L7 2.3L2.8 4.6Z" fill="#111"/></svg><div style="left:370.66px;top:323.50px;height:10px;line-height:10px;font-size:8.5px;font-weight:normal;color:#1a1a1a;font-family:'Liberation Sans', sans-serif;white-space:nowrap;transform:scaleX(0.83);transform-origin:0 50%;">15-Mar-24</div><div style="left:365.48px;top:337.95px;width:1.50px;height:6.00px;background:#80ef80;border:1px solid #202020;box-sizing:border-box;"></div><div style="left:-243.12px;width:600px;text-align:right;top:335.50px;height:10px;line-height:10px;font-size:8.5px;font-weight:normal;color:#1a1a1a;font-family:'Liberation Sans', sans-serif;white-space:nowrap;transform:scaleX(0.83);transform-origin:100% 50%;">18-Mar-24</div><svg style="left:357.98px;top:339.27px;width:7px;height:4.6px" viewBox="0 0 7 4.6"><path d="M0 2.3H3.5" stroke="#111" stroke-width="1"/><path d="M2.8 0L7 2.3L2.8 4.6Z" fill="#111"/></svg><div style="left:373.23px;top:335.50px;height:10px;line-height:10px;font-size:8.5px;font-weight:normal;color:#1a1a1a;font-family:'Liberation Sans', sans-serif;white-space:nowrap;transform:scaleX(0.83);transform-origin:0 50%;">18-Mar-24</div><div style="left:89.50px;top:26.50px;width:1.00px;height:322.50px;background:#5555cc;"></div></div>
</body></html>
